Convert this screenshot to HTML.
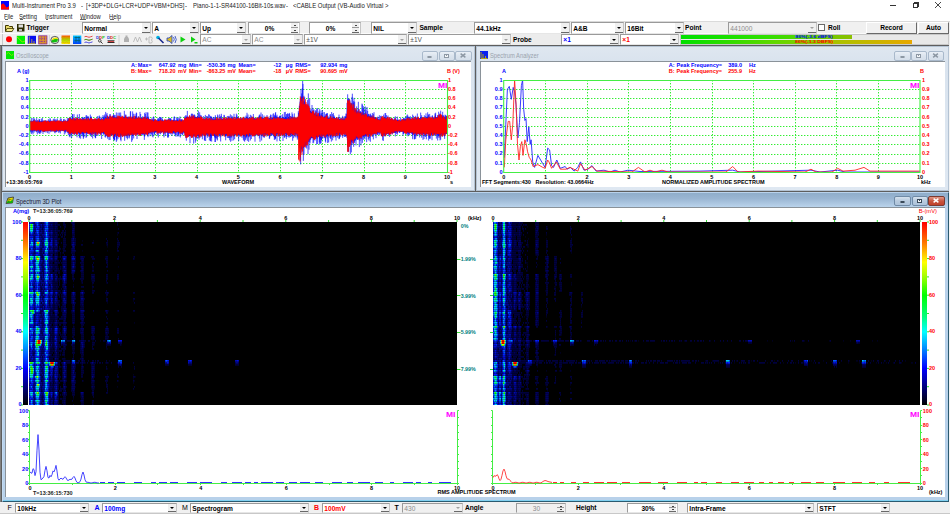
<!DOCTYPE html><html><head><meta charset="utf-8"><style>
html,body{margin:0;padding:0;}
body{width:950px;height:514px;overflow:hidden;position:relative;background:#fff;font-family:"Liberation Sans", sans-serif;}
.a{position:absolute;}
.t{position:absolute;white-space:pre;line-height:1.2;font-family:"Liberation Sans", sans-serif;}
svg{position:absolute;left:0;top:0;}
</style></head><body>
<svg width="950" height="20"><rect x="1" y="1" width="8" height="8.5" fill="#0000ff"/><path d="M1 5 Q2 3 3.5 3.5 Q5 4.5 6.3 7.2 Q7.5 7.5 9 6 V9.5 H1z" fill="#ff0000"/></svg>
<div class="t" style="left:11.6px;top:1.7px;font-size:6.45px;font-weight:normal;color:#222;transform:scaleX(0.93);transform-origin:0 50%;">Multi-Instrument Pro 3.9</div>
<div class="t" style="left:81px;top:1.7px;font-size:6.45px;font-weight:normal;color:#222;transform:scaleX(0.93);transform-origin:0 50%;">-</div>
<div class="t" style="left:86.3px;top:1.7px;font-size:6.45px;font-weight:normal;color:#222;transform:scaleX(0.93);transform-origin:0 50%;">[+3DP+DLG+LCR+UDP+VBM+DHS]</div>
<div class="t" style="left:185px;top:1.7px;font-size:6.45px;font-weight:normal;color:#222;transform:scaleX(0.93);transform-origin:0 50%;">-</div>
<div class="t" style="left:192.5px;top:1.7px;font-size:6.45px;font-weight:normal;color:#222;transform:scaleX(0.93);transform-origin:0 50%;">Piano-1-1-SR44100-16Bit-10s.wav</div>
<div class="t" style="left:285.5px;top:1.7px;font-size:6.45px;font-weight:normal;color:#222;transform:scaleX(0.93);transform-origin:0 50%;">-</div>
<div class="t" style="left:292.5px;top:1.7px;font-size:6.45px;font-weight:normal;color:#222;transform:scaleX(0.93);transform-origin:0 50%;">&lt;CABLE Output (VB-Audio Virtual &gt;</div>
<div class="a" style="left:890px;top:5px;width:6px;height:1px;background:#333"></div>
<div class="a" style="left:913px;top:3px;width:5px;height:5px;border:1px solid #333;box-sizing:border-box;"></div>
<div class="a" style="left:914px;top:2px;width:5px;height:5px;border-top:1px solid #333;border-right:1px solid #333;box-sizing:border-box;"></div>
<svg width="950" height="514" style="pointer-events:none"><path d="M935 2 L941 8 M941 2 L935 8" stroke="#333" stroke-width="0.9"/></svg>
<div class="t" style="left:4px;top:12.5px;font-size:6.45px;font-weight:normal;color:#222;transform:scaleX(0.9);transform-origin:0 50%;">File</div>
<div class="t" style="left:19px;top:12.5px;font-size:6.45px;font-weight:normal;color:#222;transform:scaleX(0.9);transform-origin:0 50%;">Setting</div>
<div class="t" style="left:45px;top:12.5px;font-size:6.45px;font-weight:normal;color:#222;transform:scaleX(0.9);transform-origin:0 50%;">Instrument</div>
<div class="t" style="left:80px;top:12.5px;font-size:6.45px;font-weight:normal;color:#222;transform:scaleX(0.9);transform-origin:0 50%;">Window</div>
<div class="t" style="left:109px;top:12.5px;font-size:6.45px;font-weight:normal;color:#222;transform:scaleX(0.9);transform-origin:0 50%;">Help</div>
<div class="a" style="left:4.5px;top:19.0px;width:3px;height:0.7px;background:#666"></div>
<div class="a" style="left:19.5px;top:19.0px;width:3.5px;height:0.7px;background:#666"></div>
<div class="a" style="left:45.5px;top:19.0px;width:2px;height:0.7px;background:#666"></div>
<div class="a" style="left:80px;top:19.0px;width:5.5px;height:0.7px;background:#666"></div>
<div class="a" style="left:109.5px;top:19.0px;width:4px;height:0.7px;background:#666"></div>
<div class="a" style="left:0px;top:21px;width:950px;height:1px;background:#dadada"></div>
<div class="a" style="left:0px;top:22px;width:950px;height:24px;background:#f0f0f0"></div>
<div class="a" style="left:0px;top:33px;width:950px;height:1px;background:#fbfbfb"></div>
<div class="a" style="left:2px;top:22px;width:1px;height:11px;background:#c8c8c8"></div>
<div class="a" style="left:2px;top:34px;width:1px;height:11px;background:#c8c8c8"></div>
<svg width="950" height="60">
<path d="M5.5 25.5h3l1 1h3v4.5h-7z" fill="#e6d86a" stroke="#403800" stroke-width="1"/>
<path d="M7 28.5h7l-2 3h-6.5z" fill="#f3ea8a" stroke="#403800" stroke-width="0.8"/>
<rect x="17" y="24" width="7.5" height="7.5" fill="#2b2b00"/>
<rect x="18.5" y="24.5" width="4.5" height="3" fill="#ddd"/>
<rect x="19" y="29" width="3" height="2" fill="#bbb"/>
</svg>
<div class="t" style="left:26.6px;top:23.6px;font-size:6.6px;font-weight:bold;color:#000;transform:scaleX(1.0);transform-origin:0 50%;">Trigger</div>
<div class="a" style="left:82px;top:22px;width:69px;height:12px;background:#fff;border-top:1px solid #9a9a9a;border-left:1px solid #9a9a9a;border-bottom:1px solid #e6e6e6;border-right:1px solid #c4c4c4;box-sizing:border-box;"></div><div class="t" style="left:84.3px;top:24.8px;font-size:6.6px;font-weight:bold;color:#000;transform:scaleX(1.0);transform-origin:0 50%;">Normal</div><div class="a" style="left:142px;top:23px;width:8px;height:10px;background:#f0f0f0;border-bottom:1px solid #696969;box-sizing:border-box;"></div><div class="a" style="left:144px;top:27.0px;width:0;height:0;border-left:2px solid transparent;border-right:2px solid transparent;border-top:2.5px solid #000;"></div>
<div class="a" style="left:152px;top:22px;width:47px;height:12px;background:#fff;border-top:1px solid #9a9a9a;border-left:1px solid #9a9a9a;border-bottom:1px solid #e6e6e6;border-right:1px solid #c4c4c4;box-sizing:border-box;"></div><div class="t" style="left:154.3px;top:24.8px;font-size:6.6px;font-weight:bold;color:#000;transform:scaleX(1.0);transform-origin:0 50%;">A</div><div class="a" style="left:190px;top:23px;width:8px;height:10px;background:#f0f0f0;border-bottom:1px solid #696969;box-sizing:border-box;"></div><div class="a" style="left:192px;top:27.0px;width:0;height:0;border-left:2px solid transparent;border-right:2px solid transparent;border-top:2.5px solid #000;"></div>
<div class="a" style="left:200px;top:22px;width:46px;height:12px;background:#fff;border-top:1px solid #9a9a9a;border-left:1px solid #9a9a9a;border-bottom:1px solid #e6e6e6;border-right:1px solid #c4c4c4;box-sizing:border-box;"></div><div class="t" style="left:202.3px;top:24.8px;font-size:6.6px;font-weight:bold;color:#000;transform:scaleX(1.0);transform-origin:0 50%;">Up</div><div class="a" style="left:237px;top:23px;width:8px;height:10px;background:#f0f0f0;border-bottom:1px solid #696969;box-sizing:border-box;"></div><div class="a" style="left:239px;top:27.0px;width:0;height:0;border-left:2px solid transparent;border-right:2px solid transparent;border-top:2.5px solid #000;"></div>
<div class="a" style="left:248px;top:22px;width:52px;height:12px;background:#fff;border-top:1px solid #9a9a9a;border-left:1px solid #9a9a9a;border-bottom:1px solid #e6e6e6;border-right:1px solid #c4c4c4;box-sizing:border-box;"></div><div class="t" style="left:269.5px;top:24.8px;font-size:6.6px;font-weight:bold;color:#000;transform:translateX(-50%) scaleX(1.0);">0%</div><div class="a" style="left:291px;top:23px;width:7px;height:5px;background:#f0f0f0;border-bottom:1px solid #9a9a9a;box-sizing:border-box;"></div><div class="a" style="left:291px;top:28px;width:7px;height:5px;background:#f0f0f0;border-bottom:1px solid #696969;box-sizing:border-box;"></div><div class="a" style="left:294px;top:25px;width:1.5px;height:1px;background:#444"></div><div class="a" style="left:294px;top:30px;width:1.5px;height:1px;background:#444"></div>
<div class="a" style="left:309px;top:22px;width:52px;height:12px;background:#fff;border-top:1px solid #9a9a9a;border-left:1px solid #9a9a9a;border-bottom:1px solid #e6e6e6;border-right:1px solid #c4c4c4;box-sizing:border-box;"></div><div class="t" style="left:330.5px;top:24.8px;font-size:6.6px;font-weight:bold;color:#000;transform:translateX(-50%) scaleX(1.0);">0%</div><div class="a" style="left:352px;top:23px;width:7px;height:5px;background:#f0f0f0;border-bottom:1px solid #9a9a9a;box-sizing:border-box;"></div><div class="a" style="left:352px;top:28px;width:7px;height:5px;background:#f0f0f0;border-bottom:1px solid #696969;box-sizing:border-box;"></div><div class="a" style="left:355px;top:25px;width:1.5px;height:1px;background:#444"></div><div class="a" style="left:355px;top:30px;width:1.5px;height:1px;background:#444"></div>
<div class="a" style="left:371px;top:22px;width:46px;height:12px;background:#fff;border-top:1px solid #9a9a9a;border-left:1px solid #9a9a9a;border-bottom:1px solid #e6e6e6;border-right:1px solid #c4c4c4;box-sizing:border-box;"></div><div class="t" style="left:373.3px;top:24.8px;font-size:6.6px;font-weight:bold;color:#000;transform:scaleX(1.0);transform-origin:0 50%;">NIL</div><div class="a" style="left:408px;top:23px;width:8px;height:10px;background:#f0f0f0;border-bottom:1px solid #696969;box-sizing:border-box;"></div><div class="a" style="left:410px;top:27.0px;width:0;height:0;border-left:2px solid transparent;border-right:2px solid transparent;border-top:2.5px solid #000;"></div>
<div class="t" style="left:419.4px;top:23.7px;font-size:6.6px;font-weight:bold;color:#000;transform:scaleX(1.0);transform-origin:0 50%;">Sample</div>
<div class="a" style="left:474px;top:22px;width:96px;height:12px;background:#fff;border-top:1px solid #9a9a9a;border-left:1px solid #9a9a9a;border-bottom:1px solid #e6e6e6;border-right:1px solid #c4c4c4;box-sizing:border-box;"></div><div class="t" style="left:476.3px;top:24.8px;font-size:6.6px;font-weight:bold;color:#000;transform:scaleX(1.0);transform-origin:0 50%;">44.1kHz</div><div class="a" style="left:561px;top:23px;width:8px;height:10px;background:#f0f0f0;border-bottom:1px solid #696969;box-sizing:border-box;"></div><div class="a" style="left:563px;top:27.0px;width:0;height:0;border-left:2px solid transparent;border-right:2px solid transparent;border-top:2.5px solid #000;"></div>
<div class="a" style="left:571px;top:22px;width:53px;height:12px;background:#fff;border-top:1px solid #9a9a9a;border-left:1px solid #9a9a9a;border-bottom:1px solid #e6e6e6;border-right:1px solid #c4c4c4;box-sizing:border-box;"></div><div class="t" style="left:573.3px;top:24.8px;font-size:6.6px;font-weight:bold;color:#000;transform:scaleX(1.0);transform-origin:0 50%;">A&amp;B</div><div class="a" style="left:615px;top:23px;width:8px;height:10px;background:#f0f0f0;border-bottom:1px solid #696969;box-sizing:border-box;"></div><div class="a" style="left:617px;top:27.0px;width:0;height:0;border-left:2px solid transparent;border-right:2px solid transparent;border-top:2.5px solid #000;"></div>
<div class="a" style="left:625px;top:22px;width:59px;height:12px;background:#fff;border-top:1px solid #9a9a9a;border-left:1px solid #9a9a9a;border-bottom:1px solid #e6e6e6;border-right:1px solid #c4c4c4;box-sizing:border-box;"></div><div class="t" style="left:627.3px;top:24.8px;font-size:6.6px;font-weight:bold;color:#000;transform:scaleX(1.0);transform-origin:0 50%;">16Bit</div><div class="a" style="left:675px;top:23px;width:8px;height:10px;background:#f0f0f0;border-bottom:1px solid #696969;box-sizing:border-box;"></div><div class="a" style="left:677px;top:27.0px;width:0;height:0;border-left:2px solid transparent;border-right:2px solid transparent;border-top:2.5px solid #000;"></div>
<div class="t" style="left:685px;top:23.7px;font-size:6.6px;font-weight:bold;color:#000;transform:scaleX(1.0);transform-origin:0 50%;">Point</div>
<div class="a" style="left:728px;top:22px;width:89px;height:12px;background:#f0f0f0;border-top:1px solid #9a9a9a;border-left:1px solid #9a9a9a;border-bottom:1px solid #e6e6e6;border-right:1px solid #c4c4c4;box-sizing:border-box;"></div><div class="t" style="left:730.3px;top:24.8px;font-size:6.6px;font-weight:normal;color:#8d8d8d;transform:scaleX(1.0);transform-origin:0 50%;">441000</div><div class="a" style="left:808px;top:23px;width:8px;height:10px;background:#f0f0f0;border-bottom:1px solid #696969;box-sizing:border-box;"></div><div class="a" style="left:810px;top:27.0px;width:0;height:0;border-left:2px solid transparent;border-right:2px solid transparent;border-top:2.5px solid #a0a0a0;"></div>
<div class="a" style="left:818px;top:24px;width:7px;height:7px;background:#fff;border:1px solid #6a6a6a;box-sizing:border-box;"></div>
<div class="t" style="left:828px;top:23.7px;font-size:6.6px;font-weight:bold;color:#000;transform:scaleX(1.0);transform-origin:0 50%;">Roll</div>
<div class="a" style="left:866px;top:22px;width:51px;height:12px;background:#f0f0f0;border-top:1px solid #fff;border-left:1px solid #fff;border-right:1px solid #696969;border-bottom:1px solid #696969;box-sizing:border-box;"></div>
<div class="t" style="left:891.5px;top:23.7px;font-size:6.6px;font-weight:bold;color:#000;transform:translateX(-50%) scaleX(1.0);">Record</div>
<div class="a" style="left:918px;top:22px;width:31px;height:12px;background:#f0f0f0;border-top:1px solid #fff;border-left:1px solid #fff;border-right:1px solid #696969;border-bottom:1px solid #696969;box-sizing:border-box;"></div>
<div class="t" style="left:933.5px;top:23.7px;font-size:6.6px;font-weight:bold;color:#000;transform:translateX(-50%) scaleX(1.0);">Auto</div>
<svg width="950" height="60">
<circle cx="9" cy="39.2" r="3" fill="#ff0000"/>
<rect x="16.8" y="35.8" width="8.2" height="8.2" fill="#00f000"/>
<path d="M17 37 Q19 38 21 41 Q22.5 43 25 41" fill="none" stroke="#c8e000" stroke-width="0.7"/>
<rect x="27.8" y="35.8" width="8.2" height="8.2" fill="#0a10f0"/>
<path d="M29.3 36.5V43.5M31.8 39V43.5M34 41V43.5M28.5 43.5H35.5" stroke="#b8a040" stroke-width="0.9" fill="none"/>
<rect x="38.7" y="35.8" width="8.3" height="8.2" fill="#d89030" stroke="#8020a0" stroke-width="0.7"/>
<path d="M39.5 38.5h7M39.5 41.5h7M41.5 36.5v7M44.5 36.5v7" stroke="#9030a0" stroke-width="0.9" stroke-dasharray="1 1.2"/>
<rect x="48.8" y="35" width="1" height="10" fill="#d0d0d0"/>
<ellipse cx="54.8" cy="40" rx="4" ry="3.6" fill="#f0f0f0" stroke="#333" stroke-width="0.8"/>
<path d="M51.5 40.5 Q54 38 58 39 L57.5 41.5 Q54 43 51.5 42z" fill="#10c010"/>
<path d="M52 39 Q54.5 37 57.5 37.8 L57.8 39.2 Q54.5 38.6 52 40.2z" fill="#f0e000"/>
<defs><linearGradient id="g1" x1="0" y1="0" x2="0" y2="1"><stop offset="0" stop-color="#ff5000"/><stop offset="0.5" stop-color="#a0e000"/><stop offset="1" stop-color="#ffe000"/></linearGradient>
<linearGradient id="g2" x1="0" y1="0" x2="0" y2="1"><stop offset="0" stop-color="#00c8ff"/><stop offset="1" stop-color="#0040ff"/></linearGradient></defs>
<rect x="61.5" y="35.5" width="8.5" height="8.5" fill="url(#g1)"/>
<path d="M61.5 37.5q1 -1 2 0t2 0t2 0t2.5 0M61.5 40q1 -1 2 0t2 0t2 0t2.5 0M61.5 42.5q1 -1 2 0t2 0t2 0t2.5 0" stroke="#e0a000" stroke-width="0.6" fill="none"/>
<rect x="73" y="35.5" width="8.3" height="8.5" fill="url(#g2)"/>
<path d="M74.5 37.5h5.5M74.5 40.5h5.5M76 36.5v6M79 36.5v6" stroke="#006070" stroke-width="0.8" fill="none"/>
<path d="M84.5 36.8q1.5 -1 3 0t3 0l2 -0.6M84.5 39.8q1.5 -1 3 0t3 0l2 -0.6" stroke="#e02020" stroke-width="0.8" fill="none"/>
<path d="M84.5 39.8q1.5 -1 3 0t3 0l2 -0.6" stroke="#20b020" stroke-width="0.8" fill="none"/>
<path d="M84.5 42.5q1.5 -1 3 0t3 0l2 -0.6" stroke="#2020e0" stroke-width="0.8" fill="none"/>
<text x="96" y="38.6" font-family="Liberation Sans" font-weight="bold" font-size="4.2" fill="#2040e0">D<tspan fill="#e02020">D</tspan><tspan fill="#20c020">P</tspan></text>
<circle cx="99.8" cy="40.8" r="1.3" fill="none" stroke="#222" stroke-width="0.8"/><path d="M100.8 41.8l1.8 1.8" stroke="#222" stroke-width="0.9"/>
<text x="107" y="38.6" font-family="Liberation Sans" font-weight="bold" font-size="4.2" fill="#2040e0">D<tspan fill="#e02020">D</tspan><tspan fill="#20c020">C</tspan></text>
<path d="M107.5 40.8h7M107.5 42.5h7" stroke="#111" stroke-width="0.9"/><path d="M108 41.6h6" stroke="#e02020" stroke-width="0.8"/>
<rect x="118.5" y="35" width="1" height="10" fill="#d0d0d0"/>
<path d="M124 42h5v-3l-1-2h-3l-1 2z" fill="#b0b0b0"/><rect x="125.5" y="35.5" width="2" height="2" fill="#b0b0b0"/>
<path d="M133.5 42l2 -5l2 5M137.5 42l2 -5l2 5" stroke="#b8b8b8" stroke-width="0.9" fill="none"/>
<path d="M145 39h3M146.5 37.5v3M149 37v6h2.5q1.5 -1.5 0 -3q1.5 -1.5 0 -3z" stroke="#b8b8b8" stroke-width="0.9" fill="none"/>
<circle cx="158" cy="37.5" r="1.8" fill="#00b0e0"/><path d="M158.5 38l5 5" stroke="#1a2a90" stroke-width="1.6"/>
<path d="M167 38h2l3 -2.5v8l-3 -2.5h-2z" fill="#e0c020" stroke="#2040c0" stroke-width="0.8"/>
<path d="M173.5 37q1.5 2.2 0 4.5M175 36q2.5 3.5 0 7" stroke="#2040c0" stroke-width="0.8" fill="none"/>
<path d="M180.5 36.5l5 3l-5 3z" fill="#10d010"/>
<path d="M191 36.5l4.5 3l-4.5 3z" fill="#10d010"/><rect x="194.5" y="42" width="3" height="1.5" fill="#10d010"/>
</svg>
<div class="a" style="left:200px;top:34px;width:51px;height:11px;background:#fff;border-top:1px solid #9a9a9a;border-left:1px solid #9a9a9a;border-bottom:1px solid #e6e6e6;border-right:1px solid #c4c4c4;box-sizing:border-box;"></div><div class="t" style="left:202.3px;top:36.3px;font-size:6.6px;font-weight:normal;color:#8d8d8d;transform:scaleX(1.0);transform-origin:0 50%;">AC</div><div class="a" style="left:242px;top:35px;width:8px;height:9px;background:#f0f0f0;border-bottom:1px solid #696969;box-sizing:border-box;"></div><div class="a" style="left:244px;top:38.5px;width:0;height:0;border-left:2px solid transparent;border-right:2px solid transparent;border-top:2.5px solid #a0a0a0;"></div>
<div class="a" style="left:252px;top:34px;width:51px;height:11px;background:#fff;border-top:1px solid #9a9a9a;border-left:1px solid #9a9a9a;border-bottom:1px solid #e6e6e6;border-right:1px solid #c4c4c4;box-sizing:border-box;"></div><div class="t" style="left:254.3px;top:36.3px;font-size:6.6px;font-weight:normal;color:#8d8d8d;transform:scaleX(1.0);transform-origin:0 50%;">AC</div><div class="a" style="left:294px;top:35px;width:8px;height:9px;background:#f0f0f0;border-bottom:1px solid #696969;box-sizing:border-box;"></div><div class="a" style="left:296px;top:38.5px;width:0;height:0;border-left:2px solid transparent;border-right:2px solid transparent;border-top:2.5px solid #a0a0a0;"></div>
<div class="a" style="left:304px;top:34px;width:103px;height:11px;background:#fff;border-top:1px solid #9a9a9a;border-left:1px solid #9a9a9a;border-bottom:1px solid #e6e6e6;border-right:1px solid #c4c4c4;box-sizing:border-box;"></div><div class="t" style="left:306.3px;top:36.3px;font-size:6.6px;font-weight:normal;color:#505050;transform:scaleX(1.0);transform-origin:0 50%;">&#177;1V</div><div class="a" style="left:398px;top:35px;width:8px;height:9px;background:#f0f0f0;border-bottom:1px solid #696969;box-sizing:border-box;"></div><div class="a" style="left:400px;top:38.5px;width:0;height:0;border-left:2px solid transparent;border-right:2px solid transparent;border-top:2.5px solid #a0a0a0;"></div>
<div class="a" style="left:408px;top:34px;width:103px;height:11px;background:#fff;border-top:1px solid #9a9a9a;border-left:1px solid #9a9a9a;border-bottom:1px solid #e6e6e6;border-right:1px solid #c4c4c4;box-sizing:border-box;"></div><div class="t" style="left:410.3px;top:36.3px;font-size:6.6px;font-weight:normal;color:#505050;transform:scaleX(1.0);transform-origin:0 50%;">&#177;1V</div><div class="a" style="left:502px;top:35px;width:8px;height:9px;background:#f0f0f0;border-bottom:1px solid #696969;box-sizing:border-box;"></div><div class="a" style="left:504px;top:38.5px;width:0;height:0;border-left:2px solid transparent;border-right:2px solid transparent;border-top:2.5px solid #a0a0a0;"></div>
<div class="a" style="left:512px;top:34px;width:49px;height:11px;background:#ececec;"></div>
<div class="t" style="left:513px;top:35.6px;font-size:6.6px;font-weight:bold;color:#000;transform:scaleX(1.0);transform-origin:0 50%;">Probe</div>
<div class="a" style="left:561px;top:34px;width:58px;height:11px;background:#fff;border-top:1px solid #9a9a9a;border-left:1px solid #9a9a9a;border-bottom:1px solid #e6e6e6;border-right:1px solid #c4c4c4;box-sizing:border-box;"></div><div class="t" style="left:563.3px;top:36.3px;font-size:6.6px;font-weight:bold;color:#0000ff;transform:scaleX(1.0);transform-origin:0 50%;">&#215;1</div><div class="a" style="left:610px;top:35px;width:8px;height:9px;background:#f0f0f0;border-bottom:1px solid #696969;box-sizing:border-box;"></div><div class="a" style="left:612px;top:38.5px;width:0;height:0;border-left:2px solid transparent;border-right:2px solid transparent;border-top:2.5px solid #000;"></div>
<div class="a" style="left:620px;top:34px;width:59px;height:11px;background:#fff;border-top:1px solid #9a9a9a;border-left:1px solid #9a9a9a;border-bottom:1px solid #e6e6e6;border-right:1px solid #c4c4c4;box-sizing:border-box;"></div><div class="t" style="left:622.3px;top:36.3px;font-size:6.6px;font-weight:bold;color:#ff0000;transform:scaleX(1.0);transform-origin:0 50%;">&#215;1</div><div class="a" style="left:670px;top:35px;width:8px;height:9px;background:#f0f0f0;border-bottom:1px solid #696969;box-sizing:border-box;"></div><div class="a" style="left:672px;top:38.5px;width:0;height:0;border-left:2px solid transparent;border-right:2px solid transparent;border-top:2.5px solid #000;"></div>
<div class="a" style="left:680px;top:34px;width:269px;height:11px;background:#e8e8e8;border:1px solid #c8c8c8;box-sizing:border-box;"></div>
<div class="a" style="left:681px;top:35px;width:171px;height:4px;background:linear-gradient(90deg,#00e000 0%,#30e000 50%,#8cc000 100%);"></div>
<div class="a" style="left:681px;top:40px;width:231px;height:4px;background:linear-gradient(90deg,#00e000 0%,#60d800 40%,#b0c000 70%,#e8a800 100%);"></div>
<div class="t" style="left:813.5px;top:34.7px;font-size:4.1px;font-weight:bold;color:#0000ff;transform:translateX(-50%) scaleX(1.25);">86%(-3.6 dBFS)</div>
<div class="t" style="left:813.5px;top:40.1px;font-size:4.1px;font-weight:bold;color:#ff0000;transform:translateX(-50%) scaleX(1.25);">86%(-1.3 DBFS)</div>
<div class="a" style="left:0px;top:45px;width:950px;height:457px;background:#5e5e5e"></div>
<div class="a" style="left:0px;top:46px;width:1px;height:456px;background:#808080"></div>
<div class="a" style="left:949px;top:45px;width:1px;height:457px;background:#f4f4f4"></div>
<div class="a" style="left:2px;top:46px;width:473px;height:145px;background:linear-gradient(180deg,#dfe7f0 0px,#d9e3ee 15px,#dfe8f2 100%);border:1px solid #b4c3d3;box-sizing:border-box;"></div><div class="a" style="left:6px;top:51px;width:8px;height:8px;background:#00e800;"></div><svg width="950" height="514"><path d="M6.5 54q2 -3 3.5 0t3.5 0" stroke="#a0e000" stroke-width="0.8" fill="none"/></svg><div class="t" style="left:16px;top:52.2px;font-size:6.3px;font-weight:normal;color:#9aa3ad;transform:scaleX(0.92);transform-origin:0 50%;">Oscilloscope</div>
<div class="a" style="left:422px;top:51px;width:16px;height:10px;background:linear-gradient(180deg,#e9eff6 0%,#dbe4ee 50%,#d5dfea 100%);border:1px solid #a9b9cb;border-radius:2px;box-sizing:border-box;"></div><div class="a" style="left:427.0px;top:55.7px;width:5px;height:2px;background:#fafafa;border:0.8px solid #8d98a4;border-radius:1px;box-sizing:border-box;"></div>
<div class="a" style="left:439px;top:51px;width:16px;height:10px;background:linear-gradient(180deg,#e9eff6 0%,#dbe4ee 50%,#d5dfea 100%);border:1px solid #a9b9cb;border-radius:2px;box-sizing:border-box;"></div><div class="a" style="left:443.9px;top:53.5px;width:5.2px;height:4.2px;background:#f4f6f8;border:1px solid #8d98a4;box-sizing:border-box;"></div><div class="a" style="left:445.7px;top:55.0px;width:1.6px;height:1.4px;background:#8d98a4;"></div>
<div class="a" style="left:455px;top:51px;width:17px;height:10px;background:linear-gradient(180deg,#e9eff6 0%,#dbe4ee 50%,#d5dfea 100%);border:1px solid #a9b9cb;border-radius:2px;box-sizing:border-box;"></div><svg width="950" height="514" style="pointer-events:none"><path d="M460.6 53.7L465.4 57.3M465.4 53.7L460.6 57.3" stroke="#8d98a4" stroke-width="1.5"/></svg>
<div class="a" style="left:476px;top:46px;width:473px;height:145px;background:linear-gradient(180deg,#dfe7f0 0px,#d9e3ee 15px,#dfe8f2 100%);border:1px solid #b4c3d3;box-sizing:border-box;"></div><div class="a" style="left:480px;top:51px;width:8px;height:8px;background:#0a20f0;"></div><svg width="950" height="514"><path d="M481 52v6.5h6.5M483 54v4.5M485.5 56v2.5" stroke="#c8b000" stroke-width="0.9" fill="none"/></svg><div class="t" style="left:490px;top:52.2px;font-size:6.3px;font-weight:normal;color:#9aa3ad;transform:scaleX(0.92);transform-origin:0 50%;">Spectrum Analyzer</div>
<div class="a" style="left:894px;top:51px;width:17px;height:10px;background:linear-gradient(180deg,#e9eff6 0%,#dbe4ee 50%,#d5dfea 100%);border:1px solid #a9b9cb;border-radius:2px;box-sizing:border-box;"></div><div class="a" style="left:899.5px;top:55.7px;width:5px;height:2px;background:#fafafa;border:0.8px solid #8d98a4;border-radius:1px;box-sizing:border-box;"></div>
<div class="a" style="left:911px;top:51px;width:16px;height:10px;background:linear-gradient(180deg,#e9eff6 0%,#dbe4ee 50%,#d5dfea 100%);border:1px solid #a9b9cb;border-radius:2px;box-sizing:border-box;"></div><div class="a" style="left:915.9px;top:53.5px;width:5.2px;height:4.2px;background:#f4f6f8;border:1px solid #8d98a4;box-sizing:border-box;"></div><div class="a" style="left:917.7px;top:55.0px;width:1.6px;height:1.4px;background:#8d98a4;"></div>
<div class="a" style="left:928px;top:51px;width:16px;height:10px;background:linear-gradient(180deg,#e9eff6 0%,#dbe4ee 50%,#d5dfea 100%);border:1px solid #a9b9cb;border-radius:2px;box-sizing:border-box;"></div><svg width="950" height="514" style="pointer-events:none"><path d="M933.1 53.7L937.9 57.3M937.9 53.7L933.1 57.3" stroke="#8d98a4" stroke-width="1.5"/></svg>
<div class="a" style="left:2px;top:192px;width:947px;height:310px;background:#b8d1ea;border-left:1px solid #c4dbf2;border-top:1px solid #b9d2ec;border-right:1px solid #2a5a70;border-bottom:1px solid #2a5a70;box-sizing:border-box;"></div><div class="a" style="left:3px;top:193px;width:945px;height:14px;background:linear-gradient(180deg,#8fadca 0%,#9ab6d3 40%,#afc9e3 80%,#b9d3ec 100%);"></div><div class="a" style="left:3px;top:500px;width:945px;height:1px;background:#80d0f0"></div><svg width="950" height="514"><path d="M6 203.5 L8 198 L13.5 197 L12.5 203 z" fill="#e8e000" stroke="#333" stroke-width="0.8"/><path d="M6.5 203 L8 200.5 L10 201.5 L12.8 199.5 L12.5 203z" fill="#10b010"/><path d="M8.5 199.5h3M9 198.5v4" stroke="#505000" stroke-width="0.5"/></svg><div class="t" style="left:16px;top:198.2px;font-size:6.3px;font-weight:normal;color:#1a1a30;transform:scaleX(0.92);transform-origin:0 50%;">Spectrum 3D Plot</div>
<div class="a" style="left:894px;top:196px;width:17px;height:10px;background:linear-gradient(180deg,#d6e2ee 0%,#b7cade 50%,#aec3da 100%);border:1px solid #6f8aa6;border-radius:2px;box-sizing:border-box;"></div><div class="a" style="left:899.5px;top:200.7px;width:5px;height:2px;background:#fafafa;border:0.8px solid #3a4a5a;border-radius:1px;box-sizing:border-box;"></div>
<div class="a" style="left:912px;top:196px;width:16px;height:10px;background:linear-gradient(180deg,#d6e2ee 0%,#b7cade 50%,#aec3da 100%);border:1px solid #6f8aa6;border-radius:2px;box-sizing:border-box;"></div><div class="a" style="left:916.9px;top:198.5px;width:5.2px;height:4.2px;background:#f4f6f8;border:1px solid #3a4a5a;box-sizing:border-box;"></div><div class="a" style="left:918.7px;top:200.0px;width:1.6px;height:1.4px;background:#3a4a5a;"></div>
<div class="a" style="left:928px;top:196px;width:17px;height:10px;background:linear-gradient(180deg,#e09a8a 0%,#c8553f 50%,#c0402a 100%);border:1px solid #7d3a30;border-radius:2px;box-sizing:border-box;"></div><svg width="950" height="514" style="pointer-events:none"><path d="M933.6 198.7L938.4 202.3M938.4 198.7L933.6 202.3" stroke="#fff" stroke-width="1.5"/></svg>
<div class="a" style="left:5px;top:61px;width:466px;height:125.5px;background:#fff;border-top:1px solid #8a9299;border-left:1px solid #8a9299;box-sizing:border-box;"></div>
<div class="a" style="left:479.5px;top:61px;width:465px;height:125.5px;background:#fff;border-top:1px solid #8a9299;border-left:1px solid #8a9299;box-sizing:border-box;"></div>
<div class="a" style="left:5px;top:207px;width:940px;height:290.2px;background:#fff;border-top:1px solid #8a9299;border-left:1px solid #8a9299;box-sizing:border-box;"></div>
<div class="a" style="left:0px;top:502px;width:950px;height:12px;background:#f0f0f0"></div>
<div class="a" style="left:0px;top:513px;width:950px;height:1px;background:#c8c8c8"></div>
<div class="t" style="left:7.5px;top:504.1px;font-size:7px;font-weight:normal;color:#000;transform:scaleX(1.0);transform-origin:0 50%;">F</div>
<div class="a" style="left:15px;top:503px;width:74px;height:10px;background:#fff;border-top:1px solid #9a9a9a;border-left:1px solid #9a9a9a;border-bottom:1px solid #e6e6e6;border-right:1px solid #c4c4c4;box-sizing:border-box;"></div><div class="t" style="left:17.3px;top:504.8px;font-size:6.6px;font-weight:bold;color:#000;transform:scaleX(1.0);transform-origin:0 50%;">10kHz</div><div class="a" style="left:80px;top:504px;width:8px;height:8px;background:#f0f0f0;border-bottom:1px solid #696969;box-sizing:border-box;"></div><div class="a" style="left:82px;top:507.0px;width:0;height:0;border-left:2px solid transparent;border-right:2px solid transparent;border-top:2.5px solid #000;"></div>
<div class="t" style="left:94.5px;top:504.1px;font-size:7px;font-weight:bold;color:#0000ff;transform:scaleX(1.0);transform-origin:0 50%;">A</div>
<div class="a" style="left:102px;top:503px;width:75px;height:10px;background:#fff;border-top:1px solid #9a9a9a;border-left:1px solid #9a9a9a;border-bottom:1px solid #e6e6e6;border-right:1px solid #c4c4c4;box-sizing:border-box;"></div><div class="t" style="left:104.3px;top:504.8px;font-size:6.6px;font-weight:bold;color:#0000ff;transform:scaleX(1.0);transform-origin:0 50%;">100mg</div><div class="a" style="left:168px;top:504px;width:8px;height:8px;background:#f0f0f0;border-bottom:1px solid #696969;box-sizing:border-box;"></div><div class="a" style="left:170px;top:507.0px;width:0;height:0;border-left:2px solid transparent;border-right:2px solid transparent;border-top:2.5px solid #000;"></div>
<div class="t" style="left:182px;top:504.1px;font-size:7px;font-weight:normal;color:#000;transform:scaleX(1.0);transform-origin:0 50%;">M</div>
<div class="a" style="left:190px;top:503px;width:119px;height:10px;background:#fff;border-top:1px solid #9a9a9a;border-left:1px solid #9a9a9a;border-bottom:1px solid #e6e6e6;border-right:1px solid #c4c4c4;box-sizing:border-box;"></div><div class="t" style="left:192.3px;top:504.8px;font-size:6.6px;font-weight:bold;color:#000;transform:scaleX(1.0);transform-origin:0 50%;">Spectrogram</div><div class="a" style="left:300px;top:504px;width:8px;height:8px;background:#f0f0f0;border-bottom:1px solid #696969;box-sizing:border-box;"></div><div class="a" style="left:302px;top:507.0px;width:0;height:0;border-left:2px solid transparent;border-right:2px solid transparent;border-top:2.5px solid #000;"></div>
<div class="t" style="left:314px;top:504.1px;font-size:7px;font-weight:bold;color:#ff0000;transform:scaleX(1.0);transform-origin:0 50%;">B</div>
<div class="a" style="left:322px;top:503px;width:68px;height:10px;background:#fff;border-top:1px solid #9a9a9a;border-left:1px solid #9a9a9a;border-bottom:1px solid #e6e6e6;border-right:1px solid #c4c4c4;box-sizing:border-box;"></div><div class="t" style="left:324.3px;top:504.8px;font-size:6.6px;font-weight:bold;color:#ff0000;transform:scaleX(1.0);transform-origin:0 50%;">100mV</div><div class="a" style="left:381px;top:504px;width:8px;height:8px;background:#f0f0f0;border-bottom:1px solid #696969;box-sizing:border-box;"></div><div class="a" style="left:383px;top:507.0px;width:0;height:0;border-left:2px solid transparent;border-right:2px solid transparent;border-top:2.5px solid #000;"></div>
<div class="t" style="left:394.5px;top:504.1px;font-size:7px;font-weight:bold;color:#000;transform:scaleX(1.0);transform-origin:0 50%;">T</div>
<div class="a" style="left:402px;top:503px;width:61px;height:10px;background:#f0f0f0;border-top:1px solid #9a9a9a;border-left:1px solid #9a9a9a;border-bottom:1px solid #e6e6e6;border-right:1px solid #c4c4c4;box-sizing:border-box;"></div><div class="t" style="left:404.3px;top:504.8px;font-size:6.6px;font-weight:normal;color:#8d8d8d;transform:scaleX(1.0);transform-origin:0 50%;">430</div><div class="a" style="left:454px;top:504px;width:8px;height:8px;background:#f0f0f0;border-bottom:1px solid #696969;box-sizing:border-box;"></div><div class="a" style="left:456px;top:507.0px;width:0;height:0;border-left:2px solid transparent;border-right:2px solid transparent;border-top:2.5px solid #a0a0a0;"></div>
<div class="t" style="left:465px;top:504.3px;font-size:6.6px;font-weight:bold;color:#000;transform:scaleX(1.0);transform-origin:0 50%;">Angle</div>
<div class="a" style="left:516px;top:503px;width:50px;height:10px;background:#f0f0f0;border-top:1px solid #9a9a9a;border-left:1px solid #9a9a9a;border-bottom:1px solid #e6e6e6;border-right:1px solid #c4c4c4;box-sizing:border-box;"></div><div class="t" style="left:536.5px;top:504.8px;font-size:6.6px;font-weight:normal;color:#8d8d8d;transform:translateX(-50%) scaleX(1.0);">30</div><div class="a" style="left:557px;top:504px;width:7px;height:4px;background:#f0f0f0;border-bottom:1px solid #9a9a9a;box-sizing:border-box;"></div><div class="a" style="left:557px;top:508px;width:7px;height:4px;background:#f0f0f0;border-bottom:1px solid #696969;box-sizing:border-box;"></div><div class="a" style="left:560px;top:506px;width:1.5px;height:1px;background:#444"></div><div class="a" style="left:560px;top:509px;width:1.5px;height:1px;background:#444"></div>
<div class="t" style="left:576px;top:504.3px;font-size:6.6px;font-weight:bold;color:#000;transform:scaleX(1.0);transform-origin:0 50%;">Height</div>
<div class="a" style="left:627px;top:503px;width:51px;height:10px;background:#fff;border-top:1px solid #9a9a9a;border-left:1px solid #9a9a9a;border-bottom:1px solid #e6e6e6;border-right:1px solid #c4c4c4;box-sizing:border-box;"></div><div class="t" style="left:648.0px;top:504.8px;font-size:6.6px;font-weight:bold;color:#000;transform:translateX(-50%) scaleX(1.0);">30%</div><div class="a" style="left:669px;top:504px;width:7px;height:4px;background:#f0f0f0;border-bottom:1px solid #9a9a9a;box-sizing:border-box;"></div><div class="a" style="left:669px;top:508px;width:7px;height:4px;background:#f0f0f0;border-bottom:1px solid #696969;box-sizing:border-box;"></div><div class="a" style="left:672px;top:506px;width:1.5px;height:1px;background:#444"></div><div class="a" style="left:672px;top:509px;width:1.5px;height:1px;background:#444"></div>
<div class="a" style="left:687px;top:503px;width:127px;height:10px;background:#fff;border-top:1px solid #9a9a9a;border-left:1px solid #9a9a9a;border-bottom:1px solid #e6e6e6;border-right:1px solid #c4c4c4;box-sizing:border-box;"></div><div class="t" style="left:689.3px;top:504.8px;font-size:6.6px;font-weight:bold;color:#000;transform:scaleX(1.0);transform-origin:0 50%;">Intra-Frame</div><div class="a" style="left:805px;top:504px;width:8px;height:8px;background:#f0f0f0;border-bottom:1px solid #696969;box-sizing:border-box;"></div><div class="a" style="left:807px;top:507.0px;width:0;height:0;border-left:2px solid transparent;border-right:2px solid transparent;border-top:2.5px solid #000;"></div>
<div class="a" style="left:817px;top:503px;width:73px;height:10px;background:#fff;border-top:1px solid #9a9a9a;border-left:1px solid #9a9a9a;border-bottom:1px solid #e6e6e6;border-right:1px solid #c4c4c4;box-sizing:border-box;"></div><div class="t" style="left:819.3px;top:504.8px;font-size:6.6px;font-weight:bold;color:#000;transform:scaleX(1.0);transform-origin:0 50%;">STFT</div><div class="a" style="left:881px;top:504px;width:8px;height:8px;background:#f0f0f0;border-bottom:1px solid #696969;box-sizing:border-box;"></div><div class="a" style="left:883px;top:507.0px;width:0;height:0;border-left:2px solid transparent;border-right:2px solid transparent;border-top:2.5px solid #000;"></div>
<svg width="950" height="514" style="overflow:visible"><path d="M71.5 80V172" stroke="#33ee33" stroke-width="1" stroke-dasharray="1.4 1.6"/><path d="M113.5 80V172" stroke="#33ee33" stroke-width="1" stroke-dasharray="1.4 1.6"/><path d="M155.5 80V172" stroke="#33ee33" stroke-width="1" stroke-dasharray="1.4 1.6"/><path d="M197.5 80V172" stroke="#33ee33" stroke-width="1" stroke-dasharray="1.4 1.6"/><path d="M238.5 80V172" stroke="#33ee33" stroke-width="1" stroke-dasharray="1.4 1.6"/><path d="M280.5 80V172" stroke="#33ee33" stroke-width="1" stroke-dasharray="1.4 1.6"/><path d="M322.5 80V172" stroke="#33ee33" stroke-width="1" stroke-dasharray="1.4 1.6"/><path d="M364.5 80V172" stroke="#33ee33" stroke-width="1" stroke-dasharray="1.4 1.6"/><path d="M405.5 80V172" stroke="#33ee33" stroke-width="1" stroke-dasharray="1.4 1.6"/><path d="M30 89.5H447.5" stroke="#33ee33" stroke-width="1" stroke-dasharray="1.4 1.6"/><path d="M30 98.5H447.5" stroke="#33ee33" stroke-width="1" stroke-dasharray="1.4 1.6"/><path d="M30 108.5H447.5" stroke="#33ee33" stroke-width="1" stroke-dasharray="1.4 1.6"/><path d="M30 117.5H447.5" stroke="#33ee33" stroke-width="1" stroke-dasharray="1.4 1.6"/><path d="M30 126.5H447.5" stroke="#33ee33" stroke-width="1" stroke-dasharray="1.4 1.6"/><path d="M30 135.5H447.5" stroke="#33ee33" stroke-width="1" stroke-dasharray="1.4 1.6"/><path d="M30 144.5H447.5" stroke="#33ee33" stroke-width="1" stroke-dasharray="1.4 1.6"/><path d="M30 154.5H447.5" stroke="#33ee33" stroke-width="1" stroke-dasharray="1.4 1.6"/><path d="M30 163.5H447.5" stroke="#33ee33" stroke-width="1" stroke-dasharray="1.4 1.6"/><path d="M30.00 121.3V131.0M30.33 121.2V131.1M30.67 120.8V132.3M31.00 121.5V132.4M31.33 118.0V134.0M31.67 121.5V130.5M32.00 121.5V130.5M32.33 121.3V132.7M32.67 121.2V131.4M33.00 117.8V134.4M33.33 121.5V130.5M33.67 120.1V130.6M34.00 118.3V132.7M34.33 118.8V130.7M34.67 121.5V131.3M35.00 121.5V130.5M35.33 121.5V130.5M35.67 119.8V130.5M36.00 121.5V131.8M36.33 121.5V130.6M36.67 118.1V132.3M37.00 121.5V130.6M37.33 121.5V134.4M37.67 120.0V130.5M38.00 121.5V131.1M38.33 121.4V130.7M38.67 121.0V132.9M39.00 118.8V132.5M39.33 120.2V133.7M39.67 119.1V131.1M40.00 121.5V134.0M40.33 121.5V132.5M40.67 121.5V131.7M41.00 121.1V132.8M41.33 118.7V130.5M41.67 121.3V130.5M42.00 121.0V130.5M42.33 118.0V131.4M42.67 121.5V130.5M43.00 120.5V134.0M43.33 121.3V131.8M43.67 121.5V130.9M44.00 120.2V131.6M44.33 121.4V131.5M44.67 121.4V132.2M45.00 120.8V130.6M45.33 121.5V131.3M45.67 120.3V130.6M46.00 121.3V132.6M46.33 121.5V131.1M46.67 120.5V130.8M47.00 121.5V130.5M47.33 121.5V130.5M47.67 121.3V133.2M48.00 121.5V130.7M48.33 119.1V130.6M48.67 121.5V130.8M49.00 120.4V133.8M49.33 121.3V130.5M49.67 120.8V130.8M50.00 118.0V130.7M50.33 119.2V130.5M50.67 121.5V132.2M51.00 121.3V130.5M51.33 121.5V130.5M51.67 120.8V131.4M52.00 120.5V130.5M52.33 121.5V130.7M52.67 121.5V130.6M53.00 120.9V132.0M53.33 118.9V130.5M53.67 121.5V130.7M54.00 121.4V131.0M54.33 118.4V130.7M54.67 120.3V132.5M55.00 121.5V133.3M55.33 121.1V132.2M55.67 119.3V130.6M56.00 121.1V132.1M56.33 119.7V130.5M56.67 121.5V132.2M57.00 121.2V131.8M57.33 118.4V130.8M57.67 121.5V130.9M58.00 120.8V130.9M58.33 121.5V130.6M58.67 121.5V132.8M59.00 121.0V130.5M59.33 120.9V130.5M59.67 121.4V132.3M60.00 120.5V130.5M60.33 118.3V133.5M60.67 121.5V130.7M61.00 121.3V130.5M61.33 118.7V130.5M61.67 121.5V130.5M62.00 121.4V131.2M62.33 121.5V130.8M62.67 121.1V130.7M63.00 121.1V130.5M63.33 120.8V130.9M63.67 119.3V130.5M64.00 118.9V130.5M64.33 121.5V134.5M64.67 121.5V131.8M65.00 119.6V130.6M65.33 121.4V131.5M65.67 120.6V133.4M66.00 121.2V132.0M66.33 121.5V130.5M66.67 121.1V130.8M67.00 121.5V130.5M67.33 118.1V130.9M67.67 120.6V133.1M68.00 120.1V131.9M68.33 118.8V135.1M68.67 118.0V132.7M69.00 119.0V132.9M69.33 117.9V136.6M69.67 118.6V133.5M70.00 119.5V137.4M70.33 116.8V133.1M70.67 118.0V135.4M71.00 117.8V132.9M71.33 119.5V133.0M71.67 119.5V138.0M72.00 118.2V133.8M72.33 114.0V134.2M72.67 114.4V132.9M73.00 119.5V133.1M73.33 119.3V132.9M73.67 118.8V133.5M74.00 114.1V134.2M74.33 118.6V135.3M74.67 119.5V133.3M75.00 118.5V132.9M75.33 118.9V133.9M75.67 118.3V133.7M76.00 119.4V132.9M76.33 119.5V135.2M76.67 117.5V132.9M77.00 119.5V137.3M77.33 114.5V132.9M77.67 117.8V133.3M78.00 118.6V132.9M78.33 119.5V132.9M78.67 119.2V134.4M79.00 118.7V133.2M79.33 114.0V138.2M79.67 119.5V137.1M80.00 119.4V132.9M80.33 118.6V134.1M80.67 119.5V138.7M81.00 119.5V132.9M81.33 118.5V132.9M81.67 119.5V134.5M82.00 119.3V133.4M82.33 117.6V136.3M82.67 116.9V134.1M83.00 119.2V132.9M83.33 118.3V138.9M83.67 117.5V137.6M84.00 119.5V136.8M84.33 118.8V133.4M84.67 117.3V132.9M85.00 119.5V133.0M85.33 119.5V132.9M85.67 119.4V132.9M86.00 115.4V137.9M86.33 117.0V133.0M86.67 115.2V137.1M87.00 119.4V133.1M87.33 119.5V133.7M87.67 116.6V133.7M88.00 116.0V133.0M88.33 118.9V133.7M88.67 116.9V132.9M89.00 119.5V132.9M89.33 119.5V134.2M89.67 118.3V132.9M90.00 119.0V135.3M90.33 114.6V134.4M90.67 117.8V134.8M91.00 116.7V134.4M91.33 116.6V137.0M91.67 118.9V134.8M92.00 119.3V132.9M92.33 119.3V132.9M92.67 119.4V138.5M93.00 119.5V134.3M93.33 119.5V133.3M93.67 119.5V132.9M94.00 119.5V134.8M94.33 119.5V133.0M94.67 119.4V133.6M95.00 119.5V137.0M95.33 118.9V138.2M95.67 119.5V138.1M96.00 118.9V133.5M96.33 118.3V132.9M96.67 119.4V135.7M97.00 119.5V132.9M97.33 116.1V133.5M97.67 119.5V133.6M98.00 119.5V136.0M98.33 119.5V132.9M98.67 119.1V133.3M99.00 116.3V133.0M99.33 115.5V132.9M99.67 118.9V133.5M100.00 119.4V133.0M100.33 119.1V134.8M100.67 119.5V133.1M101.00 116.7V134.3M101.33 117.9V132.9M101.67 119.5V139.0M102.00 118.5V133.0M102.33 119.4V133.0M102.67 119.5V132.9M103.00 115.0V133.7M103.33 116.7V132.9M103.67 118.1V134.8M104.00 116.6V133.9M104.33 119.2V133.2M104.67 114.5V133.8M105.00 116.3V137.2M105.33 118.2V134.0M105.67 111.9V137.5M106.00 117.9V134.7M106.33 117.9V134.8M106.67 114.4V135.9M107.00 113.0V135.5M107.33 117.9V136.9M107.67 115.7V138.7M108.00 116.5V134.6M108.33 116.8V136.8M108.67 117.6V135.1M109.00 117.8V140.1M109.33 116.9V134.7M109.67 114.3V135.9M110.00 117.7V140.0M110.33 114.1V134.6M110.67 117.8V134.7M111.00 116.1V134.8M111.33 117.5V135.9M111.67 117.7V135.2M112.00 116.7V134.7M112.33 116.7V134.9M112.67 116.0V134.7M113.00 117.2V135.1M113.33 115.0V137.6M113.67 113.9V139.3M114.00 116.7V140.3M114.33 117.3V140.3M114.67 115.3V140.3M115.00 115.0V134.9M115.33 117.6V135.2M115.67 117.6V137.0M116.00 117.5V135.1M116.33 112.4V141.9M116.67 117.2V138.6M117.00 116.6V140.4M117.33 117.6V135.7M117.67 117.5V135.0M118.00 112.7V138.8M118.33 116.4V134.9M118.67 117.4V135.6M119.00 117.0V134.9M119.33 112.6V134.9M119.67 117.0V134.9M120.00 117.5V136.5M120.33 117.5V134.9M120.67 112.5V139.8M121.00 115.5V141.3M121.33 117.5V135.0M121.67 117.5V134.9M122.00 117.3V136.7M122.33 117.5V134.9M122.67 117.5V136.5M123.00 117.2V135.6M123.33 116.4V134.9M123.67 117.6V134.8M124.00 117.5V135.7M124.33 110.8V134.7M124.67 117.4V140.8M125.00 116.7V136.4M125.33 114.6V135.5M125.67 115.8V135.5M126.00 114.7V134.7M126.33 117.3V137.8M126.67 117.6V135.3M127.00 117.1V134.6M127.33 116.7V139.4M127.67 117.7V135.2M128.00 117.7V138.1M128.33 116.8V135.5M128.67 117.7V134.7M129.00 116.4V135.3M129.33 117.8V138.4M129.67 117.8V136.6M130.00 117.8V134.8M130.33 111.5V134.5M130.67 111.2V134.5M131.00 117.8V134.5M131.33 117.6V134.5M131.67 117.8V141.9M132.00 117.8V134.4M132.33 117.4V140.3M132.67 111.4V135.7M133.00 116.3V134.3M133.33 113.7V135.5M133.67 117.6V138.5M134.00 117.9V134.5M134.33 117.9V134.3M134.67 117.8V134.7M135.00 113.8V134.3M135.33 116.1V134.5M135.67 117.9V134.3M136.00 115.8V134.3M136.33 112.5V134.4M136.67 113.1V134.2M137.00 118.0V139.0M137.33 117.3V134.2M137.67 118.0V134.1M138.00 117.9V134.5M138.33 116.0V134.2M138.67 118.0V134.1M139.00 117.8V134.3M139.33 118.0V134.2M139.67 118.1V135.5M140.00 111.9V134.1M140.33 118.1V136.0M140.67 114.0V134.1M141.00 117.8V134.3M141.33 118.0V134.6M141.67 117.8V134.5M142.00 118.1V134.0M142.33 118.1V135.0M142.67 116.2V133.9M143.00 118.2V134.2M143.33 117.1V134.4M143.67 118.2V134.1M144.00 118.1V135.6M144.33 117.0V139.9M144.67 112.8V136.7M145.00 117.9V134.2M145.33 114.0V134.1M145.67 118.2V134.5M146.00 112.2V133.8M146.33 116.5V133.8M146.67 118.0V133.8M147.00 117.5V135.1M147.33 112.4V133.9M147.67 118.2V135.9M148.00 112.5V137.2M148.33 118.1V134.4M148.67 116.6V134.1M149.00 119.0V133.2M149.33 119.4V133.0M149.67 119.7V133.2M150.00 119.9V136.2M150.33 120.2V133.0M150.67 119.0V132.3M151.00 120.6V134.2M151.33 120.1V132.3M151.67 118.4V134.6M152.00 119.6V132.1M152.33 120.0V136.5M152.67 119.5V132.3M153.00 117.2V137.4M153.33 120.7V132.1M153.67 116.4V132.1M154.00 120.2V132.5M154.33 118.7V135.1M154.67 119.9V134.2M155.00 119.5V132.7M155.33 120.7V132.1M155.67 120.4V132.1M156.00 120.1V132.1M156.33 120.7V132.5M156.67 120.7V132.1M157.00 120.7V132.1M157.33 120.7V135.4M157.67 118.6V132.3M158.00 119.7V133.1M158.33 118.0V137.5M158.67 119.3V132.1M159.00 120.7V132.1M159.33 120.7V132.6M159.67 116.9V132.1M160.00 118.8V134.0M160.33 118.4V134.3M160.67 117.0V132.3M161.00 117.5V132.1M161.33 120.6V132.2M161.67 120.6V133.2M162.00 117.6V132.2M162.33 119.2V132.1M162.67 119.6V132.1M163.00 120.6V132.4M163.33 120.6V132.2M163.67 120.7V135.6M164.00 120.7V137.4M164.33 120.7V132.3M164.67 120.7V133.5M165.00 120.7V132.2M165.33 119.8V132.3M165.67 119.9V135.7M166.00 120.3V132.8M166.33 119.5V132.4M166.67 120.6V132.1M167.00 120.3V132.1M167.33 120.0V133.0M167.67 120.4V137.5M168.00 119.2V137.4M168.33 120.7V137.4M168.67 118.3V133.3M169.00 118.7V132.6M169.33 118.0V133.8M169.67 120.5V132.7M170.00 120.7V133.3M170.33 118.8V132.5M170.67 118.1V134.3M171.00 118.7V132.1M171.33 120.7V132.2M171.67 120.7V132.1M172.00 119.9V135.9M172.33 120.7V133.2M172.67 120.7V133.4M173.00 120.6V132.2M173.33 120.0V133.6M173.67 119.5V132.5M174.00 117.1V133.1M174.33 116.3V133.6M174.67 120.7V132.3M175.00 120.5V134.8M175.33 120.3V136.5M175.67 120.7V132.9M176.00 120.7V135.3M176.33 117.2V132.3M176.67 120.5V132.1M177.00 120.5V136.8M177.33 119.6V132.1M177.67 117.7V132.1M178.00 118.5V135.2M178.33 120.7V135.8M178.67 120.6V133.8M179.00 117.7V136.7M179.33 120.4V132.2M179.67 119.6V133.0M180.00 116.4V132.3M180.33 119.4V137.5M180.67 120.6V133.3M181.00 120.7V132.2M181.33 119.2V132.1M181.67 119.9V134.0M182.00 119.2V134.3M182.33 120.7V135.3M182.67 120.7V132.2M183.00 120.7V134.5M183.33 120.7V132.8M183.67 120.3V132.1M184.00 120.5V132.1M184.33 119.5V133.1M184.67 116.4V133.3M185.00 118.7V135.2M185.33 118.0V134.5M185.67 115.3V137.6M186.00 117.1V135.7M186.33 115.5V140.7M186.67 117.1V135.8M187.00 117.0V136.4M187.33 110.9V136.9M187.67 116.9V135.8M188.00 116.9V136.1M188.33 116.8V136.2M188.67 117.2V136.6M189.00 117.1V135.6M189.33 116.6V135.7M189.67 117.2V136.0M190.00 116.0V143.2M190.33 117.0V135.7M190.67 117.1V136.3M191.00 117.2V135.6M191.33 113.9V136.0M191.67 117.2V137.8M192.00 113.4V135.7M192.33 114.0V137.4M192.67 117.3V137.2M193.00 115.8V135.5M193.33 116.2V135.5M193.67 115.4V143.6M194.00 114.2V136.0M194.33 116.9V135.9M194.67 114.8V135.5M195.00 115.6V136.5M195.33 117.2V142.7M195.67 117.3V135.8M196.00 117.4V140.8M196.33 117.0V135.7M196.67 116.8V137.7M197.00 117.4V138.4M197.33 117.4V135.6M197.67 116.3V136.2M198.00 113.4V135.6M198.33 110.6V135.5M198.67 117.4V138.2M199.00 117.5V139.7M199.33 117.1V136.9M199.67 112.3V135.9M200.00 114.8V135.3M200.33 117.7V137.6M200.67 117.8V135.1M201.00 115.0V135.0M201.33 118.4V135.9M201.67 116.2V136.1M202.00 117.2V135.0M202.33 119.0V139.3M202.67 119.3V134.6M203.00 119.4V134.6M203.33 119.5V134.6M203.67 116.1V134.5M204.00 118.5V135.4M204.33 118.2V140.3M204.67 119.5V140.6M205.00 119.5V135.0M205.33 114.9V135.2M205.67 119.4V141.0M206.00 118.2V134.5M206.33 118.7V134.5M206.67 116.0V134.5M207.00 119.4V135.6M207.33 116.2V137.8M207.67 118.8V134.5M208.00 118.9V134.5M208.33 119.0V134.5M208.67 114.3V135.5M209.00 119.3V136.7M209.33 114.7V140.4M209.67 119.4V135.1M210.00 118.4V135.9M210.33 118.8V141.2M210.67 115.9V141.1M211.00 116.4V136.6M211.33 117.2V138.2M211.67 116.8V141.6M212.00 119.2V134.7M212.33 119.3V135.7M212.67 117.9V135.0M213.00 119.3V134.5M213.33 116.9V134.7M213.67 119.3V135.3M214.00 119.3V134.5M214.33 117.4V136.4M214.67 119.3V137.5M215.00 119.0V142.0M215.33 115.2V142.0M215.67 116.8V137.8M216.00 119.1V134.6M216.33 118.8V138.3M216.67 119.1V134.5M217.00 119.2V139.4M217.33 119.1V140.5M217.67 114.5V134.5M218.00 115.5V137.0M218.33 119.0V134.5M218.67 119.2V134.5M219.00 119.1V134.5M219.33 118.5V135.6M219.67 114.4V134.5M220.00 119.1V137.5M220.33 119.2V134.7M220.67 116.6V141.5M221.00 115.9V135.0M221.33 113.8V134.5M221.67 119.2V134.5M222.00 119.1V134.5M222.33 118.6V136.2M222.67 119.1V134.6M223.00 118.0V134.7M223.33 119.0V134.7M223.67 118.9V135.4M224.00 114.8V134.5M224.33 115.3V134.5M224.67 119.0V134.5M225.00 118.2V134.5M225.33 119.1V136.6M225.67 118.6V140.3M226.00 119.1V135.2M226.33 117.9V135.0M226.67 118.6V136.1M227.00 118.7V134.5M227.33 116.0V138.0M227.67 118.5V134.9M228.00 118.6V135.1M228.33 118.5V134.7M228.67 115.9V138.1M229.00 117.4V138.0M229.33 116.3V134.5M229.67 119.0V140.3M230.00 118.9V137.9M230.33 114.3V136.2M230.67 119.0V141.8M231.00 119.0V136.7M231.33 117.8V134.5M231.67 115.3V137.6M232.00 118.1V140.8M232.33 118.7V134.7M232.67 116.3V134.5M233.00 117.3V135.3M233.33 118.9V136.2M233.67 118.8V140.4M234.00 113.8V135.9M234.33 118.8V134.6M234.67 118.9V139.1M235.00 116.8V134.6M235.33 118.9V134.7M235.67 118.7V135.3M236.00 118.6V134.8M236.33 113.6V134.5M236.67 116.5V135.5M237.00 114.6V134.6M237.33 118.2V134.5M237.67 118.8V135.5M238.00 116.9V134.6M238.33 117.0V135.0M238.67 118.4V141.1M239.00 118.8V134.6M239.33 118.8V134.9M239.67 118.6V136.2M240.00 118.8V136.8M240.33 118.4V134.5M240.67 118.4V134.5M241.00 118.3V135.7M241.33 118.8V134.6M241.67 118.2V134.8M242.00 118.7V137.9M242.33 118.6V134.9M242.67 117.6V134.8M243.00 118.4V135.1M243.33 118.5V139.8M243.67 118.5V136.4M244.00 116.7V141.0M244.33 118.4V136.2M244.67 118.0V141.7M245.00 118.7V134.9M245.33 117.6V134.5M245.67 118.7V140.1M246.00 115.6V138.6M246.33 116.8V137.5M246.67 118.7V136.8M247.00 112.8V134.5M247.33 116.7V140.9M247.67 118.0V135.1M248.00 114.5V136.3M248.33 118.4V134.5M248.67 118.0V141.9M249.00 118.5V137.4M249.33 117.0V136.6M249.67 118.6V134.7M250.00 118.5V136.2M250.33 114.8V140.5M250.67 118.7V134.5M251.00 118.6V135.1M251.33 115.6V139.0M251.67 116.9V134.6M252.00 118.2V134.6M252.33 117.8V135.8M252.67 118.6V135.9M253.00 118.5V134.9M253.33 114.0V136.4M253.67 116.8V134.5M254.00 118.6V134.7M254.33 118.6V136.6M254.67 117.9V135.6M255.00 118.5V141.7M255.33 118.6V134.4M255.67 118.6V134.5M256.00 118.5V134.9M256.33 118.5V134.6M256.67 118.6V134.4M257.00 118.6V134.4M257.33 118.0V134.5M257.67 117.4V136.2M258.00 118.3V134.7M258.33 117.9V135.2M258.67 118.6V134.4M259.00 115.8V135.8M259.33 114.7V138.5M259.67 116.4V134.9M260.00 114.6V141.8M260.33 118.6V134.4M260.67 118.0V134.5M261.00 112.5V134.4M261.33 118.6V134.7M261.67 117.7V140.5M262.00 117.6V135.5M262.33 114.2V136.3M262.67 117.8V134.5M263.00 118.6V134.4M263.33 118.6V137.3M263.67 117.7V134.4M264.00 115.5V136.8M264.33 118.6V137.8M264.67 118.6V134.4M265.00 118.4V134.4M265.33 117.3V135.7M265.67 117.7V134.6M266.00 116.6V134.4M266.33 118.5V134.4M266.67 118.5V134.4M267.00 115.0V136.5M267.33 117.3V134.6M267.67 118.5V135.0M268.00 118.5V134.3M268.33 118.4V134.3M268.67 118.5V135.0M269.00 117.7V134.4M269.33 118.5V138.8M269.67 118.1V138.5M270.00 116.1V136.7M270.33 118.5V134.3M270.67 114.5V134.6M271.00 114.9V135.6M271.33 118.5V134.4M271.67 118.5V135.9M272.00 117.8V134.5M272.33 117.9V134.6M272.67 117.3V134.3M273.00 114.3V135.4M273.33 113.3V134.3M273.67 118.3V136.5M274.00 118.4V134.4M274.33 116.6V140.0M274.67 114.8V137.2M275.00 116.2V138.8M275.33 112.9V139.4M275.67 112.1V138.3M276.00 118.5V134.6M276.33 115.8V134.3M276.67 118.3V135.6M277.00 114.7V141.4M277.33 116.7V134.3M277.67 117.6V134.4M278.00 118.5V134.4M278.33 117.1V134.2M278.67 117.9V136.6M279.00 118.1V134.4M279.33 116.2V134.7M279.67 115.7V140.9M280.00 118.4V134.2M280.33 116.3V135.3M280.67 118.4V134.2M281.00 115.1V136.2M281.33 118.2V134.2M281.67 118.4V134.2M282.00 117.7V134.2M282.33 118.3V134.2M282.67 114.2V135.1M283.00 116.8V141.0M283.33 117.1V134.7M283.67 118.3V135.5M284.00 118.4V134.2M284.33 112.1V137.5M284.67 117.8V137.7M285.00 117.9V134.5M285.33 111.9V134.2M285.67 116.7V134.2M286.00 117.3V137.1M286.33 118.2V139.1M286.67 114.1V134.8M287.00 114.1V136.9M287.33 118.3V134.6M287.67 113.2V134.3M288.00 118.4V134.2M288.33 113.9V137.4M288.67 117.3V134.7M289.00 118.3V135.7M289.33 112.9V135.5M289.67 113.8V137.5M290.00 118.3V135.0M290.33 118.3V135.1M290.67 116.0V137.0M291.00 116.5V136.6M291.33 118.3V134.1M291.67 116.9V134.3M292.00 112.4V135.4M292.33 117.3V135.5M292.67 114.2V140.8M293.00 118.1V134.4M293.33 118.2V134.3M293.67 116.7V138.2M294.00 118.3V134.2M294.33 113.4V134.2M294.67 118.3V135.6M295.00 118.3V136.9M295.33 118.1V134.6M295.67 118.0V134.2M296.00 116.9V137.5M296.33 118.3V134.1M296.67 118.2V134.6M297.00 118.1V134.5M297.33 117.9V139.6M297.67 118.0V137.6M298.00 118.0V134.1M298.33 111.2V135.2M298.67 113.1V137.3M299.00 112.8V139.3M299.33 105.6V142.7M299.67 106.1V143.5M300.00 101.6V147.5M300.33 98.9V160.5M300.67 97.9V164.4M301.00 88.9V153.2M301.33 96.4V149.6M301.67 93.4V149.2M302.00 97.1V151.9M302.33 88.2V149.2M302.67 80.4V148.2M303.00 83.9V147.9M303.33 101.2V160.9M303.67 101.8V147.5M304.00 95.8V154.4M304.33 101.3V146.8M304.67 97.2V146.2M305.00 103.6V146.1M305.33 104.0V145.9M305.67 104.5V144.9M306.00 104.9V146.8M306.33 105.4V143.8M306.67 105.8V148.5M307.00 106.3V143.3M307.33 106.5V143.5M307.67 100.1V142.3M308.00 105.1V154.2M308.33 93.4V141.4M308.67 108.4V141.8M309.00 109.0V149.7M309.33 109.5V140.3M309.67 98.9V141.8M310.00 110.4V143.4M310.33 110.9V139.0M310.67 110.9V140.1M311.00 108.8V138.4M311.33 111.9V138.1M311.67 112.2V138.0M312.00 105.0V138.2M312.33 112.5V137.8M312.67 111.8V138.0M313.00 107.9V143.3M313.33 110.3V138.3M313.67 112.1V142.7M314.00 109.5V139.3M314.33 113.6V138.1M314.67 113.7V138.6M315.00 113.1V140.6M315.33 114.1V137.1M315.67 110.2V137.1M316.00 111.2V136.9M316.33 114.6V137.6M316.67 108.6V144.5M317.00 114.9V139.1M317.33 114.8V137.3M317.67 108.0V144.0M318.00 115.5V136.5M318.33 114.2V136.6M318.67 115.9V136.3M319.00 111.4V136.2M319.33 112.6V142.4M319.67 109.1V144.3M320.00 113.7V139.5M320.33 115.9V138.0M320.67 116.9V143.8M321.00 110.5V143.1M321.33 112.9V140.1M321.67 114.6V140.3M322.00 117.2V138.5M322.33 110.0V136.1M322.67 115.2V135.8M323.00 112.2V138.3M323.33 117.3V136.0M323.67 117.4V135.4M324.00 117.4V135.4M324.33 112.1V137.5M324.67 116.2V138.2M325.00 117.4V135.3M325.33 115.7V141.3M325.67 114.2V142.5M326.00 117.2V135.2M326.33 113.4V136.6M326.67 114.0V136.7M327.00 113.7V138.4M327.33 113.0V135.4M327.67 117.6V143.0M328.00 115.9V135.0M328.33 117.9V136.3M328.67 117.8V142.4M329.00 117.9V134.9M329.33 117.9V135.5M329.67 117.3V134.8M330.00 114.7V137.9M330.33 114.0V137.5M330.67 115.7V139.0M331.00 118.1V135.7M331.33 118.2V141.6M331.67 112.0V134.9M332.00 118.2V134.6M332.33 118.2V136.4M332.67 114.0V140.3M333.00 118.4V135.6M333.33 113.0V134.4M333.67 118.4V137.7M334.00 115.3V135.0M334.33 116.7V134.3M334.67 116.9V134.3M335.00 118.5V137.2M335.33 118.0V134.3M335.67 118.5V137.1M336.00 118.7V140.6M336.33 117.8V134.1M336.67 117.7V135.4M337.00 118.8V134.0M337.33 118.3V134.3M337.67 118.8V137.7M338.00 118.9V135.2M338.33 117.2V133.9M338.67 117.0V133.9M339.00 114.6V139.2M339.33 118.9V138.8M339.67 119.1V138.2M340.00 119.0V133.7M340.33 117.8V133.7M340.67 118.8V136.9M341.00 119.1V133.9M341.33 118.4V134.4M341.67 117.5V133.6M342.00 119.0V134.4M342.33 118.8V133.5M342.67 115.8V137.9M343.00 119.1V135.7M343.33 119.1V133.5M343.67 118.1V134.0M344.00 119.1V133.4M344.33 116.4V136.9M344.67 119.1V134.0M345.00 117.6V136.6M345.33 116.0V136.8M345.67 119.0V133.3M346.00 113.5V133.4M346.33 113.9V135.8M346.67 116.8V135.9M347.00 102.8V137.8M347.33 108.1V140.2M347.67 94.3V146.8M348.00 99.3V151.4M348.33 98.6V144.0M348.67 100.7V152.1M349.00 98.8V143.6M349.33 99.1V146.7M349.67 102.8V143.9M350.00 100.6V143.0M350.33 103.5V154.4M350.67 105.0V142.4M351.00 105.7V142.2M351.33 103.1V152.4M351.67 103.6V141.8M352.00 96.9V145.0M352.33 93.7V143.2M352.67 107.4V140.8M353.00 107.9V140.6M353.33 102.8V140.4M353.67 101.2V146.8M354.00 97.8V142.1M354.33 109.1V141.2M354.67 101.7V143.0M355.00 109.9V139.6M355.33 109.4V140.7M355.67 109.4V139.8M356.00 110.7V145.4M356.33 109.8V139.1M356.67 106.4V137.9M357.00 111.8V137.9M357.33 111.9V140.0M357.67 111.2V139.5M358.00 109.1V137.6M358.33 101.8V139.3M358.67 112.4V137.7M359.00 109.0V137.3M359.33 111.8V147.1M359.67 112.9V137.0M360.00 111.0V141.1M360.33 111.3V138.8M360.67 111.9V136.7M361.00 112.9V145.3M361.33 112.6V136.8M361.67 113.7V139.3M362.00 103.6V136.3M362.33 104.5V142.9M362.67 113.5V136.1M363.00 108.1V136.0M363.33 113.2V139.9M363.67 106.2V137.3M364.00 108.8V135.7M364.33 114.6V135.7M364.67 114.4V137.0M365.00 114.3V139.4M365.33 106.5V136.5M365.67 112.3V135.8M366.00 109.8V135.4M366.33 115.0V136.4M366.67 114.3V142.1M367.00 107.0V135.1M367.33 115.5V135.0M367.67 110.9V134.9M368.00 115.8V135.0M368.33 114.1V139.4M368.67 113.9V134.7M369.00 116.1V140.6M369.33 115.5V138.2M369.67 116.3V134.5M370.00 114.2V134.4M370.33 113.6V141.8M370.67 116.1V135.0M371.00 115.0V134.2M371.33 115.9V134.1M371.67 116.5V134.0M372.00 115.6V134.4M372.33 113.0V137.0M372.67 117.2V133.8M373.00 116.3V133.8M373.33 113.8V139.4M373.67 116.9V133.9M374.00 112.2V135.3M374.33 117.5V133.7M374.67 117.3V134.0M375.00 117.8V133.6M375.33 117.7V134.9M375.67 117.4V133.1M376.00 118.3V138.2M376.33 118.5V134.1M376.67 118.7V132.7M377.00 118.7V132.6M377.33 119.0V134.9M377.67 116.8V134.7M378.00 116.8V133.3M378.33 119.5V132.2M378.67 119.3V133.2M379.00 119.6V135.0M379.33 115.2V134.6M379.67 119.5V131.8M380.00 120.3V132.6M380.33 119.7V132.2M380.67 115.9V132.9M381.00 118.8V134.6M381.33 115.8V136.1M381.67 117.9V136.1M382.00 117.6V135.9M382.33 118.0V134.9M382.67 118.0V140.3M383.00 118.0V134.7M383.33 118.0V140.9M383.67 114.6V134.6M384.00 118.0V135.2M384.33 116.7V134.4M384.67 117.4V135.5M385.00 113.2V136.7M385.33 118.4V134.3M385.67 113.0V136.1M386.00 118.1V134.1M386.33 115.0V134.9M386.67 118.2V134.1M387.00 118.7V133.9M387.33 116.6V134.1M387.67 117.4V133.8M388.00 115.5V133.7M388.33 118.9V135.9M388.67 118.8V133.7M389.00 118.8V133.5M389.33 117.3V133.8M389.67 117.4V137.0M390.00 118.9V134.3M390.33 119.1V134.5M390.67 119.3V133.5M391.00 118.2V133.1M391.33 118.4V133.3M391.67 119.4V133.1M392.00 119.5V133.6M392.33 119.6V132.9M392.67 118.2V134.3M393.00 119.7V132.7M393.33 119.8V132.5M393.67 119.9V132.5M394.00 119.9V132.9M394.33 119.5V132.9M394.67 117.5V132.4M395.00 119.9V132.8M395.33 116.3V136.4M395.67 118.6V132.9M396.00 119.3V132.2M396.33 120.3V131.8M396.67 120.4V133.9M397.00 120.4V131.6M397.33 116.6V134.7M397.67 120.1V132.7M398.00 119.9V131.6M398.33 119.8V131.3M398.67 120.4V131.2M399.00 120.9V131.5M399.33 119.6V132.9M399.67 120.9V132.6M400.00 121.1V131.4M400.33 120.6V132.2M400.67 117.6V131.9M401.00 120.6V131.2M401.33 120.3V131.3M401.67 119.6V131.4M402.00 120.1V131.8M402.33 120.4V131.6M402.67 119.2V131.7M403.00 119.9V135.8M403.33 118.3V133.7M403.67 118.3V133.9M404.00 118.1V132.1M404.33 118.8V132.1M404.67 119.8V132.1M405.00 118.8V132.2M405.33 116.9V133.9M405.67 119.7V132.3M406.00 119.7V132.3M406.33 119.6V132.3M406.67 115.7V133.2M407.00 118.4V135.5M407.33 114.5V132.9M407.67 117.1V133.4M408.00 115.7V136.3M408.33 118.5V133.7M408.67 117.6V134.9M409.00 119.0V132.7M409.33 117.4V133.4M409.67 116.8V135.0M410.00 119.2V132.8M410.33 116.3V132.8M410.67 119.2V132.8M411.00 118.4V132.9M411.33 119.0V133.0M411.67 118.9V133.9M412.00 118.0V133.1M412.33 118.0V135.2M412.67 114.6V139.2M413.00 118.8V134.4M413.33 118.8V134.6M413.67 115.9V133.9M414.00 118.8V133.2M414.33 118.7V139.4M414.67 118.3V139.2M415.00 117.3V133.3M415.33 117.0V133.4M415.67 115.8V138.9M416.00 118.5V136.3M416.33 117.2V134.4M416.67 118.5V133.9M417.00 118.4V136.2M417.33 113.5V133.6M417.67 118.1V133.8M418.00 118.1V134.9M418.33 118.0V133.9M418.67 118.3V134.1M419.00 118.3V133.7M419.33 118.3V134.8M419.67 118.3V137.5M420.00 118.2V135.1M420.33 118.3V134.0M420.67 112.6V133.7M421.00 116.9V133.7M421.33 118.3V133.7M421.67 115.2V137.7M422.00 117.2V135.0M422.33 118.3V133.7M422.67 117.3V133.7M423.00 118.3V139.9M423.33 118.1V133.9M423.67 118.3V133.7M424.00 118.3V139.0M424.33 115.3V133.9M424.67 118.1V136.1M425.00 118.0V133.7M425.33 117.7V137.0M425.67 116.2V135.6M426.00 113.4V134.8M426.33 117.6V139.3M426.67 117.7V133.8M427.00 118.3V133.7M427.33 116.6V134.2M427.67 112.3V133.7M428.00 117.1V134.3M428.33 114.2V134.1M428.67 115.2V140.6M429.00 118.3V137.2M429.33 117.8V138.3M429.67 113.9V139.0M430.00 118.2V135.0M430.33 118.2V138.6M430.67 118.3V135.1M431.00 116.2V133.8M431.33 118.3V134.7M431.67 118.3V135.6M432.00 117.7V140.2M432.33 115.2V133.7M432.67 116.1V133.9M433.00 118.3V133.7M433.33 118.3V133.7M433.67 117.4V135.3M434.00 117.3V136.0M434.33 118.2V134.0M434.67 118.3V135.2M435.00 113.4V133.7M435.33 114.6V134.9M435.67 112.7V133.7M436.00 117.4V133.7M436.33 118.0V138.6M436.67 117.0V134.0M437.00 117.4V135.6M437.33 117.1V134.5M437.67 115.0V140.5M438.00 116.5V137.4M438.33 116.2V135.3M438.67 111.7V135.6M439.00 115.2V137.9M439.33 115.2V135.5M439.67 113.6V135.5M440.00 114.6V140.4M440.33 115.1V135.5M440.67 110.7V139.7M441.00 115.9V135.2M441.33 116.1V134.8M441.67 116.5V134.6M442.00 116.7V134.4M442.33 115.3V136.7M442.67 111.8V135.4M443.00 117.5V134.3M443.33 115.1V133.7M443.67 118.3V133.7M444.00 116.0V135.3M444.33 118.2V136.5M444.67 117.6V138.9M445.00 114.6V133.7M445.33 118.3V134.0M445.67 115.1V134.2M446.00 115.7V133.8M446.33 117.3V133.7M446.67 116.0V134.0M447.00 115.9V133.7" stroke="#0000ff" stroke-width="0.7" fill="none"/><path d="M30.00 120.6V130.1M30.33 122.3V130.2M30.67 122.3V129.8M31.00 121.4V129.6M31.33 121.5V130.4M31.67 121.8V129.7M32.00 122.4V130.1M32.33 121.8V130.5M32.67 121.9V129.8M33.00 120.9V130.7M33.33 122.2V129.7M33.67 120.9V129.9M34.00 122.4V129.7M34.33 120.4V130.0M34.67 121.1V129.8M35.00 120.5V130.8M35.33 122.3V129.7M35.67 121.7V130.0M36.00 122.3V130.5M36.33 122.3V129.8M36.67 122.2V131.2M37.00 120.9V130.5M37.33 122.3V129.8M37.67 122.2V129.7M38.00 122.2V130.4M38.33 120.5V130.1M38.67 122.3V129.7M39.00 122.2V129.7M39.33 122.3V131.5M39.67 122.0V129.7M40.00 122.2V130.6M40.33 121.6V129.8M40.67 122.3V129.7M41.00 121.6V129.8M41.33 122.4V129.8M41.67 122.3V129.9M42.00 122.1V131.2M42.33 121.4V130.3M42.67 122.4V131.3M43.00 122.4V130.5M43.33 122.2V131.7M43.67 121.3V131.3M44.00 121.1V131.3M44.33 120.7V131.2M44.67 120.8V130.3M45.00 121.7V130.4M45.33 120.4V131.2M45.67 121.3V130.3M46.00 122.3V130.8M46.33 121.9V129.8M46.67 121.6V131.4M47.00 122.2V130.6M47.33 120.7V130.5M47.67 122.1V130.5M48.00 121.0V131.3M48.33 121.7V129.8M48.67 120.9V131.1M49.00 122.2V129.7M49.33 122.3V130.0M49.67 122.2V131.1M50.00 122.3V129.6M50.33 121.3V130.3M50.67 122.4V129.7M51.00 121.0V129.8M51.33 121.6V130.0M51.67 121.0V131.5M52.00 121.9V129.7M52.33 121.3V129.7M52.67 121.4V130.2M53.00 122.0V130.9M53.33 120.6V130.7M53.67 121.6V131.3M54.00 120.8V130.9M54.33 121.5V129.7M54.67 121.5V130.7M55.00 120.4V131.6M55.33 122.1V131.3M55.67 122.3V130.0M56.00 121.9V129.6M56.33 121.1V129.7M56.67 122.3V129.7M57.00 120.9V130.6M57.33 120.5V129.7M57.67 122.2V130.7M58.00 120.9V130.3M58.33 120.9V131.3M58.67 120.5V130.2M59.00 121.8V130.2M59.33 120.5V130.2M59.67 121.7V130.1M60.00 121.8V130.0M60.33 122.2V130.1M60.67 121.0V131.3M61.00 122.3V130.4M61.33 121.1V129.6M61.67 121.4V129.9M62.00 122.3V130.7M62.33 122.2V129.7M62.67 122.1V130.0M63.00 122.3V130.4M63.33 120.9V130.4M63.67 121.2V131.0M64.00 122.2V131.4M64.33 120.8V129.7M64.67 122.2V129.7M65.00 121.1V129.7M65.33 122.4V129.7M65.67 120.5V129.7M66.00 121.8V130.6M66.33 122.3V129.6M66.67 121.7V129.7M67.00 120.9V131.6M67.33 122.1V132.0M67.67 121.6V130.8M68.00 120.6V130.6M68.33 121.2V131.5M68.67 120.9V131.4M69.00 118.4V133.6M69.33 119.5V132.1M69.67 117.9V133.7M70.00 119.1V133.5M70.33 118.3V134.1M70.67 119.0V132.1M71.00 120.4V132.3M71.33 119.5V132.8M71.67 119.4V132.0M72.00 119.9V132.1M72.33 119.3V133.4M72.67 119.6V133.3M73.00 120.7V131.7M73.33 120.5V134.2M73.67 117.9V132.6M74.00 118.8V131.6M74.33 120.7V134.3M74.67 120.6V132.4M75.00 118.1V132.2M75.33 120.3V131.9M75.67 120.5V133.2M76.00 120.5V131.6M76.33 120.3V134.2M76.67 117.8V134.4M77.00 120.2V132.3M77.33 119.9V134.4M77.67 117.9V133.7M78.00 119.6V132.3M78.33 119.9V131.7M78.67 120.1V131.8M79.00 118.9V132.5M79.33 119.1V131.8M79.67 118.9V132.9M80.00 119.3V132.6M80.33 119.0V131.7M80.67 118.2V134.0M81.00 120.5V132.2M81.33 119.8V131.6M81.67 119.8V132.9M82.00 120.6V132.0M82.33 120.7V131.7M82.67 119.0V131.8M83.00 118.8V132.1M83.33 120.4V132.6M83.67 120.2V132.1M84.00 120.7V131.7M84.33 119.3V131.9M84.67 120.6V133.0M85.00 119.2V133.1M85.33 120.3V133.3M85.67 119.2V132.6M86.00 118.2V132.2M86.33 120.4V132.1M86.67 120.5V132.0M87.00 120.2V132.1M87.33 118.8V132.5M87.67 120.6V133.4M88.00 120.7V132.5M88.33 118.0V133.0M88.67 119.8V133.6M89.00 119.1V134.2M89.33 120.6V133.4M89.67 120.6V133.5M90.00 120.2V132.0M90.33 120.0V132.5M90.67 118.2V132.2M91.00 118.6V133.7M91.33 118.0V132.9M91.67 118.8V132.2M92.00 119.1V134.7M92.33 120.6V132.2M92.67 120.7V131.9M93.00 118.9V131.7M93.33 119.7V134.2M93.67 120.6V131.8M94.00 119.7V131.8M94.33 120.6V133.4M94.67 118.7V132.3M95.00 118.2V132.0M95.33 120.0V131.8M95.67 118.8V132.1M96.00 120.5V134.7M96.33 120.7V132.3M96.67 119.2V132.8M97.00 120.4V131.8M97.33 119.5V134.7M97.67 120.6V133.5M98.00 118.6V133.7M98.33 119.2V131.7M98.67 118.0V132.7M99.00 118.9V132.2M99.33 118.7V131.8M99.67 120.6V133.8M100.00 120.7V131.9M100.33 120.3V133.1M100.67 120.1V134.6M101.00 120.7V132.1M101.33 119.8V132.3M101.67 118.8V131.8M102.00 120.3V132.5M102.33 120.2V133.0M102.67 119.1V132.0M103.00 119.2V132.0M103.33 120.6V131.7M103.67 120.6V132.1M104.00 120.7V131.8M104.33 120.0V131.9M104.67 119.4V133.5M105.00 119.5V132.7M105.33 119.3V134.3M105.67 118.0V134.1M106.00 118.9V134.6M106.33 118.4V135.4M106.67 119.3V135.2M107.00 118.9V133.9M107.33 115.7V134.0M107.67 119.2V136.5M108.00 119.3V133.2M108.33 118.9V136.4M108.67 119.3V136.7M109.00 118.2V134.3M109.33 116.2V136.9M109.67 119.2V135.7M110.00 119.1V134.3M110.33 118.2V133.1M110.67 115.6V136.5M111.00 117.6V135.2M111.33 116.8V133.1M111.67 119.2V133.7M112.00 118.2V133.4M112.33 117.7V133.1M112.67 115.8V134.5M113.00 117.7V135.0M113.33 118.3V137.0M113.67 118.6V133.9M114.00 118.1V134.2M114.33 118.8V133.2M114.67 117.1V134.6M115.00 117.8V133.2M115.33 118.2V133.8M115.67 118.1V133.4M116.00 118.9V133.2M116.33 117.4V136.2M116.67 118.9V135.4M117.00 119.1V135.7M117.33 115.6V133.2M117.67 118.7V133.2M118.00 118.5V133.8M118.33 119.1V136.5M118.67 115.7V137.1M119.00 118.7V136.7M119.33 116.4V133.8M119.67 116.1V137.3M120.00 118.9V136.4M120.33 117.0V133.7M120.67 117.1V133.3M121.00 118.3V133.3M121.33 117.1V133.4M121.67 117.4V135.7M122.00 116.1V134.6M122.33 115.8V135.0M122.67 119.1V137.1M123.00 118.0V133.2M123.33 118.9V135.7M123.67 117.0V133.4M124.00 119.0V136.3M124.33 118.3V135.4M124.67 118.2V133.2M125.00 118.7V134.8M125.33 118.2V135.9M125.67 115.7V133.2M126.00 117.8V133.3M126.33 116.9V135.5M126.67 119.0V134.4M127.00 117.9V135.0M127.33 119.1V133.1M127.67 118.5V133.8M128.00 119.2V136.2M128.33 116.9V133.2M128.67 119.2V133.4M129.00 119.0V134.3M129.33 119.2V133.2M129.67 116.7V135.3M130.00 118.8V133.1M130.33 118.4V135.1M130.67 118.5V135.0M131.00 116.4V133.0M131.33 118.6V132.9M131.67 117.2V134.9M132.00 118.2V133.1M132.33 118.8V133.3M132.67 119.3V133.5M133.00 118.9V134.7M133.33 116.5V133.6M133.67 118.8V135.1M134.00 119.3V133.9M134.33 119.2V133.6M134.67 115.8V134.5M135.00 118.9V132.8M135.33 119.1V132.7M135.67 118.9V135.9M136.00 118.9V132.8M136.33 117.3V134.7M136.67 119.1V133.2M137.00 119.1V134.9M137.33 118.9V132.9M137.67 118.2V132.7M138.00 118.4V132.7M138.33 117.6V134.3M138.67 119.2V134.5M139.00 116.8V132.8M139.33 119.3V132.6M139.67 118.4V135.0M140.00 117.9V135.7M140.33 117.9V135.9M140.67 118.1V132.6M141.00 119.5V133.1M141.33 119.3V132.6M141.67 119.5V134.1M142.00 119.1V133.2M142.33 117.8V133.6M142.67 119.0V133.0M143.00 119.6V133.4M143.33 119.2V132.7M143.67 116.8V133.6M144.00 119.5V133.2M144.33 119.2V133.6M144.67 118.2V133.8M145.00 119.4V134.8M145.33 116.7V132.4M145.67 119.3V132.8M146.00 119.5V132.5M146.33 119.7V133.4M146.67 118.8V133.8M147.00 118.6V134.8M147.33 119.3V135.1M147.67 118.0V134.0M148.00 119.6V133.6M148.33 119.5V132.4M148.67 120.0V132.2M149.00 119.5V131.9M149.33 120.6V133.3M149.67 119.1V132.3M150.00 118.9V131.4M150.33 119.6V131.7M150.67 120.2V131.4M151.00 120.0V132.9M151.33 120.5V132.0M151.67 121.7V131.4M152.00 121.6V131.0M152.33 119.4V131.0M152.67 120.7V131.4M153.00 121.7V132.4M153.33 121.5V132.4M153.67 121.4V131.0M154.00 121.4V131.2M154.33 121.5V131.4M154.67 119.4V131.4M155.00 120.2V131.0M155.33 119.6V131.1M155.67 121.4V131.0M156.00 120.8V131.2M156.33 121.4V131.2M156.67 119.8V131.2M157.00 121.1V133.7M157.33 121.1V131.4M157.67 121.7V131.8M158.00 121.5V133.4M158.33 121.2V132.9M158.67 121.7V131.0M159.00 121.4V132.5M159.33 121.7V131.1M159.67 121.0V132.8M160.00 121.3V132.7M160.33 119.4V131.0M160.67 120.5V131.1M161.00 120.9V131.1M161.33 120.7V132.8M161.67 121.4V131.2M162.00 121.7V131.3M162.33 120.4V131.8M162.67 121.7V131.0M163.00 121.7V131.7M163.33 121.0V133.5M163.67 121.4V132.5M164.00 121.3V133.5M164.33 120.5V131.1M164.67 119.5V131.3M165.00 119.4V131.0M165.33 120.7V131.1M165.67 119.9V132.1M166.00 121.7V132.9M166.33 120.6V131.5M166.67 120.8V131.9M167.00 120.8V131.5M167.33 119.6V131.0M167.67 120.4V131.2M168.00 121.3V133.0M168.33 121.1V131.1M168.67 119.6V132.9M169.00 119.3V131.0M169.33 121.5V132.8M169.67 119.9V131.1M170.00 121.7V131.8M170.33 121.6V132.7M170.67 121.0V133.2M171.00 121.4V131.0M171.33 119.9V132.9M171.67 121.3V133.0M172.00 121.7V133.7M172.33 119.9V132.4M172.67 121.3V131.0M173.00 120.7V131.2M173.33 121.6V131.0M173.67 121.7V131.0M174.00 121.4V131.1M174.33 120.4V131.3M174.67 121.6V132.1M175.00 121.3V131.5M175.33 121.4V132.3M175.67 121.5V133.1M176.00 120.6V131.5M176.33 120.4V132.0M176.67 121.3V131.2M177.00 121.5V132.3M177.33 121.3V131.0M177.67 121.3V131.3M178.00 120.9V131.8M178.33 121.7V131.3M178.67 120.6V131.3M179.00 121.7V132.1M179.33 121.2V131.2M179.67 119.4V133.6M180.00 120.1V132.1M180.33 121.7V131.6M180.67 121.6V133.7M181.00 121.6V131.4M181.33 121.6V132.1M181.67 121.5V132.8M182.00 121.7V131.6M182.33 119.6V133.2M182.67 121.0V131.8M183.00 121.5V131.7M183.33 121.7V131.0M183.67 120.2V131.1M184.00 121.6V131.5M184.33 119.3V131.5M184.67 117.9V132.9M185.00 117.8V135.8M185.33 119.6V135.5M185.67 119.1V134.6M186.00 118.3V138.1M186.33 118.7V134.7M186.67 118.7V137.7M187.00 117.0V137.4M187.33 117.7V137.5M187.67 116.6V134.2M188.00 117.8V134.5M188.33 118.8V137.0M188.67 117.6V134.6M189.00 118.2V134.3M189.33 116.5V134.9M189.67 115.1V133.9M190.00 118.3V135.4M190.33 117.3V135.4M190.67 117.8V136.3M191.00 118.6V134.1M191.33 115.9V134.5M191.67 118.8V138.0M192.00 118.5V136.7M192.33 118.9V136.3M192.67 117.7V137.5M193.00 115.4V136.2M193.33 116.7V134.5M193.67 115.6V133.8M194.00 116.7V134.4M194.33 118.9V134.2M194.67 118.9V136.7M195.00 118.9V133.8M195.33 117.7V137.4M195.67 117.8V136.7M196.00 118.1V133.7M196.33 117.2V137.4M196.67 118.4V136.3M197.00 118.9V135.2M197.33 118.9V134.2M197.67 118.4V135.1M198.00 117.7V134.6M198.33 117.1V133.9M198.67 117.7V133.9M199.00 118.5V135.8M199.33 117.8V137.7M199.67 118.1V133.9M200.00 118.7V136.7M200.33 118.0V134.8M200.67 116.1V135.9M201.00 117.4V133.6M201.33 118.5V133.4M201.67 117.3V136.7M202.00 117.2V135.2M202.33 118.7V133.4M202.67 119.6V133.3M203.00 120.6V133.9M203.33 120.5V134.0M203.67 118.5V135.8M204.00 119.1V134.1M204.33 118.9V133.2M204.67 120.3V135.4M205.00 120.3V135.0M205.33 119.7V133.4M205.67 120.6V136.4M206.00 118.2V133.0M206.33 117.7V133.3M206.67 119.3V133.0M207.00 117.8V134.8M207.33 119.8V133.0M207.67 119.8V133.4M208.00 119.1V133.6M208.33 119.9V134.2M208.67 120.6V133.3M209.00 118.0V136.6M209.33 118.4V136.3M209.67 119.5V134.8M210.00 118.0V133.0M210.33 120.6V133.0M210.67 120.6V133.0M211.00 119.8V134.3M211.33 120.6V133.0M211.67 118.5V133.6M212.00 120.6V135.2M212.33 119.7V133.4M212.67 120.4V136.0M213.00 120.3V133.8M213.33 120.4V134.6M213.67 120.3V135.9M214.00 120.3V133.4M214.33 118.6V134.1M214.67 120.3V133.1M215.00 120.1V133.4M215.33 120.0V133.0M215.67 120.2V135.4M216.00 119.4V135.1M216.33 120.5V133.9M216.67 117.9V133.0M217.00 117.7V136.3M217.33 120.4V134.9M217.67 120.4V134.7M218.00 117.7V133.8M218.33 120.2V136.4M218.67 120.1V133.0M219.00 120.4V134.0M219.33 118.6V134.0M219.67 120.3V133.0M220.00 117.8V133.9M220.33 119.4V133.3M220.67 119.8V134.4M221.00 120.3V136.4M221.33 118.6V133.6M221.67 120.3V135.1M222.00 120.3V135.4M222.33 119.7V133.1M222.67 120.4V133.2M223.00 119.7V134.5M223.33 117.9V134.3M223.67 119.7V133.4M224.00 117.6V135.8M224.33 119.6V136.7M224.67 118.7V133.2M225.00 117.5V133.3M225.33 120.0V134.2M225.67 119.5V133.5M226.00 120.1V134.2M226.33 120.3V133.9M226.67 117.4V133.3M227.00 118.3V133.2M227.33 120.1V136.1M227.67 119.3V136.4M228.00 120.0V135.7M228.33 120.2V133.1M228.67 117.3V136.2M229.00 118.7V135.5M229.33 118.2V133.3M229.67 120.3V134.0M230.00 119.1V136.2M230.33 120.3V134.7M230.67 117.8V133.3M231.00 118.4V136.7M231.33 118.6V133.0M231.67 118.3V135.9M232.00 118.9V133.9M232.33 120.2V133.1M232.67 118.9V135.3M233.00 119.9V133.2M233.33 118.7V136.4M233.67 117.5V133.3M234.00 117.2V135.3M234.33 119.3V133.9M234.67 119.3V133.8M235.00 120.1V134.3M235.33 120.2V133.0M235.67 117.3V134.5M236.00 120.0V133.8M236.33 119.6V134.8M236.67 118.8V136.4M237.00 119.2V136.8M237.33 118.3V133.0M237.67 119.9V135.0M238.00 118.2V134.6M238.33 119.5V133.0M238.67 117.6V133.0M239.00 118.6V133.7M239.33 119.1V135.1M239.67 118.6V134.4M240.00 120.1V133.0M240.33 120.1V133.5M240.67 117.1V135.8M241.00 119.8V136.7M241.33 119.9V135.9M241.67 119.6V136.0M242.00 118.4V133.7M242.33 119.4V133.3M242.67 119.8V135.3M243.00 117.5V133.8M243.33 116.9V135.3M243.67 118.2V133.3M244.00 118.6V134.7M244.33 119.9V135.2M244.67 119.7V134.9M245.00 118.1V133.2M245.33 119.5V136.8M245.67 120.0V134.3M246.00 119.5V134.3M246.33 118.2V134.2M246.67 119.0V134.1M247.00 118.0V133.3M247.33 119.8V134.2M247.67 119.9V134.4M248.00 119.7V135.4M248.33 118.8V133.7M248.67 118.9V136.4M249.00 120.0V133.3M249.33 117.7V133.5M249.67 119.0V132.9M250.00 119.9V133.3M250.33 119.8V133.0M250.67 117.9V135.0M251.00 118.4V132.9M251.33 119.8V134.8M251.67 117.4V133.1M252.00 119.3V135.4M252.33 116.7V133.1M252.67 119.9V136.5M253.00 119.4V135.5M253.33 119.9V133.4M253.67 117.4V135.8M254.00 119.8V134.9M254.33 120.0V135.6M254.67 119.9V132.9M255.00 118.8V135.7M255.33 120.0V134.7M255.67 118.5V134.7M256.00 119.7V134.1M256.33 119.8V133.2M256.67 119.6V134.2M257.00 117.6V133.7M257.33 117.3V135.0M257.67 118.3V133.8M258.00 119.1V133.7M258.33 117.9V135.9M258.67 119.6V132.9M259.00 119.7V133.0M259.33 118.4V134.7M259.67 119.4V134.0M260.00 117.1V135.5M260.33 116.8V134.0M260.67 117.4V133.9M261.00 116.6V132.9M261.33 118.6V132.9M261.67 119.3V135.1M262.00 119.8V133.7M262.33 119.8V133.6M262.67 118.8V134.4M263.00 118.5V133.0M263.33 119.5V136.3M263.67 118.5V133.1M264.00 118.0V132.8M264.33 119.8V133.0M264.67 119.2V136.3M265.00 117.6V133.0M265.33 116.9V132.8M265.67 117.6V133.1M266.00 119.1V136.4M266.33 117.0V134.5M266.67 119.7V133.1M267.00 116.6V134.5M267.33 118.1V133.7M267.67 119.4V133.9M268.00 116.6V133.3M268.33 118.7V136.0M268.67 119.0V135.0M269.00 119.8V134.8M269.33 119.9V132.9M269.67 118.6V134.9M270.00 119.9V135.4M270.33 119.9V132.8M270.67 119.8V132.8M271.00 117.0V132.8M271.33 119.7V132.8M271.67 119.8V132.9M272.00 119.8V134.0M272.33 119.1V132.8M272.67 119.5V132.8M273.00 119.3V133.9M273.33 119.4V134.7M273.67 117.0V132.8M274.00 117.9V135.1M274.33 119.7V133.3M274.67 119.8V136.4M275.00 119.4V134.1M275.33 118.7V135.7M275.67 118.4V136.2M276.00 118.7V132.8M276.33 118.5V133.0M276.67 119.7V133.5M277.00 119.6V133.2M277.33 117.4V132.9M277.67 119.8V132.7M278.00 119.6V136.4M278.33 118.1V132.9M278.67 117.3V136.0M279.00 119.3V133.1M279.33 118.2V132.8M279.67 119.7V134.2M280.00 119.2V132.9M280.33 118.2V136.2M280.67 119.8V133.5M281.00 118.8V135.5M281.33 118.4V132.7M281.67 119.7V132.7M282.00 118.5V135.2M282.33 118.2V134.7M282.67 118.6V135.5M283.00 119.5V134.9M283.33 119.8V133.6M283.67 118.9V133.7M284.00 118.5V134.4M284.33 119.5V133.5M284.67 119.2V135.9M285.00 119.0V133.2M285.33 119.2V132.7M285.67 119.7V133.4M286.00 119.1V133.0M286.33 119.6V132.7M286.67 119.7V132.8M287.00 119.8V134.4M287.33 118.5V132.7M287.67 119.7V134.9M288.00 118.3V133.5M288.33 119.6V132.7M288.67 119.4V135.8M289.00 119.7V135.8M289.33 119.4V134.6M289.67 119.7V133.6M290.00 116.6V135.4M290.33 119.4V132.8M290.67 119.3V133.3M291.00 119.0V132.7M291.33 117.4V133.6M291.67 119.3V132.8M292.00 119.7V134.5M292.33 117.7V134.0M292.67 119.2V134.2M293.00 119.3V134.2M293.33 117.2V135.0M293.67 119.2V134.2M294.00 119.7V135.0M294.33 119.2V132.7M294.67 116.9V132.7M295.00 119.5V135.5M295.33 119.6V132.9M295.67 117.9V132.6M296.00 119.3V132.8M296.33 117.5V134.0M296.67 118.3V133.0M297.00 119.1V136.1M297.33 116.8V133.8M297.67 119.5V133.8M298.00 118.8V132.7M298.33 116.4V136.0M298.67 117.0V159.4M299.00 114.2V160.3M299.33 107.8V147.9M299.67 109.5V152.2M300.00 103.6V161.6M300.33 96.4V157.0M300.67 102.9V146.5M301.00 97.7V147.3M301.33 101.1V145.9M301.67 103.8V145.4M302.00 104.4V154.8M302.33 104.5V151.4M302.67 98.5V150.9M303.00 105.3V144.2M303.33 96.6V145.7M303.67 105.6V147.2M304.00 104.5V144.8M304.33 104.7V146.9M304.67 104.0V142.4M305.00 106.4V141.9M305.33 99.2V147.6M305.67 107.1V142.1M306.00 102.0V142.1M306.33 109.2V145.3M306.67 103.8V140.3M307.00 104.6V144.1M307.33 109.2V141.3M307.67 105.1V145.5M308.00 103.7V139.1M308.33 106.2V138.7M308.67 106.2V141.4M309.00 106.4V139.6M309.33 111.9V138.7M309.67 108.0V137.3M310.00 112.5V137.2M310.33 112.5V138.4M310.67 113.5V136.3M311.00 112.9V136.7M311.33 114.0V136.4M311.67 113.2V135.8M312.00 113.6V137.2M312.33 111.2V137.3M312.67 111.7V137.0M313.00 110.5V138.3M313.33 113.7V137.2M313.67 111.3V135.4M314.00 113.7V139.6M314.33 115.0V139.9M314.67 115.9V138.1M315.00 115.6V139.1M315.33 113.4V139.0M315.67 116.4V137.5M316.00 112.0V136.3M316.33 116.1V134.9M316.67 116.8V135.8M317.00 116.9V135.3M317.33 116.2V136.4M317.67 113.3V137.9M318.00 116.4V136.5M318.33 113.0V134.9M318.67 117.5V136.9M319.00 117.6V134.6M319.33 117.7V134.3M319.67 115.9V135.2M320.00 117.2V134.5M320.33 118.0V135.9M320.67 118.4V134.2M321.00 115.2V137.1M321.33 117.4V133.9M321.67 116.0V133.9M322.00 117.8V137.3M322.33 117.0V135.8M322.67 117.2V133.8M323.00 116.3V134.7M323.33 117.1V135.0M323.67 118.3V134.0M324.00 118.3V135.8M324.33 119.0V136.9M324.67 117.6V134.2M325.00 117.4V133.6M325.33 117.4V135.1M325.67 116.6V137.6M326.00 117.7V135.2M326.33 118.7V133.5M326.67 115.5V134.9M327.00 115.5V134.3M327.33 119.3V133.8M327.67 118.7V133.7M328.00 119.0V134.0M328.33 118.7V135.9M328.67 119.2V134.4M329.00 119.1V136.5M329.33 118.4V133.5M329.67 119.0V133.5M330.00 117.7V134.6M330.33 119.5V133.2M330.67 116.1V135.5M331.00 118.2V134.5M331.33 118.7V133.3M331.67 119.6V134.8M332.00 119.4V134.4M332.33 116.8V136.8M332.67 119.5V135.5M333.00 119.7V132.9M333.33 118.0V133.9M333.67 119.8V135.8M334.00 119.2V132.8M334.33 118.9V136.0M334.67 118.1V134.6M335.00 118.8V133.4M335.33 119.7V135.6M335.67 119.5V132.8M336.00 118.1V136.2M336.33 120.0V132.6M336.67 117.1V132.9M337.00 120.0V132.6M337.33 119.7V135.8M337.67 119.2V132.5M338.00 117.7V132.5M338.33 118.7V134.9M338.67 120.2V135.7M339.00 119.4V132.4M339.33 120.3V132.7M339.67 119.9V132.3M340.00 119.8V133.6M340.33 119.5V132.3M340.67 120.2V134.6M341.00 118.4V132.2M341.33 118.8V135.3M341.67 120.2V133.0M342.00 120.3V133.8M342.33 120.3V135.2M342.67 119.9V135.5M343.00 117.6V132.3M343.33 120.3V134.3M343.67 120.3V133.5M344.00 119.3V133.5M344.33 120.3V132.4M344.67 120.4V134.6M345.00 119.6V134.8M345.33 118.3V132.2M345.67 118.5V132.8M346.00 119.8V134.5M346.33 117.9V134.8M346.67 118.5V134.7M347.00 114.8V136.6M347.33 111.3V138.0M347.67 100.4V151.9M348.00 100.2V146.5M348.33 104.6V151.6M348.67 101.0V146.6M349.00 105.1V146.0M349.33 102.2V140.2M349.67 99.6V146.9M350.00 107.7V142.2M350.33 107.8V139.9M350.67 102.6V145.1M351.00 106.4V139.7M351.33 104.7V139.6M351.67 104.9V139.3M352.00 103.5V139.4M352.33 110.1V141.2M352.67 111.0V140.7M353.00 106.4V138.1M353.33 110.5V143.4M353.67 104.4V139.8M354.00 109.6V137.9M354.33 112.1V139.6M354.67 112.5V136.8M355.00 108.0V138.4M355.33 111.3V139.0M355.67 113.4V136.2M356.00 108.1V136.4M356.33 112.8V136.0M356.67 114.0V136.2M357.00 114.4V137.2M357.33 112.2V137.7M357.67 114.1V136.7M358.00 111.4V137.2M358.33 113.0V138.4M358.67 113.8V138.1M359.00 109.5V140.1M359.33 112.9V135.9M359.67 113.2V137.6M360.00 114.3V137.7M360.33 113.8V137.0M360.67 113.0V137.2M361.00 114.4V134.8M361.33 115.7V138.4M361.67 115.8V135.8M362.00 112.0V134.4M362.33 115.1V136.3M362.67 115.6V135.2M363.00 114.8V135.2M363.33 114.6V134.6M363.67 116.2V135.4M364.00 114.6V135.0M364.33 116.5V134.7M364.67 116.5V135.5M365.00 113.7V134.0M365.33 116.5V134.0M365.67 114.8V133.9M366.00 113.5V134.4M366.33 116.0V134.8M366.67 114.7V133.5M367.00 117.4V136.2M367.33 117.4V134.3M367.67 117.5V133.3M368.00 116.6V137.0M368.33 116.2V136.5M368.67 117.2V134.0M369.00 116.9V133.2M369.33 117.7V134.3M369.67 117.9V133.9M370.00 116.1V134.2M370.33 117.8V136.6M370.67 118.2V132.8M371.00 118.4V132.7M371.33 118.2V134.8M371.67 116.7V136.2M372.00 117.5V134.3M372.33 118.5V134.6M372.67 117.8V132.5M373.00 115.4V133.0M373.33 118.2V134.3M373.67 119.0V133.7M374.00 118.8V133.1M374.33 117.0V132.1M374.67 119.2V133.8M375.00 119.1V133.1M375.33 118.9V133.9M375.67 118.8V132.0M376.00 119.0V133.4M376.33 119.9V131.8M376.67 117.3V134.4M377.00 118.4V132.8M377.33 120.3V131.5M377.67 120.3V132.0M378.00 119.7V131.3M378.33 119.9V132.1M378.67 119.9V132.1M379.00 120.2V133.0M379.33 119.5V132.1M379.67 121.2V131.9M380.00 120.6V131.6M380.33 120.8V132.4M380.67 120.4V132.1M381.00 118.6V133.9M381.33 116.9V133.1M381.67 119.4V135.5M382.00 118.4V133.8M382.33 118.6V136.9M382.67 116.0V135.7M383.00 116.7V133.1M383.33 117.9V135.7M383.67 118.7V133.0M384.00 117.3V133.3M384.33 119.5V132.9M384.67 118.0V133.5M385.00 118.7V135.7M385.33 118.8V134.1M385.67 119.9V136.0M386.00 117.9V134.1M386.33 119.7V133.4M386.67 118.9V132.6M387.00 120.0V133.4M387.33 117.4V133.7M387.67 117.5V132.8M388.00 117.2V133.9M388.33 120.1V132.8M388.67 119.8V132.3M389.00 118.3V132.6M389.33 117.4V134.7M389.67 117.8V134.9M390.00 120.4V132.4M390.33 120.5V133.8M390.67 119.8V134.2M391.00 119.2V132.0M391.33 117.9V132.4M391.67 117.9V132.1M392.00 119.4V134.4M392.33 119.2V132.3M392.67 120.8V131.5M393.00 120.8V131.7M393.33 120.1V133.1M393.67 119.5V131.3M394.00 120.8V133.0M394.33 120.7V131.1M394.67 119.3V131.1M395.00 121.1V131.0M395.33 118.6V131.8M395.67 120.7V131.0M396.00 120.2V130.8M396.33 119.9V131.3M396.67 120.8V130.9M397.00 121.5V130.6M397.33 120.9V132.8M397.67 121.6V130.9M398.00 120.7V130.7M398.33 121.2V130.8M398.67 121.7V131.5M399.00 119.6V131.0M399.33 119.8V130.5M399.67 122.0V130.5M400.00 120.8V131.6M400.33 121.9V131.0M400.67 121.3V130.7M401.00 121.7V131.7M401.33 120.8V132.0M401.67 119.4V130.5M402.00 121.5V130.6M402.33 121.4V131.6M402.67 119.0V131.1M403.00 120.2V131.3M403.33 120.9V130.8M403.67 120.1V130.9M404.00 119.3V132.0M404.33 120.6V132.5M404.67 120.5V133.1M405.00 120.9V133.0M405.33 120.8V132.7M405.67 120.6V133.7M406.00 119.3V132.8M406.33 118.7V133.9M406.67 120.8V132.8M407.00 119.1V132.0M407.33 120.1V132.5M407.67 118.1V131.5M408.00 120.3V131.3M408.33 117.9V132.3M408.67 120.5V132.7M409.00 120.3V131.8M409.33 120.2V131.5M409.67 118.4V133.4M410.00 119.8V131.8M410.33 120.4V132.2M410.67 119.3V132.7M411.00 119.4V132.5M411.33 120.3V132.4M411.67 118.9V131.9M412.00 118.5V131.9M412.33 118.2V132.7M412.67 118.2V132.2M413.00 120.1V131.9M413.33 119.7V134.6M413.67 119.7V132.2M414.00 117.6V132.2M414.33 119.6V133.9M414.67 120.0V132.7M415.00 117.2V132.4M415.33 119.9V132.1M415.67 117.1V133.0M416.00 119.0V134.2M416.33 119.8V132.2M416.67 119.5V135.3M417.00 119.8V132.2M417.33 118.5V133.4M417.67 119.7V133.9M418.00 117.4V132.3M418.33 116.7V133.6M418.67 119.7V133.2M419.00 118.8V133.3M419.33 119.4V134.0M419.67 119.0V132.4M420.00 119.7V135.2M420.33 119.7V133.0M420.67 119.6V133.3M421.00 119.5V133.6M421.33 118.0V134.9M421.67 119.5V132.6M422.00 118.3V133.4M422.33 119.7V132.3M422.67 117.0V135.5M423.00 118.3V132.3M423.33 119.4V132.3M423.67 119.0V133.1M424.00 117.0V133.2M424.33 117.7V134.4M424.67 119.3V132.4M425.00 117.9V132.5M425.33 118.5V135.2M425.67 117.8V134.0M426.00 118.2V133.4M426.33 119.4V132.4M426.67 117.9V133.7M427.00 118.4V132.8M427.33 119.7V134.0M427.67 118.4V133.6M428.00 118.8V135.7M428.33 117.4V133.9M428.67 119.7V132.5M429.00 116.7V132.5M429.33 117.9V133.5M429.67 119.7V135.6M430.00 117.7V132.6M430.33 117.5V135.6M430.67 117.8V135.5M431.00 119.7V132.4M431.33 119.3V132.4M431.67 117.4V132.3M432.00 119.3V133.3M432.33 117.0V134.4M432.67 118.9V135.4M433.00 118.3V135.5M433.33 119.0V134.5M433.67 119.7V132.4M434.00 119.7V132.3M434.33 119.3V132.4M434.67 116.5V133.7M435.00 118.4V132.8M435.33 118.4V135.2M435.67 119.0V132.3M436.00 118.0V132.7M436.33 119.4V132.7M436.67 117.0V134.4M437.00 118.9V133.8M437.33 117.9V134.0M437.67 118.0V133.5M438.00 117.6V133.3M438.33 114.8V134.0M438.67 116.2V133.7M439.00 117.4V134.4M439.33 116.7V133.8M439.67 116.7V134.1M440.00 114.3V137.4M440.33 116.6V134.9M440.67 113.9V133.6M441.00 116.9V133.4M441.33 114.7V133.4M441.67 115.3V133.1M442.00 118.5V136.6M442.33 118.6V136.2M442.67 119.2V132.5M443.00 117.1V135.8M443.33 116.3V133.6M443.67 116.5V134.5M444.00 119.7V135.4M444.33 118.7V133.1M444.67 117.3V132.8M445.00 119.3V132.7M445.33 119.7V135.6M445.67 119.7V132.5M446.00 119.7V132.9M446.33 119.2V133.4M446.67 116.3V132.5M447.00 116.8V133.3" stroke="#ff0000" stroke-width="0.9" fill="none"/><path d="M29.7 80.5V172.5H447.5V80.5z" stroke="#44ee44" stroke-width="1.1" fill="none"/></svg>
<div class="t" style="left:17px;top:68.3px;font-size:5.5px;font-weight:bold;color:#0000ff;transform:scaleX(1.0);transform-origin:0 50%;">A (g)</div>
<div class="t" style="left:447px;top:68.3px;font-size:5.5px;font-weight:bold;color:#ff0000;transform:scaleX(1.0);transform-origin:0 50%;">B (V)</div>
<div class="t" style="right:921.5px;top:76.7px;font-size:5.5px;font-weight:bold;color:#0000ff;transform:scaleX(1.0);transform-origin:100% 50%;">1</div>
<div class="t" style="left:448px;top:76.7px;font-size:5.5px;font-weight:bold;color:#ff0000;transform:scaleX(1.0);transform-origin:0 50%;">1</div>
<div class="t" style="right:921.5px;top:85.9px;font-size:5.5px;font-weight:bold;color:#0000ff;transform:scaleX(1.0);transform-origin:100% 50%;">0.8</div>
<div class="t" style="left:448px;top:85.9px;font-size:5.5px;font-weight:bold;color:#ff0000;transform:scaleX(1.0);transform-origin:0 50%;">0.8</div>
<div class="t" style="right:921.5px;top:95.1px;font-size:5.5px;font-weight:bold;color:#0000ff;transform:scaleX(1.0);transform-origin:100% 50%;">0.6</div>
<div class="t" style="left:448px;top:95.1px;font-size:5.5px;font-weight:bold;color:#ff0000;transform:scaleX(1.0);transform-origin:0 50%;">0.6</div>
<div class="t" style="right:921.5px;top:104.3px;font-size:5.5px;font-weight:bold;color:#0000ff;transform:scaleX(1.0);transform-origin:100% 50%;">0.4</div>
<div class="t" style="left:448px;top:104.3px;font-size:5.5px;font-weight:bold;color:#ff0000;transform:scaleX(1.0);transform-origin:0 50%;">0.4</div>
<div class="t" style="right:921.5px;top:113.5px;font-size:5.5px;font-weight:bold;color:#0000ff;transform:scaleX(1.0);transform-origin:100% 50%;">0.2</div>
<div class="t" style="left:448px;top:113.5px;font-size:5.5px;font-weight:bold;color:#ff0000;transform:scaleX(1.0);transform-origin:0 50%;">0.2</div>
<div class="t" style="right:921.5px;top:122.7px;font-size:5.5px;font-weight:bold;color:#0000ff;transform:scaleX(1.0);transform-origin:100% 50%;">0</div>
<div class="t" style="left:448px;top:122.7px;font-size:5.5px;font-weight:bold;color:#ff0000;transform:scaleX(1.0);transform-origin:0 50%;">0</div>
<div class="t" style="right:921.5px;top:131.9px;font-size:5.5px;font-weight:bold;color:#0000ff;transform:scaleX(1.0);transform-origin:100% 50%;">-0.2</div>
<div class="t" style="left:448px;top:131.9px;font-size:5.5px;font-weight:bold;color:#ff0000;transform:scaleX(1.0);transform-origin:0 50%;">-0.2</div>
<div class="t" style="right:921.5px;top:141.1px;font-size:5.5px;font-weight:bold;color:#0000ff;transform:scaleX(1.0);transform-origin:100% 50%;">-0.4</div>
<div class="t" style="left:448px;top:141.1px;font-size:5.5px;font-weight:bold;color:#ff0000;transform:scaleX(1.0);transform-origin:0 50%;">-0.4</div>
<div class="t" style="right:921.5px;top:150.3px;font-size:5.5px;font-weight:bold;color:#0000ff;transform:scaleX(1.0);transform-origin:100% 50%;">-0.6</div>
<div class="t" style="left:448px;top:150.3px;font-size:5.5px;font-weight:bold;color:#ff0000;transform:scaleX(1.0);transform-origin:0 50%;">-0.6</div>
<div class="t" style="right:921.5px;top:159.5px;font-size:5.5px;font-weight:bold;color:#0000ff;transform:scaleX(1.0);transform-origin:100% 50%;">-0.8</div>
<div class="t" style="left:448px;top:159.5px;font-size:5.5px;font-weight:bold;color:#ff0000;transform:scaleX(1.0);transform-origin:0 50%;">-0.8</div>
<div class="t" style="right:921.5px;top:168.7px;font-size:5.5px;font-weight:bold;color:#0000ff;transform:scaleX(1.0);transform-origin:100% 50%;">-1</div>
<div class="t" style="left:448px;top:168.7px;font-size:5.5px;font-weight:bold;color:#ff0000;transform:scaleX(1.0);transform-origin:0 50%;">-1</div>
<div class="t" style="left:29.6px;top:174.0px;font-size:5.5px;font-weight:bold;color:#000;transform:translateX(-50%) scaleX(1.0);">0</div>
<div class="t" style="left:71.35px;top:174.0px;font-size:5.5px;font-weight:bold;color:#000;transform:translateX(-50%) scaleX(1.0);">1</div>
<div class="t" style="left:113.1px;top:174.0px;font-size:5.5px;font-weight:bold;color:#000;transform:translateX(-50%) scaleX(1.0);">2</div>
<div class="t" style="left:154.85px;top:174.0px;font-size:5.5px;font-weight:bold;color:#000;transform:translateX(-50%) scaleX(1.0);">3</div>
<div class="t" style="left:196.6px;top:174.0px;font-size:5.5px;font-weight:bold;color:#000;transform:translateX(-50%) scaleX(1.0);">4</div>
<div class="t" style="left:238.35px;top:174.0px;font-size:5.5px;font-weight:bold;color:#000;transform:translateX(-50%) scaleX(1.0);">5</div>
<div class="t" style="left:280.1px;top:174.0px;font-size:5.5px;font-weight:bold;color:#000;transform:translateX(-50%) scaleX(1.0);">6</div>
<div class="t" style="left:321.85px;top:174.0px;font-size:5.5px;font-weight:bold;color:#000;transform:translateX(-50%) scaleX(1.0);">7</div>
<div class="t" style="left:363.6px;top:174.0px;font-size:5.5px;font-weight:bold;color:#000;transform:translateX(-50%) scaleX(1.0);">8</div>
<div class="t" style="left:405.35px;top:174.0px;font-size:5.5px;font-weight:bold;color:#000;transform:translateX(-50%) scaleX(1.0);">9</div>
<div class="t" style="left:447.1px;top:174.0px;font-size:5.5px;font-weight:bold;color:#000;transform:translateX(-50%) scaleX(1.0);">10</div>
<div class="t" style="left:6px;top:178.7px;font-size:5.5px;font-weight:bold;color:#000;transform:scaleX(1.0);transform-origin:0 50%;">+13:36:05:769</div>
<div class="t" style="left:222px;top:178.7px;font-size:5.5px;font-weight:bold;color:#000;transform:scaleX(1.0);transform-origin:0 50%;">WAVEFORM</div>
<div class="t" style="left:450px;top:178.7px;font-size:5.5px;font-weight:bold;color:#000;transform:scaleX(1.0);transform-origin:0 50%;">s</div>
<div class="t" style="left:438px;top:81.6px;font-size:6.5px;font-weight:bold;color:#ff00ff;transform:scaleX(1.3);transform-origin:0 50%;">MI</div>
<div class="t" style="left:131px;top:61.5px;font-size:5.5px;font-weight:bold;color:#0000ff;transform:scaleX(1.0);transform-origin:0 50%;">A:</div>
<div class="t" style="left:137.7px;top:61.5px;font-size:5.5px;font-weight:bold;color:#0000ff;transform:scaleX(1.0);transform-origin:0 50%;">Max=</div>
<div class="t" style="left:158.7px;top:61.5px;font-size:5.5px;font-weight:bold;color:#0000ff;transform:scaleX(1.0);transform-origin:0 50%;">647.92</div>
<div class="t" style="left:178px;top:61.5px;font-size:5.5px;font-weight:bold;color:#0000ff;transform:scaleX(1.0);transform-origin:0 50%;">mg</div>
<div class="t" style="left:189px;top:61.5px;font-size:5.5px;font-weight:bold;color:#0000ff;transform:scaleX(1.0);transform-origin:0 50%;">Min=</div>
<div class="t" style="left:206.7px;top:61.5px;font-size:5.5px;font-weight:bold;color:#0000ff;transform:scaleX(1.0);transform-origin:0 50%;">-530.36</div>
<div class="t" style="left:227.4px;top:61.5px;font-size:5.5px;font-weight:bold;color:#0000ff;transform:scaleX(1.0);transform-origin:0 50%;">mg</div>
<div class="t" style="left:238.4px;top:61.5px;font-size:5.5px;font-weight:bold;color:#0000ff;transform:scaleX(1.0);transform-origin:0 50%;">Mean=</div>
<div class="t" style="left:273.4px;top:61.5px;font-size:5.5px;font-weight:bold;color:#0000ff;transform:scaleX(1.0);transform-origin:0 50%;">-12</div>
<div class="t" style="left:285.8px;top:61.5px;font-size:5.5px;font-weight:bold;color:#0000ff;transform:scaleX(1.0);transform-origin:0 50%;">&#956;g</div>
<div class="t" style="left:295.3px;top:61.5px;font-size:5.5px;font-weight:bold;color:#0000ff;transform:scaleX(1.0);transform-origin:0 50%;">RMS=</div>
<div class="t" style="left:320.3px;top:61.5px;font-size:5.5px;font-weight:bold;color:#0000ff;transform:scaleX(1.0);transform-origin:0 50%;">92.934</div>
<div class="t" style="left:339.2px;top:61.5px;font-size:5.5px;font-weight:bold;color:#0000ff;transform:scaleX(1.0);transform-origin:0 50%;">mg</div>
<div class="t" style="left:131px;top:67.7px;font-size:5.5px;font-weight:bold;color:#ff0000;transform:scaleX(1.0);transform-origin:0 50%;">B:</div>
<div class="t" style="left:137.7px;top:67.7px;font-size:5.5px;font-weight:bold;color:#ff0000;transform:scaleX(1.0);transform-origin:0 50%;">Max=</div>
<div class="t" style="left:158.7px;top:67.7px;font-size:5.5px;font-weight:bold;color:#ff0000;transform:scaleX(1.0);transform-origin:0 50%;">718.20</div>
<div class="t" style="left:178px;top:67.7px;font-size:5.5px;font-weight:bold;color:#ff0000;transform:scaleX(1.0);transform-origin:0 50%;">mV</div>
<div class="t" style="left:189px;top:67.7px;font-size:5.5px;font-weight:bold;color:#ff0000;transform:scaleX(1.0);transform-origin:0 50%;">Min=</div>
<div class="t" style="left:206.7px;top:67.7px;font-size:5.5px;font-weight:bold;color:#ff0000;transform:scaleX(1.0);transform-origin:0 50%;">-863.25</div>
<div class="t" style="left:227.4px;top:67.7px;font-size:5.5px;font-weight:bold;color:#ff0000;transform:scaleX(1.0);transform-origin:0 50%;">mV</div>
<div class="t" style="left:238.4px;top:67.7px;font-size:5.5px;font-weight:bold;color:#ff0000;transform:scaleX(1.0);transform-origin:0 50%;">Mean=</div>
<div class="t" style="left:273.4px;top:67.7px;font-size:5.5px;font-weight:bold;color:#ff0000;transform:scaleX(1.0);transform-origin:0 50%;">-18</div>
<div class="t" style="left:285.8px;top:67.7px;font-size:5.5px;font-weight:bold;color:#ff0000;transform:scaleX(1.0);transform-origin:0 50%;">&#956;V</div>
<div class="t" style="left:295.3px;top:67.7px;font-size:5.5px;font-weight:bold;color:#ff0000;transform:scaleX(1.0);transform-origin:0 50%;">RMS=</div>
<div class="t" style="left:320.3px;top:67.7px;font-size:5.5px;font-weight:bold;color:#ff0000;transform:scaleX(1.0);transform-origin:0 50%;">90.695</div>
<div class="t" style="left:339.2px;top:67.7px;font-size:5.5px;font-weight:bold;color:#ff0000;transform:scaleX(1.0);transform-origin:0 50%;">mV</div>
<svg width="950" height="514" style="overflow:visible"><path d="M545.5 80V172" stroke="#33ee33" stroke-width="1" stroke-dasharray="1.4 1.6"/><path d="M587.5 80V172" stroke="#33ee33" stroke-width="1" stroke-dasharray="1.4 1.6"/><path d="M628.5 80V172" stroke="#33ee33" stroke-width="1" stroke-dasharray="1.4 1.6"/><path d="M670.5 80V172" stroke="#33ee33" stroke-width="1" stroke-dasharray="1.4 1.6"/><path d="M712.5 80V172" stroke="#33ee33" stroke-width="1" stroke-dasharray="1.4 1.6"/><path d="M753.5 80V172" stroke="#33ee33" stroke-width="1" stroke-dasharray="1.4 1.6"/><path d="M795.5 80V172" stroke="#33ee33" stroke-width="1" stroke-dasharray="1.4 1.6"/><path d="M836.5 80V172" stroke="#33ee33" stroke-width="1" stroke-dasharray="1.4 1.6"/><path d="M878.5 80V172" stroke="#33ee33" stroke-width="1" stroke-dasharray="1.4 1.6"/><path d="M504 89.5H920" stroke="#33ee33" stroke-width="1" stroke-dasharray="1.4 1.6"/><path d="M504 98.5H920" stroke="#33ee33" stroke-width="1" stroke-dasharray="1.4 1.6"/><path d="M504 108.5H920" stroke="#33ee33" stroke-width="1" stroke-dasharray="1.4 1.6"/><path d="M504 117.5H920" stroke="#33ee33" stroke-width="1" stroke-dasharray="1.4 1.6"/><path d="M504 126.5H920" stroke="#33ee33" stroke-width="1" stroke-dasharray="1.4 1.6"/><path d="M504 135.5H920" stroke="#33ee33" stroke-width="1" stroke-dasharray="1.4 1.6"/><path d="M504 144.5H920" stroke="#33ee33" stroke-width="1" stroke-dasharray="1.4 1.6"/><path d="M504 154.5H920" stroke="#33ee33" stroke-width="1" stroke-dasharray="1.4 1.6"/><path d="M504 163.5H920" stroke="#33ee33" stroke-width="1" stroke-dasharray="1.4 1.6"/><polyline points="504.3,157.7 505.8,124.2 507.4,89.2 509.3,86.4 511.3,99.3 513.2,87.4 514.6,92.0 516.0,104.8 517.9,138.0 519.5,122.3 521.4,85.5 522.6,80.0 523.7,109.4 524.9,120.5 526.0,118.6 527.2,141.6 528.8,126.9 530.2,144.4 531.1,139.8 532.7,161.9 534.6,167.4 537.9,155.4 542.8,163.7 545.1,167.4 547.7,148.1 549.6,149.9 551.6,165.6 553.5,167.4 556.8,160.0 560.3,168.3 565.2,166.5 567.1,169.2 570.4,167.4 574.0,171.1 577.8,167.4 580.5,161.9 584.0,170.2 588.0,169.2 592.0,165.6 596.0,171.1 604.0,170.2 610.0,172.0 615.0,170.2 620.0,172.0 628.0,170.2 640.0,171.5 700.0,171.1 732.7,170.2 740.0,172.0 811.0,170.2 820.0,172.0 837.6,170.2 845.0,172.0 920.0,172.0" stroke="#2424ff" stroke-width="0.9" fill="none"/><polyline points="504.3,167.4 505.8,139.8 508.2,121.4 509.7,121.4 511.3,139.8 512.8,124.2 514.6,80.0 516.0,103.0 517.5,144.4 519.0,160.0 520.4,146.2 521.8,141.6 523.0,155.4 524.9,139.8 526.3,144.4 527.6,151.8 529.2,157.3 531.1,160.0 533.0,166.5 537.9,164.6 542.8,167.4 545.1,168.3 547.7,160.0 549.0,161.9 551.6,168.3 556.4,161.9 560.3,169.2 566.0,169.2 570.0,167.4 577.8,171.1 580.5,163.7 585.0,170.2 592.0,166.5 597.0,171.1 632.0,172.0 638.4,167.4 645.0,172.0 650.0,170.2 655.0,172.0 662.0,170.2 668.0,172.0 726.0,172.0 732.7,166.5 738.0,172.0 758.0,171.1 805.0,172.0 811.0,169.2 816.0,172.0 832.0,172.0 837.6,168.3 843.0,171.1 855.0,170.2 864.0,167.4 870.0,171.1 920.0,171.1" stroke="#ff2424" stroke-width="0.9" fill="none"/><path d="M503.7 80.5V172.5H920V80.5z" stroke="#44ee44" stroke-width="1.1" fill="none"/></svg>
<div class="t" style="left:502px;top:68.3px;font-size:5.5px;font-weight:bold;color:#0000ff;transform:scaleX(1.0);transform-origin:0 50%;">A</div>
<div class="t" style="left:920px;top:68.3px;font-size:5.5px;font-weight:bold;color:#ff0000;transform:scaleX(1.0);transform-origin:0 50%;">B</div>
<div class="t" style="right:447.5px;top:76.7px;font-size:5.5px;font-weight:bold;color:#0000ff;transform:scaleX(1.0);transform-origin:100% 50%;">1</div>
<div class="t" style="left:922px;top:76.7px;font-size:5.5px;font-weight:bold;color:#ff0000;transform:scaleX(1.0);transform-origin:0 50%;">1</div>
<div class="t" style="right:447.5px;top:85.9px;font-size:5.5px;font-weight:bold;color:#0000ff;transform:scaleX(1.0);transform-origin:100% 50%;">0.9</div>
<div class="t" style="left:922px;top:85.9px;font-size:5.5px;font-weight:bold;color:#ff0000;transform:scaleX(1.0);transform-origin:0 50%;">0.9</div>
<div class="t" style="right:447.5px;top:95.1px;font-size:5.5px;font-weight:bold;color:#0000ff;transform:scaleX(1.0);transform-origin:100% 50%;">0.8</div>
<div class="t" style="left:922px;top:95.1px;font-size:5.5px;font-weight:bold;color:#ff0000;transform:scaleX(1.0);transform-origin:0 50%;">0.8</div>
<div class="t" style="right:447.5px;top:104.3px;font-size:5.5px;font-weight:bold;color:#0000ff;transform:scaleX(1.0);transform-origin:100% 50%;">0.7</div>
<div class="t" style="left:922px;top:104.3px;font-size:5.5px;font-weight:bold;color:#ff0000;transform:scaleX(1.0);transform-origin:0 50%;">0.7</div>
<div class="t" style="right:447.5px;top:113.5px;font-size:5.5px;font-weight:bold;color:#0000ff;transform:scaleX(1.0);transform-origin:100% 50%;">0.6</div>
<div class="t" style="left:922px;top:113.5px;font-size:5.5px;font-weight:bold;color:#ff0000;transform:scaleX(1.0);transform-origin:0 50%;">0.6</div>
<div class="t" style="right:447.5px;top:122.7px;font-size:5.5px;font-weight:bold;color:#0000ff;transform:scaleX(1.0);transform-origin:100% 50%;">0.5</div>
<div class="t" style="left:922px;top:122.7px;font-size:5.5px;font-weight:bold;color:#ff0000;transform:scaleX(1.0);transform-origin:0 50%;">0.5</div>
<div class="t" style="right:447.5px;top:131.9px;font-size:5.5px;font-weight:bold;color:#0000ff;transform:scaleX(1.0);transform-origin:100% 50%;">0.4</div>
<div class="t" style="left:922px;top:131.9px;font-size:5.5px;font-weight:bold;color:#ff0000;transform:scaleX(1.0);transform-origin:0 50%;">0.4</div>
<div class="t" style="right:447.5px;top:141.1px;font-size:5.5px;font-weight:bold;color:#0000ff;transform:scaleX(1.0);transform-origin:100% 50%;">0.3</div>
<div class="t" style="left:922px;top:141.1px;font-size:5.5px;font-weight:bold;color:#ff0000;transform:scaleX(1.0);transform-origin:0 50%;">0.3</div>
<div class="t" style="right:447.5px;top:150.3px;font-size:5.5px;font-weight:bold;color:#0000ff;transform:scaleX(1.0);transform-origin:100% 50%;">0.2</div>
<div class="t" style="left:922px;top:150.3px;font-size:5.5px;font-weight:bold;color:#ff0000;transform:scaleX(1.0);transform-origin:0 50%;">0.2</div>
<div class="t" style="right:447.5px;top:159.5px;font-size:5.5px;font-weight:bold;color:#0000ff;transform:scaleX(1.0);transform-origin:100% 50%;">0.1</div>
<div class="t" style="left:922px;top:159.5px;font-size:5.5px;font-weight:bold;color:#ff0000;transform:scaleX(1.0);transform-origin:0 50%;">0.1</div>
<div class="t" style="right:447.5px;top:168.7px;font-size:5.5px;font-weight:bold;color:#0000ff;transform:scaleX(1.0);transform-origin:100% 50%;">0</div>
<div class="t" style="left:922px;top:168.7px;font-size:5.5px;font-weight:bold;color:#ff0000;transform:scaleX(1.0);transform-origin:0 50%;">0</div>
<div class="t" style="left:503.8px;top:174.0px;font-size:5.5px;font-weight:bold;color:#000;transform:translateX(-50%) scaleX(1.0);">0</div>
<div class="t" style="left:545.42px;top:174.0px;font-size:5.5px;font-weight:bold;color:#000;transform:translateX(-50%) scaleX(1.0);">1</div>
<div class="t" style="left:587.04px;top:174.0px;font-size:5.5px;font-weight:bold;color:#000;transform:translateX(-50%) scaleX(1.0);">2</div>
<div class="t" style="left:628.66px;top:174.0px;font-size:5.5px;font-weight:bold;color:#000;transform:translateX(-50%) scaleX(1.0);">3</div>
<div class="t" style="left:670.28px;top:174.0px;font-size:5.5px;font-weight:bold;color:#000;transform:translateX(-50%) scaleX(1.0);">4</div>
<div class="t" style="left:711.9px;top:174.0px;font-size:5.5px;font-weight:bold;color:#000;transform:translateX(-50%) scaleX(1.0);">5</div>
<div class="t" style="left:753.52px;top:174.0px;font-size:5.5px;font-weight:bold;color:#000;transform:translateX(-50%) scaleX(1.0);">6</div>
<div class="t" style="left:795.14px;top:174.0px;font-size:5.5px;font-weight:bold;color:#000;transform:translateX(-50%) scaleX(1.0);">7</div>
<div class="t" style="left:836.76px;top:174.0px;font-size:5.5px;font-weight:bold;color:#000;transform:translateX(-50%) scaleX(1.0);">8</div>
<div class="t" style="left:878.38px;top:174.0px;font-size:5.5px;font-weight:bold;color:#000;transform:translateX(-50%) scaleX(1.0);">9</div>
<div class="t" style="left:920.0px;top:174.0px;font-size:5.5px;font-weight:bold;color:#000;transform:translateX(-50%) scaleX(1.0);">10</div>
<div class="t" style="left:482px;top:179.1px;font-size:5.5px;font-weight:bold;color:#000;transform:scaleX(1.0);transform-origin:0 50%;">FFT Segments:430&nbsp;&nbsp; Resolution: 43.0664Hz</div>
<div class="t" style="left:662px;top:179.1px;font-size:5.5px;font-weight:bold;color:#000;transform:scaleX(1.0);transform-origin:0 50%;">NORMALIZED AMPLITUDE SPECTRUM</div>
<div class="t" style="left:921px;top:179.1px;font-size:5.5px;font-weight:bold;color:#000;transform:scaleX(1.0);transform-origin:0 50%;">kHz</div>
<div class="t" style="left:910px;top:81.6px;font-size:6.5px;font-weight:bold;color:#ff00ff;transform:scaleX(1.3);transform-origin:0 50%;">MI</div>
<div class="t" style="left:668.7px;top:61.5px;font-size:5.5px;font-weight:bold;color:#0000ff;transform:scaleX(1.0);transform-origin:0 50%;">A:</div>
<div class="t" style="left:676.6px;top:61.5px;font-size:5.5px;font-weight:bold;color:#0000ff;transform:scaleX(1.0);transform-origin:0 50%;">Peak Frequency=</div>
<div class="t" style="left:728.2px;top:61.5px;font-size:5.5px;font-weight:bold;color:#0000ff;transform:scaleX(1.0);transform-origin:0 50%;">389.0</div>
<div class="t" style="left:749px;top:61.5px;font-size:5.5px;font-weight:bold;color:#0000ff;transform:scaleX(1.0);transform-origin:0 50%;">Hz</div>
<div class="t" style="left:668.7px;top:67.7px;font-size:5.5px;font-weight:bold;color:#ff0000;transform:scaleX(1.0);transform-origin:0 50%;">B:</div>
<div class="t" style="left:676.6px;top:67.7px;font-size:5.5px;font-weight:bold;color:#ff0000;transform:scaleX(1.0);transform-origin:0 50%;">Peak Frequency=</div>
<div class="t" style="left:728.2px;top:67.7px;font-size:5.5px;font-weight:bold;color:#ff0000;transform:scaleX(1.0);transform-origin:0 50%;">255.9</div>
<div class="t" style="left:749px;top:67.7px;font-size:5.5px;font-weight:bold;color:#ff0000;transform:scaleX(1.0);transform-origin:0 50%;">Hz</div>
<div class="t" style="left:13px;top:207.6px;font-size:5.6px;font-weight:bold;color:#0000ff;transform:scaleX(1.0);transform-origin:0 50%;">A(mg)</div>
<div class="t" style="left:33px;top:208.2px;font-size:5.5px;font-weight:bold;color:#222;transform:scaleX(1.0);transform-origin:0 50%;">T=13:36:05:769</div>
<div class="t" style="right:13px;top:207.5px;font-size:5.8px;font-weight:normal;color:#ff0000;transform:scaleX(1.0);transform-origin:100% 50%;">B-(mV)</div>
<div class="a" style="left:23px;top:222px;width:5px;height:183px;background:linear-gradient(180deg,#ff0000 0%,#ff8000 12%,#ffff00 22%,#a0ff00 30%,#00ff00 40%,#00ff80 52%,#00ffff 60%,#0080ff 70%,#0000ff 80%,#000080 90%,#000000 100%)"></div>
<div class="a" style="left:922px;top:222px;width:5px;height:183px;background:linear-gradient(180deg,#ff0000 0%,#ff8000 12%,#ffff00 22%,#a0ff00 30%,#00ff00 40%,#00ff80 52%,#00ffff 60%,#0080ff 70%,#0000ff 80%,#000080 90%,#000000 100%)"></div>
<svg width="950" height="514" style="overflow:visible"><rect x="29" y="222" width="428" height="183" fill="#000"/><path fill="#00001f" d="M53 320h1v2h-1zM53 348h1v2h-1zM53 382h1v2h-1zM53 402h1v2h-1zM58 240h1v2h-1zM58 256h1v2h-1zM58 266h1v2h-1zM58 280h1v2h-1zM58 310h1v2h-1zM59 232h1v2h-1zM59 256h1v2h-1zM59 274h1v4h-1zM59 292h1v2h-1zM59 302h1v2h-1zM59 354h1v4h-1zM60 254h1v2h-1zM60 290h1v2h-1zM60 328h1v2h-1zM60 352h1v2h-1zM60 370h1v2h-1zM61 258h1v2h-1zM61 266h1v4h-1zM61 292h1v2h-1zM61 298h1v2h-1zM61 302h1v2h-1zM61 334h1v2h-1zM61 366h1v2h-1zM61 404h1v1h-1zM62 248h1v2h-1zM62 252h1v2h-1zM62 282h1v2h-1zM62 352h1v2h-1zM62 398h1v2h-1zM63 232h1v2h-1zM64 356h1v2h-1zM65 358h1v2h-1zM66 244h1v2h-1zM66 314h1v4h-1zM66 340h1v4h-1zM66 378h1v2h-1zM70 362h1v2h-1zM71 312h1v2h-1zM71 384h1v2h-1zM72 334h1v2h-1zM72 350h1v2h-1zM73 284h1v2h-1zM73 290h1v2h-1zM73 324h1v2h-1zM73 398h1v2h-1zM74 326h1v2h-1zM74 350h1v2h-1zM75 264h1v2h-1zM75 268h1v4h-1zM75 296h1v2h-1zM75 368h1v2h-1zM75 386h1v2h-1zM80 266h1v2h-1zM80 306h1v2h-1zM80 394h1v4h-1zM81 282h1v2h-1zM81 364h1v2h-1zM82 240h1v2h-1zM82 250h1v2h-1zM83 356h1v2h-1zM83 368h1v2h-1zM83 380h1v2h-1zM85 362h1v2h-1zM91 280h1v2h-1zM91 384h1v2h-1zM91 388h1v2h-1zM91 392h1v2h-1zM92 268h1v2h-1zM92 284h1v2h-1zM92 288h1v2h-1zM92 340h1v2h-1zM93 240h1v2h-1zM93 268h1v2h-1zM93 340h1v2h-1zM93 402h1v3h-1zM94 344h1v2h-1zM94 382h1v4h-1zM94 388h1v2h-1zM100 340h1v2h-1zM105 256h1v2h-1zM105 334h1v2h-1zM105 340h1v2h-1zM105 362h1v2h-1zM106 244h1v2h-1zM106 282h1v2h-1zM106 296h1v2h-1zM106 348h1v2h-1zM107 246h1v2h-1zM107 250h1v2h-1zM107 302h1v2h-1zM107 348h1v2h-1zM107 368h1v2h-1zM107 374h1v2h-1zM108 310h1v2h-1zM108 338h1v2h-1zM108 362h1v2h-1zM109 360h1v2h-1zM117 232h1v4h-1zM117 240h1v2h-1zM117 280h1v2h-1zM117 310h1v2h-1zM117 386h1v2h-1zM118 266h1v2h-1zM118 372h1v2h-1zM118 380h1v2h-1zM121 344h1v2h-1zM133 256h1v2h-1zM133 300h1v2h-1zM133 374h1v2h-1zM133 378h1v2h-1zM133 382h1v2h-1zM134 258h1v2h-1zM134 322h1v2h-1zM134 380h1v2h-1zM135 376h1v2h-1z"/><path fill="#00003e" d="M40 312h1v2h-1zM41 222h1v2h-1zM41 248h1v2h-1zM41 288h1v2h-1zM41 302h1v2h-1zM41 380h1v2h-1zM41 390h1v2h-1zM42 228h1v2h-1zM42 256h1v2h-1zM42 284h1v2h-1zM42 356h1v2h-1zM42 376h1v2h-1zM42 396h1v4h-1zM42 404h1v1h-1zM43 252h1v2h-1zM43 272h1v2h-1zM43 296h1v2h-1zM49 284h1v2h-1zM49 290h1v2h-1zM49 300h1v6h-1zM49 356h1v4h-1zM50 262h1v2h-1zM50 272h1v2h-1zM50 310h1v14h-1zM50 326h1v2h-1zM50 332h1v10h-1zM50 344h1v2h-1zM50 348h1v6h-1zM50 356h1v6h-1zM50 382h1v4h-1zM50 390h1v2h-1zM51 272h1v2h-1zM51 316h1v6h-1zM51 324h1v4h-1zM51 334h1v2h-1zM51 348h1v14h-1zM52 262h1v4h-1zM52 268h1v6h-1zM52 310h1v14h-1zM52 326h1v16h-1zM52 344h1v10h-1zM52 356h1v6h-1zM52 384h1v2h-1zM52 388h1v4h-1zM53 222h1v32h-1zM53 256h1v6h-1zM53 264h1v6h-1zM53 272h1v20h-1zM53 294h1v18h-1zM53 314h1v6h-1zM53 322h1v26h-1zM53 350h1v2h-1zM53 354h1v4h-1zM53 360h1v2h-1zM53 368h1v14h-1zM53 384h1v8h-1zM53 394h1v8h-1zM53 404h1v1h-1zM54 222h1v16h-1zM54 248h1v2h-1zM54 252h1v4h-1zM54 260h1v32h-1zM54 296h1v2h-1zM54 304h1v6h-1zM54 312h1v10h-1zM54 324h1v2h-1zM54 348h1v14h-1zM55 234h1v2h-1zM55 264h1v2h-1zM55 268h1v2h-1zM55 272h1v2h-1zM55 282h1v8h-1zM56 224h1v2h-1zM56 228h1v4h-1zM56 252h1v4h-1zM56 260h1v2h-1zM56 264h1v2h-1zM56 272h1v2h-1zM56 282h1v4h-1zM56 288h1v2h-1zM56 360h1v2h-1zM57 222h1v20h-1zM57 248h1v2h-1zM57 252h1v4h-1zM57 258h1v14h-1zM57 274h1v2h-1zM57 278h1v14h-1zM57 294h1v4h-1zM57 304h1v6h-1zM57 314h1v2h-1zM57 318h1v4h-1zM57 324h1v2h-1zM57 348h1v10h-1zM57 360h1v2h-1zM58 224h1v2h-1zM58 230h1v2h-1zM58 234h1v2h-1zM58 238h1v2h-1zM58 242h1v2h-1zM58 250h1v2h-1zM58 260h1v4h-1zM58 268h1v6h-1zM58 278h1v2h-1zM58 286h1v2h-1zM58 290h1v6h-1zM58 300h1v6h-1zM58 312h1v2h-1zM58 316h1v2h-1zM58 320h1v4h-1zM58 326h1v52h-1zM58 380h1v10h-1zM58 394h1v11h-1zM59 224h1v2h-1zM59 230h1v2h-1zM59 238h1v2h-1zM59 246h1v6h-1zM59 262h1v2h-1zM59 270h1v4h-1zM59 278h1v8h-1zM59 290h1v2h-1zM59 294h1v4h-1zM59 300h1v2h-1zM59 304h1v4h-1zM59 318h1v2h-1zM59 322h1v4h-1zM59 328h1v6h-1zM59 336h1v6h-1zM59 344h1v4h-1zM59 350h1v2h-1zM59 360h1v8h-1zM59 374h1v6h-1zM59 382h1v2h-1zM59 390h1v2h-1zM59 404h1v1h-1zM60 226h1v2h-1zM60 234h1v2h-1zM60 248h1v2h-1zM60 252h1v2h-1zM60 256h1v2h-1zM60 260h1v2h-1zM60 266h1v4h-1zM60 276h1v4h-1zM60 292h1v2h-1zM60 318h1v2h-1zM60 322h1v4h-1zM60 332h1v4h-1zM60 346h1v2h-1zM60 350h1v2h-1zM60 354h1v2h-1zM60 360h1v2h-1zM60 366h1v2h-1zM60 376h1v2h-1zM60 380h1v2h-1zM60 386h1v6h-1zM60 394h1v2h-1zM60 398h1v2h-1zM60 404h1v1h-1zM61 232h1v2h-1zM61 236h1v2h-1zM61 242h1v2h-1zM61 262h1v2h-1zM61 278h1v2h-1zM61 288h1v2h-1zM61 294h1v4h-1zM61 306h1v6h-1zM61 316h1v4h-1zM61 322h1v2h-1zM61 336h1v2h-1zM61 348h1v4h-1zM61 362h1v2h-1zM61 380h1v2h-1zM61 388h1v4h-1zM61 398h1v2h-1zM62 230h1v8h-1zM62 258h1v14h-1zM62 274h1v2h-1zM62 280h1v2h-1zM62 284h1v4h-1zM62 290h1v2h-1zM62 294h1v26h-1zM62 322h1v2h-1zM62 326h1v14h-1zM62 344h1v2h-1zM62 348h1v2h-1zM62 354h1v2h-1zM62 358h1v2h-1zM62 364h1v18h-1zM62 388h1v2h-1zM62 392h1v4h-1zM62 400h1v4h-1zM63 222h1v4h-1zM63 230h1v2h-1zM63 238h1v16h-1zM63 288h1v2h-1zM63 306h1v2h-1zM63 316h1v6h-1zM63 324h1v4h-1zM63 334h1v2h-1zM63 346h1v10h-1zM63 358h1v4h-1zM63 382h1v2h-1zM63 388h1v4h-1zM63 394h1v11h-1zM64 222h1v8h-1zM64 232h1v20h-1zM64 254h1v2h-1zM64 324h1v2h-1zM64 348h1v8h-1zM64 358h1v4h-1zM64 384h1v2h-1zM64 390h1v2h-1zM64 396h1v4h-1zM64 404h1v1h-1zM65 224h1v4h-1zM65 230h1v6h-1zM65 238h1v10h-1zM65 250h1v2h-1zM65 284h1v2h-1zM65 320h1v2h-1zM65 324h1v2h-1zM65 340h1v4h-1zM65 346h1v4h-1zM65 360h1v2h-1zM65 378h1v2h-1zM65 382h1v4h-1zM65 388h1v2h-1zM65 394h1v11h-1zM66 258h1v16h-1zM66 280h1v4h-1zM66 286h1v6h-1zM66 294h1v10h-1zM66 308h1v6h-1zM66 322h1v2h-1zM66 326h1v2h-1zM66 330h1v4h-1zM66 336h1v4h-1zM66 344h1v2h-1zM66 360h1v6h-1zM66 368h1v10h-1zM66 380h1v2h-1zM66 386h1v2h-1zM66 392h1v4h-1zM67 340h1v2h-1zM67 360h1v4h-1zM68 340h1v2h-1zM68 360h1v4h-1zM69 340h1v2h-1zM69 360h1v4h-1zM70 340h1v2h-1zM71 222h1v2h-1zM71 238h1v8h-1zM71 248h1v6h-1zM71 260h1v14h-1zM71 292h1v12h-1zM71 310h1v2h-1zM71 340h1v2h-1zM71 344h1v2h-1zM71 360h1v20h-1zM71 382h1v2h-1zM71 386h1v6h-1zM72 224h1v6h-1zM72 234h1v4h-1zM72 252h1v2h-1zM72 274h1v6h-1zM72 304h1v6h-1zM72 312h1v12h-1zM72 328h1v6h-1zM72 336h1v2h-1zM72 346h1v4h-1zM72 352h1v2h-1zM72 358h1v2h-1zM72 390h1v6h-1zM72 400h1v2h-1zM73 226h1v2h-1zM73 234h1v2h-1zM73 252h1v4h-1zM73 274h1v8h-1zM73 286h1v2h-1zM73 304h1v2h-1zM73 312h1v10h-1zM73 326h1v14h-1zM73 344h1v16h-1zM73 392h1v6h-1zM73 404h1v1h-1zM74 222h1v20h-1zM74 252h1v4h-1zM74 260h1v2h-1zM74 268h1v2h-1zM74 272h1v2h-1zM74 278h1v2h-1zM74 300h1v2h-1zM74 306h1v4h-1zM74 312h1v12h-1zM74 328h1v8h-1zM74 338h1v2h-1zM74 344h1v6h-1zM74 352h1v2h-1zM74 372h1v2h-1zM74 390h1v6h-1zM75 238h1v8h-1zM75 250h1v2h-1zM75 256h1v8h-1zM75 266h1v2h-1zM75 292h1v4h-1zM75 298h1v2h-1zM75 302h1v2h-1zM75 340h1v2h-1zM75 360h1v8h-1zM75 372h1v6h-1zM75 380h1v4h-1zM76 362h1v2h-1zM77 362h1v2h-1zM78 360h1v4h-1zM79 340h1v2h-1zM79 360h1v2h-1zM80 256h1v4h-1zM80 262h1v2h-1zM80 270h1v2h-1zM80 278h1v2h-1zM80 294h1v12h-1zM80 308h1v2h-1zM80 312h1v8h-1zM80 322h1v2h-1zM80 328h1v6h-1zM80 340h1v14h-1zM80 358h1v2h-1zM80 362h1v2h-1zM80 392h1v2h-1zM80 400h1v2h-1zM81 244h1v2h-1zM81 260h1v6h-1zM81 268h1v2h-1zM81 272h1v10h-1zM81 286h1v2h-1zM81 290h1v2h-1zM81 294h1v2h-1zM81 304h1v6h-1zM81 320h1v2h-1zM81 324h1v4h-1zM81 330h1v2h-1zM81 334h1v6h-1zM81 350h1v14h-1zM81 366h1v12h-1zM81 396h1v4h-1zM81 402h1v3h-1zM82 244h1v2h-1zM82 262h1v4h-1zM82 272h1v12h-1zM82 286h1v2h-1zM82 290h1v2h-1zM82 306h1v4h-1zM82 324h1v4h-1zM82 334h1v6h-1zM82 354h1v4h-1zM82 364h1v2h-1zM82 368h1v10h-1zM82 380h1v2h-1zM82 398h1v2h-1zM82 402h1v3h-1zM83 256h1v2h-1zM83 260h1v20h-1zM83 286h1v2h-1zM83 290h1v2h-1zM83 294h1v4h-1zM83 302h1v8h-1zM83 312h1v2h-1zM83 316h1v2h-1zM83 320h1v6h-1zM83 330h1v10h-1zM83 348h1v8h-1zM83 358h1v6h-1zM83 366h1v2h-1zM83 370h1v4h-1zM83 394h1v11h-1zM84 256h1v2h-1zM84 292h1v2h-1zM84 298h1v2h-1zM84 310h1v2h-1zM84 316h1v2h-1zM84 322h1v2h-1zM84 340h1v8h-1zM84 360h1v4h-1zM85 340h1v2h-1zM87 362h1v2h-1zM88 340h1v2h-1zM88 360h1v2h-1zM89 340h1v2h-1zM90 362h1v2h-1zM91 256h1v2h-1zM91 274h1v6h-1zM91 326h1v8h-1zM91 336h1v4h-1zM91 364h1v20h-1zM91 386h1v2h-1zM92 242h1v2h-1zM92 256h1v4h-1zM92 264h1v4h-1zM92 270h1v2h-1zM92 274h1v2h-1zM92 278h1v6h-1zM92 286h1v2h-1zM92 290h1v4h-1zM92 334h1v6h-1zM92 342h1v8h-1zM92 360h1v2h-1zM92 364h1v2h-1zM92 378h1v2h-1zM92 382h1v4h-1zM92 388h1v4h-1zM92 394h1v2h-1zM92 400h1v5h-1zM93 242h1v2h-1zM93 256h1v4h-1zM93 262h1v2h-1zM93 266h1v2h-1zM93 270h1v2h-1zM93 274h1v2h-1zM93 278h1v6h-1zM93 286h1v2h-1zM93 290h1v4h-1zM93 310h1v2h-1zM93 332h1v4h-1zM93 342h1v4h-1zM93 348h1v2h-1zM93 360h1v2h-1zM93 364h1v2h-1zM93 370h1v4h-1zM93 378h1v2h-1zM93 382h1v10h-1zM93 394h1v4h-1zM93 400h1v2h-1zM94 258h1v2h-1zM94 274h1v8h-1zM94 290h1v2h-1zM94 326h1v2h-1zM94 330h1v4h-1zM94 336h1v4h-1zM94 342h1v2h-1zM94 362h1v16h-1zM94 380h1v2h-1zM94 386h1v2h-1zM95 340h1v2h-1zM95 360h1v4h-1zM97 360h1v4h-1zM98 360h1v2h-1zM99 362h1v2h-1zM100 362h1v2h-1zM102 362h1v2h-1zM103 340h1v2h-1zM104 340h1v2h-1zM105 258h1v2h-1zM105 292h1v2h-1zM105 310h1v2h-1zM105 328h1v6h-1zM105 336h1v4h-1zM105 376h1v2h-1zM105 380h1v2h-1zM106 238h1v2h-1zM106 242h1v2h-1zM106 256h1v8h-1zM106 266h1v2h-1zM106 274h1v8h-1zM106 290h1v6h-1zM106 298h1v4h-1zM106 312h1v2h-1zM106 316h1v2h-1zM106 322h1v2h-1zM106 326h1v2h-1zM106 330h1v2h-1zM106 334h1v6h-1zM106 342h1v6h-1zM106 360h1v4h-1zM106 366h1v4h-1zM106 376h1v12h-1zM106 392h1v2h-1zM107 240h1v6h-1zM107 256h1v12h-1zM107 270h1v2h-1zM107 274h1v6h-1zM107 282h1v2h-1zM107 294h1v2h-1zM107 298h1v4h-1zM107 310h1v4h-1zM107 318h1v2h-1zM107 322h1v2h-1zM107 326h1v2h-1zM107 330h1v10h-1zM107 344h1v2h-1zM107 362h1v2h-1zM107 376h1v6h-1zM107 384h1v10h-1zM108 292h1v2h-1zM108 328h1v6h-1zM108 336h1v2h-1zM108 344h1v2h-1zM108 376h1v2h-1zM109 344h1v2h-1zM110 344h1v2h-1zM111 362h1v2h-1zM117 222h1v4h-1zM117 238h1v2h-1zM117 242h1v10h-1zM117 258h1v2h-1zM117 274h1v6h-1zM117 328h1v6h-1zM117 362h1v2h-1zM117 374h1v4h-1zM117 380h1v2h-1zM118 228h1v2h-1zM118 232h1v2h-1zM118 240h1v8h-1zM118 250h1v2h-1zM118 256h1v4h-1zM118 274h1v6h-1zM118 310h1v2h-1zM118 328h1v6h-1zM118 338h1v2h-1zM118 366h1v2h-1zM118 376h1v2h-1zM119 242h1v4h-1zM120 344h1v2h-1zM121 366h1v2h-1zM133 258h1v2h-1zM133 292h1v2h-1zM133 298h1v2h-1zM133 310h1v2h-1zM133 362h1v2h-1zM133 376h1v2h-1zM133 380h1v2h-1zM133 388h1v2h-1zM134 256h1v2h-1zM134 292h1v2h-1zM134 298h1v2h-1zM134 302h1v2h-1zM134 310h1v2h-1zM134 366h1v4h-1zM134 376h1v2h-1zM134 386h1v2h-1zM165 364h1v2h-1zM166 364h1v2h-1zM167 364h1v2h-1zM168 364h1v2h-1zM188 364h1v2h-1zM189 364h1v2h-1zM190 364h1v2h-1zM191 364h1v2h-1zM235 364h1v2h-1zM236 364h1v2h-1zM237 364h1v2h-1zM238 364h1v2h-1z"/><path fill="#00005f" d="M29 234h1v2h-1zM29 248h1v2h-1zM29 350h1v2h-1zM29 354h1v8h-1zM33 352h1v4h-1zM34 222h1v2h-1zM34 232h1v2h-1zM34 236h1v8h-1zM34 246h1v2h-1zM34 252h1v2h-1zM34 272h1v2h-1zM34 286h1v2h-1zM34 290h1v2h-1zM34 296h1v2h-1zM34 300h1v2h-1zM34 308h1v2h-1zM34 314h1v8h-1zM34 324h1v2h-1zM34 352h1v2h-1zM34 398h1v2h-1zM34 404h1v1h-1zM39 320h1v2h-1zM40 222h1v2h-1zM40 226h1v2h-1zM40 230h1v2h-1zM40 234h1v2h-1zM40 248h1v8h-1zM40 272h1v2h-1zM40 282h1v10h-1zM40 296h1v2h-1zM40 306h1v2h-1zM40 310h1v2h-1zM40 316h1v2h-1zM40 356h1v2h-1zM40 364h1v2h-1zM40 374h1v2h-1zM41 234h1v4h-1zM41 240h1v2h-1zM41 250h1v8h-1zM41 264h1v2h-1zM41 272h1v2h-1zM41 276h1v4h-1zM41 286h1v2h-1zM41 290h1v6h-1zM41 306h1v2h-1zM41 310h1v8h-1zM41 322h1v2h-1zM41 330h1v4h-1zM41 350h1v6h-1zM41 360h1v2h-1zM41 366h1v2h-1zM41 370h1v2h-1zM41 374h1v6h-1zM41 386h1v4h-1zM41 396h1v4h-1zM41 402h1v2h-1zM42 222h1v6h-1zM42 230h1v4h-1zM42 236h1v4h-1zM42 242h1v6h-1zM42 254h1v2h-1zM42 258h1v2h-1zM42 262h1v10h-1zM42 280h1v2h-1zM42 288h1v2h-1zM42 292h1v8h-1zM42 304h1v8h-1zM42 316h1v12h-1zM42 332h1v4h-1zM42 344h1v2h-1zM42 348h1v6h-1zM42 358h1v6h-1zM42 368h1v6h-1zM42 378h1v8h-1zM42 390h1v2h-1zM42 394h1v2h-1zM42 400h1v2h-1zM43 222h1v2h-1zM43 226h1v2h-1zM43 230h1v4h-1zM43 238h1v2h-1zM43 242h1v2h-1zM43 246h1v2h-1zM43 256h1v8h-1zM43 266h1v6h-1zM43 274h1v4h-1zM43 280h1v2h-1zM43 290h1v4h-1zM43 300h1v2h-1zM43 304h1v2h-1zM43 314h1v2h-1zM43 318h1v2h-1zM43 322h1v4h-1zM43 338h1v4h-1zM43 346h1v2h-1zM43 350h1v4h-1zM43 364h1v2h-1zM43 372h1v4h-1zM43 378h1v2h-1zM43 396h1v2h-1zM43 400h1v2h-1zM44 284h1v2h-1zM44 288h1v2h-1zM44 306h1v4h-1zM49 226h1v6h-1zM49 234h1v2h-1zM49 238h1v4h-1zM49 246h1v4h-1zM49 252h1v4h-1zM49 260h1v6h-1zM49 278h1v2h-1zM49 296h1v2h-1zM49 306h1v2h-1zM49 312h1v4h-1zM49 320h1v6h-1zM49 330h1v4h-1zM49 338h1v4h-1zM49 352h1v2h-1zM49 368h1v2h-1zM49 372h1v2h-1zM49 378h1v2h-1zM49 388h1v4h-1zM49 396h1v2h-1zM49 402h1v2h-1zM50 222h1v10h-1zM50 234h1v4h-1zM50 240h1v2h-1zM50 246h1v4h-1zM50 252h1v4h-1zM50 260h1v2h-1zM50 264h1v8h-1zM50 284h1v8h-1zM50 300h1v2h-1zM50 304h1v6h-1zM50 324h1v2h-1zM50 328h1v4h-1zM50 342h1v2h-1zM50 346h1v2h-1zM50 354h1v2h-1zM50 376h1v4h-1zM50 386h1v4h-1zM50 396h1v9h-1zM51 222h1v2h-1zM51 226h1v4h-1zM51 252h1v2h-1zM51 260h1v6h-1zM51 268h1v4h-1zM51 308h1v8h-1zM51 322h1v2h-1zM51 330h1v4h-1zM51 336h1v8h-1zM51 346h1v2h-1zM51 382h1v10h-1zM51 398h1v2h-1zM52 222h1v10h-1zM52 234h1v4h-1zM52 248h1v2h-1zM52 252h1v6h-1zM52 260h1v2h-1zM52 266h1v2h-1zM52 280h1v6h-1zM52 288h1v2h-1zM52 296h1v2h-1zM52 304h1v6h-1zM52 342h1v2h-1zM52 376h1v8h-1zM52 386h1v2h-1zM52 396h1v4h-1zM52 402h1v2h-1zM53 292h1v2h-1zM53 392h1v2h-1zM54 238h1v10h-1zM54 250h1v2h-1zM54 256h1v4h-1zM54 292h1v4h-1zM54 298h1v6h-1zM54 322h1v2h-1zM54 326h1v2h-1zM54 334h1v4h-1zM54 340h1v2h-1zM54 344h1v4h-1zM54 366h1v4h-1zM54 372h1v2h-1zM54 378h1v8h-1zM54 388h1v4h-1zM54 398h1v2h-1zM55 222h1v12h-1zM55 236h1v4h-1zM55 246h1v4h-1zM55 252h1v4h-1zM55 260h1v4h-1zM55 266h1v2h-1zM55 270h1v2h-1zM55 276h1v2h-1zM55 280h1v2h-1zM55 290h1v2h-1zM55 294h1v2h-1zM55 304h1v6h-1zM55 316h1v6h-1zM55 324h1v2h-1zM55 352h1v6h-1zM55 360h1v2h-1zM55 382h1v2h-1zM56 222h1v2h-1zM56 226h1v2h-1zM56 232h1v8h-1zM56 246h1v4h-1zM56 262h1v2h-1zM56 266h1v6h-1zM56 274h1v2h-1zM56 280h1v2h-1zM56 286h1v2h-1zM56 290h1v2h-1zM56 302h1v8h-1zM56 316h1v4h-1zM56 324h1v2h-1zM56 350h1v2h-1zM56 354h1v6h-1zM57 242h1v6h-1zM57 250h1v2h-1zM57 256h1v2h-1zM57 276h1v2h-1zM57 298h1v6h-1zM57 312h1v2h-1zM57 316h1v2h-1zM57 322h1v2h-1zM57 326h1v2h-1zM57 334h1v14h-1zM57 358h1v2h-1zM57 364h1v2h-1zM57 378h1v2h-1zM57 382h1v10h-1zM57 396h1v4h-1zM57 402h1v2h-1zM58 392h1v2h-1zM61 344h1v2h-1zM62 256h1v2h-1zM62 276h1v4h-1zM62 292h1v2h-1zM62 362h1v2h-1zM63 260h1v6h-1zM63 268h1v6h-1zM63 280h1v8h-1zM63 290h1v2h-1zM63 294h1v4h-1zM63 302h1v4h-1zM63 308h1v8h-1zM63 322h1v2h-1zM63 330h1v4h-1zM63 336h1v4h-1zM63 344h1v2h-1zM63 364h1v2h-1zM63 368h1v4h-1zM63 374h1v8h-1zM63 384h1v4h-1zM63 392h1v2h-1zM64 260h1v6h-1zM64 268h1v2h-1zM64 272h1v2h-1zM64 284h1v6h-1zM64 296h1v2h-1zM64 304h1v6h-1zM64 312h1v12h-1zM64 334h1v4h-1zM64 344h1v4h-1zM64 378h1v2h-1zM64 382h1v2h-1zM64 388h1v2h-1zM64 394h1v2h-1zM64 400h1v4h-1zM65 260h1v10h-1zM65 272h1v2h-1zM65 280h1v4h-1zM65 288h1v4h-1zM65 296h1v4h-1zM65 304h1v6h-1zM65 312h1v8h-1zM65 322h1v2h-1zM65 326h1v2h-1zM65 332h1v8h-1zM65 344h1v2h-1zM65 364h1v6h-1zM65 372h1v4h-1zM65 380h1v2h-1zM65 386h1v2h-1zM65 390h1v4h-1zM66 256h1v2h-1zM66 274h1v6h-1zM66 292h1v2h-1zM66 328h1v2h-1zM66 366h1v2h-1zM71 256h1v4h-1zM71 380h1v2h-1zM72 222h1v2h-1zM72 230h1v4h-1zM72 238h1v6h-1zM72 246h1v6h-1zM72 254h1v2h-1zM72 260h1v6h-1zM72 268h1v2h-1zM72 272h1v2h-1zM72 294h1v10h-1zM72 310h1v2h-1zM72 344h1v2h-1zM72 364h1v16h-1zM72 382h1v8h-1zM73 222h1v4h-1zM73 228h1v6h-1zM73 236h1v2h-1zM73 240h1v2h-1zM73 248h1v4h-1zM73 260h1v2h-1zM73 268h1v2h-1zM73 272h1v2h-1zM73 296h1v4h-1zM73 306h1v4h-1zM73 322h1v2h-1zM73 364h1v2h-1zM73 368h1v2h-1zM73 374h1v2h-1zM73 382h1v10h-1zM74 242h1v10h-1zM74 256h1v2h-1zM74 262h1v6h-1zM74 294h1v6h-1zM74 302h1v4h-1zM74 310h1v2h-1zM74 364h1v8h-1zM74 374h1v2h-1zM74 378h1v12h-1zM80 292h1v2h-1zM80 310h1v2h-1zM81 256h1v4h-1zM81 266h1v2h-1zM81 270h1v2h-1zM81 296h1v2h-1zM81 300h1v4h-1zM81 312h1v8h-1zM81 322h1v2h-1zM81 328h1v2h-1zM81 332h1v2h-1zM81 340h1v2h-1zM81 344h1v6h-1zM81 394h1v2h-1zM81 400h1v2h-1zM82 256h1v6h-1zM82 266h1v6h-1zM82 294h1v4h-1zM82 300h1v6h-1zM82 312h1v12h-1zM82 328h1v6h-1zM82 340h1v2h-1zM82 348h1v6h-1zM82 358h1v6h-1zM82 366h1v2h-1zM82 394h1v4h-1zM82 400h1v2h-1zM83 258h1v2h-1zM83 292h1v2h-1zM83 298h1v4h-1zM83 314h1v2h-1zM83 318h1v2h-1zM83 328h1v2h-1zM83 340h1v8h-1zM83 392h1v2h-1zM91 362h1v2h-1zM92 276h1v2h-1zM92 326h1v8h-1zM92 366h1v10h-1zM92 380h1v2h-1zM92 386h1v2h-1zM92 392h1v2h-1zM93 276h1v2h-1zM93 326h1v6h-1zM93 336h1v4h-1zM93 362h1v2h-1zM93 366h1v4h-1zM93 374h1v4h-1zM93 380h1v2h-1zM93 392h1v2h-1zM94 328h1v2h-1zM106 310h1v2h-1zM106 328h1v2h-1zM106 332h1v2h-1zM107 292h1v2h-1zM107 328h1v2h-1zM118 342h1v2h-1zM118 364h1v2h-1zM119 342h1v2h-1zM119 364h1v2h-1zM120 342h1v2h-1zM121 342h1v2h-1zM121 364h1v2h-1zM235 362h1v2h-1zM238 362h1v2h-1z"/><path fill="#00058a" d="M29 222h1v2h-1zM29 232h1v2h-1zM29 236h1v4h-1zM29 252h1v4h-1zM29 272h1v2h-1zM29 280h1v4h-1zM29 288h1v4h-1zM29 304h1v2h-1zM29 308h1v2h-1zM29 324h1v4h-1zM29 334h1v6h-1zM29 346h1v4h-1zM29 352h1v2h-1zM29 384h1v2h-1zM29 388h1v2h-1zM29 398h1v2h-1zM30 358h1v4h-1zM31 356h1v2h-1zM32 350h1v6h-1zM32 360h1v2h-1zM33 222h1v2h-1zM33 234h1v6h-1zM33 246h1v4h-1zM33 252h1v4h-1zM33 284h1v8h-1zM33 326h1v2h-1zM33 332h1v4h-1zM33 344h1v2h-1zM33 348h1v4h-1zM33 356h1v6h-1zM33 384h1v8h-1zM33 396h1v2h-1zM33 402h1v2h-1zM34 224h1v8h-1zM34 234h1v2h-1zM34 244h1v2h-1zM34 248h1v4h-1zM34 254h1v2h-1zM34 260h1v2h-1zM34 264h1v8h-1zM34 274h1v6h-1zM34 282h1v4h-1zM34 288h1v2h-1zM34 294h1v2h-1zM34 304h1v4h-1zM34 322h1v2h-1zM34 326h1v2h-1zM34 330h1v2h-1zM34 334h1v2h-1zM34 338h1v4h-1zM34 350h1v2h-1zM34 354h1v8h-1zM34 364h1v2h-1zM34 368h1v8h-1zM34 378h1v2h-1zM34 382h1v10h-1zM34 396h1v2h-1zM34 402h1v2h-1zM35 224h1v2h-1zM35 228h1v4h-1zM35 234h1v2h-1zM35 248h1v2h-1zM35 252h1v2h-1zM35 312h1v10h-1zM35 324h1v2h-1zM37 324h1v2h-1zM39 222h1v4h-1zM39 228h1v10h-1zM39 284h1v2h-1zM39 312h1v2h-1zM39 316h1v4h-1zM39 322h1v4h-1zM40 224h1v2h-1zM40 228h1v2h-1zM40 232h1v2h-1zM40 236h1v6h-1zM40 244h1v4h-1zM40 260h1v6h-1zM40 268h1v2h-1zM40 274h1v8h-1zM40 298h1v8h-1zM40 308h1v2h-1zM40 314h1v2h-1zM40 318h1v2h-1zM40 322h1v2h-1zM40 326h1v2h-1zM40 330h1v10h-1zM40 348h1v8h-1zM40 358h1v4h-1zM40 366h1v8h-1zM40 378h1v2h-1zM40 382h1v10h-1zM40 394h1v6h-1zM40 402h1v3h-1zM41 226h1v8h-1zM41 238h1v2h-1zM41 242h1v6h-1zM41 258h1v2h-1zM41 262h1v2h-1zM41 266h1v6h-1zM41 274h1v2h-1zM41 280h1v6h-1zM41 296h1v2h-1zM41 304h1v2h-1zM41 318h1v4h-1zM41 324h1v6h-1zM41 334h1v6h-1zM41 346h1v4h-1zM41 356h1v4h-1zM41 362h1v4h-1zM41 368h1v2h-1zM41 372h1v2h-1zM41 382h1v4h-1zM41 392h1v4h-1zM41 400h1v2h-1zM41 404h1v1h-1zM42 234h1v2h-1zM42 240h1v2h-1zM42 248h1v6h-1zM42 260h1v2h-1zM42 272h1v8h-1zM42 282h1v2h-1zM42 286h1v2h-1zM42 290h1v2h-1zM42 300h1v2h-1zM42 312h1v4h-1zM42 328h1v4h-1zM42 336h1v8h-1zM42 346h1v2h-1zM42 354h1v2h-1zM42 364h1v4h-1zM42 374h1v2h-1zM42 386h1v4h-1zM42 392h1v2h-1zM42 402h1v2h-1zM43 224h1v2h-1zM43 228h1v2h-1zM43 234h1v4h-1zM43 240h1v2h-1zM43 244h1v2h-1zM43 250h1v2h-1zM43 264h1v2h-1zM43 278h1v2h-1zM43 282h1v8h-1zM43 298h1v2h-1zM43 302h1v2h-1zM43 308h1v2h-1zM43 312h1v2h-1zM43 316h1v2h-1zM43 320h1v2h-1zM43 326h1v6h-1zM43 334h1v4h-1zM43 344h1v2h-1zM43 348h1v2h-1zM43 354h1v10h-1zM43 366h1v6h-1zM43 376h1v2h-1zM43 380h1v6h-1zM43 388h1v8h-1zM43 398h1v2h-1zM43 402h1v3h-1zM44 236h1v2h-1zM44 268h1v2h-1zM44 282h1v2h-1zM44 286h1v2h-1zM44 294h1v4h-1zM44 302h1v4h-1zM44 324h1v2h-1zM44 350h1v2h-1zM44 354h1v4h-1zM44 360h1v2h-1zM47 306h1v2h-1zM48 226h1v2h-1zM48 230h1v2h-1zM48 252h1v4h-1zM48 268h1v2h-1zM48 282h1v10h-1zM48 294h1v4h-1zM48 300h1v10h-1zM48 324h1v2h-1zM48 356h1v2h-1zM49 222h1v4h-1zM49 232h1v2h-1zM49 236h1v2h-1zM49 242h1v4h-1zM49 250h1v2h-1zM49 258h1v2h-1zM49 266h1v12h-1zM49 280h1v4h-1zM49 286h1v4h-1zM49 292h1v4h-1zM49 298h1v2h-1zM49 308h1v4h-1zM49 316h1v4h-1zM49 326h1v4h-1zM49 336h1v2h-1zM49 342h1v10h-1zM49 354h1v2h-1zM49 366h1v2h-1zM49 370h1v2h-1zM49 374h1v4h-1zM49 380h1v8h-1zM49 392h1v4h-1zM49 398h1v4h-1zM49 404h1v1h-1zM50 232h1v2h-1zM50 238h1v2h-1zM50 250h1v2h-1zM50 256h1v4h-1zM50 274h1v10h-1zM50 294h1v6h-1zM50 302h1v2h-1zM50 372h1v2h-1zM50 380h1v2h-1zM50 394h1v2h-1zM51 224h1v2h-1zM51 230h1v2h-1zM51 234h1v4h-1zM51 246h1v6h-1zM51 254h1v4h-1zM51 266h1v2h-1zM51 280h1v4h-1zM51 288h1v4h-1zM51 304h1v4h-1zM51 328h1v2h-1zM51 344h1v2h-1zM51 378h1v4h-1zM51 400h1v5h-1zM52 232h1v2h-1zM52 238h1v10h-1zM52 250h1v2h-1zM52 258h1v2h-1zM52 286h1v2h-1zM52 290h1v2h-1zM52 294h1v2h-1zM52 300h1v2h-1zM52 372h1v4h-1zM52 394h1v2h-1zM52 400h1v2h-1zM52 404h1v1h-1zM54 310h1v2h-1zM54 328h1v6h-1zM54 338h1v2h-1zM54 342h1v2h-1zM54 370h1v2h-1zM54 374h1v4h-1zM54 386h1v2h-1zM54 394h1v4h-1zM54 400h1v5h-1zM55 240h1v6h-1zM55 250h1v2h-1zM55 256h1v4h-1zM55 274h1v2h-1zM55 278h1v2h-1zM55 296h1v2h-1zM55 300h1v4h-1zM55 312h1v4h-1zM55 322h1v2h-1zM55 326h1v2h-1zM55 334h1v2h-1zM55 340h1v2h-1zM55 346h1v6h-1zM55 358h1v2h-1zM55 364h1v2h-1zM55 378h1v2h-1zM55 384h1v8h-1zM55 402h1v3h-1zM56 240h1v4h-1zM56 250h1v2h-1zM56 256h1v4h-1zM56 276h1v4h-1zM56 294h1v8h-1zM56 312h1v4h-1zM56 320h1v4h-1zM56 334h1v4h-1zM56 344h1v2h-1zM56 348h1v2h-1zM56 352h1v2h-1zM56 364h1v2h-1zM56 372h1v4h-1zM56 382h1v4h-1zM56 390h1v2h-1zM56 398h1v2h-1zM56 402h1v3h-1zM57 292h1v2h-1zM57 310h1v2h-1zM57 330h1v4h-1zM57 368h1v10h-1zM57 380h1v2h-1zM57 400h1v2h-1zM57 404h1v1h-1zM62 342h1v2h-1zM63 256h1v2h-1zM63 266h1v2h-1zM63 274h1v2h-1zM63 298h1v4h-1zM63 328h1v2h-1zM63 342h1v2h-1zM63 362h1v2h-1zM63 366h1v2h-1zM63 372h1v2h-1zM64 256h1v2h-1zM64 270h1v2h-1zM64 282h1v2h-1zM64 294h1v2h-1zM64 300h1v4h-1zM64 326h1v2h-1zM64 332h1v2h-1zM64 338h1v2h-1zM64 342h1v2h-1zM64 364h1v2h-1zM64 368h1v8h-1zM64 380h1v2h-1zM64 386h1v2h-1zM64 392h1v2h-1zM65 256h1v4h-1zM65 270h1v2h-1zM65 276h1v4h-1zM65 286h1v2h-1zM65 294h1v2h-1zM65 300h1v4h-1zM65 310h1v2h-1zM65 328h1v4h-1zM65 362h1v2h-1zM65 370h1v2h-1zM65 376h1v2h-1zM72 244h1v2h-1zM72 256h1v2h-1zM72 266h1v2h-1zM72 270h1v2h-1zM72 292h1v2h-1zM72 380h1v2h-1zM73 238h1v2h-1zM73 242h1v6h-1zM73 262h1v4h-1zM73 270h1v2h-1zM73 294h1v2h-1zM73 300h1v4h-1zM73 310h1v2h-1zM73 342h1v2h-1zM73 366h1v2h-1zM73 370h1v4h-1zM73 376h1v6h-1zM74 270h1v2h-1zM74 292h1v2h-1zM74 342h1v2h-1zM74 376h1v2h-1zM81 292h1v2h-1zM81 298h1v2h-1zM81 310h1v2h-1zM81 342h1v2h-1zM81 392h1v2h-1zM82 298h1v2h-1zM82 310h1v2h-1zM82 342h1v6h-1zM82 392h1v2h-1zM83 310h1v2h-1zM92 362h1v2h-1zM92 376h1v2h-1zM107 342h1v2h-1zM109 342h1v2h-1zM120 364h1v2h-1zM165 362h1v2h-1zM166 362h1v2h-1zM189 362h1v2h-1zM190 362h1v2h-1zM191 362h1v2h-1zM236 362h1v2h-1zM237 362h1v2h-1z"/><path fill="#000bb5" d="M29 230h1v2h-1zM29 240h1v8h-1zM29 250h1v2h-1zM29 262h1v4h-1zM29 284h1v2h-1zM29 300h1v2h-1zM29 306h1v2h-1zM29 328h1v4h-1zM29 340h1v4h-1zM29 378h1v2h-1zM29 382h1v2h-1zM29 386h1v2h-1zM29 390h1v2h-1zM29 400h1v4h-1zM30 234h1v2h-1zM30 248h1v2h-1zM30 284h1v2h-1zM30 326h1v2h-1zM30 348h1v10h-1zM30 382h1v2h-1zM31 252h1v2h-1zM31 352h1v2h-1zM31 358h1v4h-1zM32 222h1v2h-1zM32 234h1v2h-1zM32 252h1v4h-1zM32 284h1v2h-1zM32 356h1v2h-1zM33 230h1v4h-1zM33 240h1v2h-1zM33 260h1v6h-1zM33 272h1v2h-1zM33 280h1v4h-1zM33 300h1v2h-1zM33 304h1v6h-1zM33 318h1v4h-1zM33 324h1v2h-1zM33 336h1v6h-1zM33 346h1v2h-1zM33 378h1v2h-1zM33 382h1v2h-1zM33 398h1v4h-1zM33 404h1v1h-1zM34 262h1v2h-1zM34 280h1v2h-1zM34 298h1v2h-1zM34 302h1v2h-1zM34 332h1v2h-1zM34 336h1v2h-1zM34 344h1v6h-1zM34 366h1v2h-1zM34 380h1v2h-1zM34 394h1v2h-1zM34 400h1v2h-1zM35 226h1v2h-1zM35 232h1v2h-1zM35 236h1v6h-1zM35 246h1v2h-1zM35 254h1v2h-1zM35 272h1v2h-1zM35 280h1v2h-1zM35 284h1v2h-1zM35 288h1v2h-1zM35 306h1v4h-1zM35 322h1v2h-1zM35 372h1v4h-1zM35 382h1v4h-1zM35 390h1v2h-1zM35 398h1v2h-1zM36 226h1v2h-1zM36 234h1v2h-1zM36 312h1v4h-1zM36 318h1v2h-1zM36 324h1v2h-1zM37 312h1v2h-1zM38 284h1v2h-1zM38 288h1v2h-1zM38 312h1v14h-1zM39 226h1v2h-1zM39 238h1v2h-1zM39 248h1v8h-1zM39 272h1v2h-1zM39 280h1v4h-1zM39 288h1v2h-1zM39 306h1v4h-1zM39 314h1v2h-1zM39 334h1v2h-1zM39 356h1v2h-1zM39 388h1v4h-1zM39 398h1v2h-1zM40 242h1v2h-1zM40 256h1v4h-1zM40 266h1v2h-1zM40 270h1v2h-1zM40 292h1v4h-1zM40 320h1v2h-1zM40 324h1v2h-1zM40 346h1v2h-1zM40 376h1v2h-1zM40 380h1v2h-1zM40 400h1v2h-1zM41 224h1v2h-1zM41 260h1v2h-1zM41 298h1v4h-1zM41 308h1v2h-1zM42 302h1v2h-1zM43 248h1v2h-1zM43 254h1v2h-1zM43 294h1v2h-1zM43 306h1v2h-1zM43 310h1v2h-1zM43 332h1v2h-1zM43 342h1v2h-1zM43 386h1v2h-1zM44 222h1v14h-1zM44 248h1v8h-1zM44 260h1v6h-1zM44 272h1v2h-1zM44 278h1v4h-1zM44 290h1v2h-1zM44 300h1v2h-1zM44 326h1v2h-1zM44 334h1v6h-1zM44 348h1v2h-1zM44 352h1v2h-1zM44 358h1v2h-1zM44 364h1v2h-1zM44 378h1v2h-1zM44 382h1v10h-1zM44 398h1v2h-1zM45 288h1v2h-1zM45 294h1v2h-1zM45 304h1v6h-1zM46 308h1v2h-1zM47 272h1v2h-1zM47 304h1v2h-1zM47 308h1v2h-1zM47 356h1v2h-1zM48 222h1v4h-1zM48 228h1v2h-1zM48 232h1v10h-1zM48 246h1v2h-1zM48 250h1v2h-1zM48 260h1v6h-1zM48 272h1v4h-1zM48 280h1v2h-1zM48 298h1v2h-1zM48 312h1v4h-1zM48 318h1v2h-1zM48 326h1v2h-1zM48 334h1v2h-1zM48 338h1v2h-1zM48 348h1v8h-1zM48 360h1v2h-1zM48 382h1v2h-1zM48 388h1v4h-1zM49 256h1v2h-1zM49 334h1v2h-1zM49 360h1v2h-1zM50 242h1v4h-1zM50 368h1v4h-1zM50 374h1v2h-1zM50 392h1v2h-1zM51 232h1v2h-1zM51 238h1v2h-1zM51 258h1v2h-1zM51 278h1v2h-1zM51 284h1v4h-1zM51 294h1v4h-1zM51 302h1v2h-1zM51 370h1v2h-1zM51 374h1v4h-1zM51 396h1v2h-1zM52 274h1v6h-1zM52 298h1v2h-1zM52 302h1v2h-1zM52 368h1v4h-1zM52 392h1v2h-1zM54 392h1v2h-1zM55 292h1v2h-1zM55 298h1v2h-1zM55 310h1v2h-1zM55 344h1v2h-1zM55 366h1v10h-1zM55 380h1v2h-1zM55 394h1v2h-1zM55 398h1v4h-1zM56 244h1v2h-1zM56 310h1v2h-1zM56 326h1v2h-1zM56 338h1v6h-1zM56 346h1v2h-1zM56 366h1v6h-1zM56 376h1v6h-1zM56 386h1v4h-1zM56 396h1v2h-1zM56 400h1v2h-1zM57 328h1v2h-1zM57 362h1v2h-1zM57 366h1v2h-1zM57 392h1v4h-1zM61 342h1v2h-1zM63 258h1v2h-1zM63 276h1v4h-1zM63 292h1v2h-1zM64 266h1v2h-1zM64 276h1v2h-1zM64 280h1v2h-1zM64 290h1v2h-1zM64 298h1v2h-1zM64 310h1v2h-1zM64 328h1v4h-1zM64 366h1v2h-1zM64 376h1v2h-1zM65 274h1v2h-1zM65 292h1v2h-1zM72 258h1v2h-1zM72 342h1v2h-1zM73 256h1v4h-1zM73 266h1v2h-1zM73 292h1v2h-1zM74 258h1v2h-1zM82 292h1v2h-1zM108 342h1v2h-1zM110 342h1v2h-1zM119 362h1v2h-1zM168 362h1v2h-1zM188 362h1v2h-1zM235 360h1v2h-1zM236 360h1v2h-1zM238 360h1v2h-1z"/><path fill="#0010e0" d="M29 228h1v2h-1zM29 260h1v2h-1zM29 268h1v4h-1zM29 274h1v2h-1zM29 286h1v2h-1zM29 296h1v4h-1zM29 318h1v4h-1zM29 332h1v2h-1zM29 344h1v2h-1zM29 370h1v2h-1zM29 380h1v2h-1zM29 394h1v4h-1zM29 404h1v1h-1zM30 236h1v2h-1zM30 252h1v4h-1zM30 282h1v2h-1zM30 288h1v2h-1zM30 306h1v4h-1zM30 324h1v2h-1zM30 336h1v2h-1zM30 346h1v2h-1zM30 378h1v2h-1zM30 388h1v2h-1zM31 222h1v2h-1zM31 234h1v4h-1zM31 272h1v2h-1zM31 324h1v4h-1zM31 334h1v2h-1zM31 350h1v2h-1zM31 354h1v2h-1zM31 384h1v2h-1zM31 388h1v2h-1zM31 398h1v2h-1zM32 236h1v2h-1zM32 282h1v2h-1zM32 288h1v2h-1zM32 306h1v4h-1zM32 324h1v4h-1zM32 334h1v2h-1zM32 340h1v2h-1zM32 346h1v2h-1zM32 358h1v2h-1zM32 384h1v4h-1zM32 390h1v2h-1zM32 398h1v2h-1zM33 228h1v2h-1zM33 242h1v4h-1zM33 250h1v2h-1zM33 266h1v4h-1zM33 276h1v2h-1zM33 294h1v4h-1zM33 302h1v2h-1zM33 314h1v4h-1zM33 328h1v4h-1zM33 342h1v2h-1zM33 364h1v2h-1zM33 380h1v2h-1zM33 392h1v4h-1zM34 256h1v4h-1zM34 292h1v2h-1zM34 328h1v2h-1zM34 362h1v2h-1zM34 376h1v2h-1zM34 392h1v2h-1zM35 222h1v2h-1zM35 260h1v2h-1zM35 278h1v2h-1zM35 282h1v2h-1zM35 286h1v2h-1zM35 290h1v2h-1zM35 294h1v4h-1zM35 302h1v4h-1zM35 310h1v2h-1zM35 334h1v2h-1zM35 350h1v4h-1zM35 356h1v2h-1zM35 360h1v2h-1zM35 364h1v2h-1zM35 402h1v2h-1zM36 224h1v2h-1zM36 232h1v2h-1zM36 252h1v2h-1zM36 284h1v6h-1zM36 308h1v2h-1zM36 316h1v2h-1zM36 320h1v2h-1zM36 364h1v2h-1zM37 228h1v2h-1zM37 234h1v2h-1zM37 248h1v2h-1zM37 252h1v2h-1zM37 306h1v2h-1zM37 314h1v10h-1zM38 222h1v4h-1zM38 228h1v2h-1zM38 248h1v2h-1zM38 254h1v2h-1zM38 306h1v2h-1zM39 240h1v2h-1zM39 246h1v2h-1zM39 262h1v4h-1zM39 286h1v2h-1zM39 290h1v2h-1zM39 304h1v2h-1zM39 326h1v2h-1zM39 350h1v6h-1zM39 358h1v2h-1zM39 364h1v2h-1zM39 370h1v2h-1zM39 382h1v2h-1zM39 396h1v2h-1zM40 328h1v2h-1zM40 362h1v2h-1zM40 392h1v2h-1zM41 344h1v2h-1zM44 238h1v2h-1zM44 246h1v2h-1zM44 266h1v2h-1zM44 270h1v2h-1zM44 274h1v2h-1zM44 292h1v2h-1zM44 298h1v2h-1zM44 316h1v6h-1zM44 328h1v2h-1zM44 344h1v2h-1zM44 396h1v2h-1zM44 402h1v3h-1zM45 224h1v2h-1zM45 236h1v2h-1zM45 254h1v2h-1zM45 264h1v2h-1zM45 272h1v2h-1zM45 282h1v4h-1zM45 290h1v2h-1zM45 296h1v2h-1zM45 334h1v2h-1zM46 284h1v2h-1zM46 288h1v2h-1zM46 306h1v2h-1zM47 248h1v2h-1zM47 254h1v2h-1zM47 264h1v2h-1zM47 280h1v2h-1zM47 284h1v2h-1zM47 288h1v2h-1zM47 296h1v2h-1zM47 300h1v4h-1zM47 324h1v2h-1zM48 244h1v2h-1zM48 248h1v2h-1zM48 258h1v2h-1zM48 266h1v2h-1zM48 270h1v2h-1zM48 292h1v2h-1zM48 316h1v2h-1zM48 320h1v4h-1zM48 330h1v2h-1zM48 336h1v2h-1zM48 340h1v2h-1zM48 344h1v4h-1zM48 358h1v2h-1zM48 364h1v2h-1zM48 372h1v4h-1zM48 378h1v2h-1zM48 384h1v4h-1zM48 396h1v2h-1zM48 402h1v2h-1zM50 292h1v2h-1zM50 366h1v2h-1zM51 240h1v6h-1zM51 276h1v2h-1zM51 298h1v4h-1zM51 368h1v2h-1zM51 372h1v2h-1zM51 392h1v4h-1zM52 292h1v2h-1zM53 366h1v2h-1zM55 330h1v4h-1zM55 336h1v4h-1zM55 342h1v2h-1zM55 376h1v2h-1zM55 396h1v2h-1zM56 292h1v2h-1zM56 330h1v4h-1zM64 258h1v2h-1zM64 274h1v2h-1zM64 278h1v2h-1zM64 292h1v2h-1zM64 362h1v2h-1zM72 362h1v2h-1zM73 362h1v2h-1zM118 340h1v2h-1zM118 362h1v2h-1zM119 340h1v2h-1zM120 340h1v2h-1zM121 340h1v2h-1zM167 362h1v2h-1zM168 360h1v2h-1zM188 360h1v2h-1zM189 360h1v2h-1zM191 360h1v2h-1zM237 360h1v2h-1z"/><path fill="#0022ff" d="M29 224h1v4h-1zM29 256h1v4h-1zM29 266h1v2h-1zM29 276h1v4h-1zM29 294h1v2h-1zM29 302h1v2h-1zM29 310h1v8h-1zM29 322h1v2h-1zM29 364h1v2h-1zM29 368h1v2h-1zM29 372h1v6h-1zM29 392h1v2h-1zM30 222h1v2h-1zM30 232h1v2h-1zM30 238h1v6h-1zM30 246h1v2h-1zM30 250h1v2h-1zM30 262h1v4h-1zM30 268h1v2h-1zM30 272h1v2h-1zM30 290h1v2h-1zM30 318h1v4h-1zM30 330h1v2h-1zM30 334h1v2h-1zM30 338h1v4h-1zM30 380h1v2h-1zM30 384h1v4h-1zM30 390h1v2h-1zM30 396h1v9h-1zM31 238h1v2h-1zM31 246h1v2h-1zM31 250h1v2h-1zM31 254h1v2h-1zM31 280h1v2h-1zM31 288h1v4h-1zM31 306h1v4h-1zM31 340h1v2h-1zM31 348h1v2h-1zM31 382h1v2h-1zM31 390h1v2h-1zM32 232h1v2h-1zM32 240h1v2h-1zM32 246h1v6h-1zM32 260h1v4h-1zM32 268h1v2h-1zM32 272h1v2h-1zM32 280h1v2h-1zM32 304h1v2h-1zM32 338h1v2h-1zM32 344h1v2h-1zM32 348h1v2h-1zM32 378h1v6h-1zM32 388h1v2h-1zM32 402h1v2h-1zM33 224h1v4h-1zM33 270h1v2h-1zM33 274h1v2h-1zM33 278h1v2h-1zM33 298h1v2h-1zM33 322h1v2h-1zM33 374h1v4h-1zM34 342h1v2h-1zM35 242h1v4h-1zM35 250h1v2h-1zM35 264h1v6h-1zM35 326h1v2h-1zM35 354h1v2h-1zM35 358h1v2h-1zM35 366h1v6h-1zM35 378h1v2h-1zM35 388h1v2h-1zM35 394h1v4h-1zM36 222h1v2h-1zM36 228h1v4h-1zM36 236h1v6h-1zM36 248h1v2h-1zM36 254h1v2h-1zM36 282h1v2h-1zM36 306h1v2h-1zM36 322h1v2h-1zM36 356h1v2h-1zM37 226h1v2h-1zM37 236h1v2h-1zM37 254h1v2h-1zM37 272h1v2h-1zM37 304h1v2h-1zM37 356h1v2h-1zM38 226h1v2h-1zM38 230h1v8h-1zM38 252h1v2h-1zM38 282h1v2h-1zM38 286h1v2h-1zM38 290h1v2h-1zM38 356h1v2h-1zM38 364h1v2h-1zM39 266h1v2h-1zM39 278h1v2h-1zM39 296h1v2h-1zM39 300h1v4h-1zM39 310h1v2h-1zM39 336h1v4h-1zM39 346h1v2h-1zM39 360h1v2h-1zM39 366h1v4h-1zM39 372h1v4h-1zM39 378h1v2h-1zM39 402h1v3h-1zM44 240h1v2h-1zM44 244h1v2h-1zM44 276h1v2h-1zM44 312h1v4h-1zM44 322h1v2h-1zM44 330h1v4h-1zM44 340h1v4h-1zM44 346h1v2h-1zM44 366h1v8h-1zM44 376h1v2h-1zM44 380h1v2h-1zM44 394h1v2h-1zM44 400h1v2h-1zM45 222h1v2h-1zM45 226h1v2h-1zM45 232h1v4h-1zM45 246h1v4h-1zM45 268h1v2h-1zM45 280h1v2h-1zM45 300h1v2h-1zM45 324h1v2h-1zM45 348h1v4h-1zM45 354h1v6h-1zM46 226h1v2h-1zM46 230h1v2h-1zM46 290h1v2h-1zM46 294h1v4h-1zM46 304h1v2h-1zM46 352h1v2h-1zM46 356h1v2h-1zM47 230h1v8h-1zM47 260h1v2h-1zM47 282h1v2h-1zM47 286h1v2h-1zM47 294h1v2h-1zM47 350h1v4h-1zM47 358h1v2h-1zM47 378h1v2h-1zM47 382h1v4h-1zM47 390h1v2h-1zM47 402h1v2h-1zM48 242h1v2h-1zM48 256h1v2h-1zM48 276h1v4h-1zM48 328h1v2h-1zM48 332h1v2h-1zM48 342h1v2h-1zM48 366h1v4h-1zM48 376h1v2h-1zM48 380h1v2h-1zM48 394h1v2h-1zM48 398h1v4h-1zM51 274h1v2h-1zM51 292h1v2h-1zM55 328h1v2h-1zM55 362h1v2h-1zM56 328h1v2h-1zM56 394h1v2h-1zM74 362h1v2h-1zM120 362h1v2h-1zM121 362h1v2h-1zM165 360h1v2h-1zM167 360h1v2h-1zM190 360h1v2h-1z"/><path fill="#0058ff" d="M30 260h1v2h-1zM30 274h1v2h-1zM30 280h1v2h-1zM30 286h1v2h-1zM30 294h1v4h-1zM30 304h1v2h-1zM30 312h1v2h-1zM30 332h1v2h-1zM30 342h1v4h-1zM31 240h1v2h-1zM31 248h1v2h-1zM31 262h1v4h-1zM31 282h1v4h-1zM31 296h1v2h-1zM31 330h1v4h-1zM31 336h1v4h-1zM31 378h1v2h-1zM31 396h1v2h-1zM31 404h1v1h-1zM32 238h1v2h-1zM32 264h1v2h-1zM32 286h1v2h-1zM32 290h1v2h-1zM32 316h1v4h-1zM32 328h1v4h-1zM32 336h1v2h-1zM32 342h1v2h-1zM32 364h1v2h-1zM32 396h1v2h-1zM32 400h1v2h-1zM32 404h1v1h-1zM33 258h1v2h-1zM33 366h1v2h-1zM34 310h1v4h-1zM35 262h1v2h-1zM35 274h1v4h-1zM35 298h1v4h-1zM35 328h1v6h-1zM35 336h1v4h-1zM35 346h1v2h-1zM35 362h1v2h-1zM35 386h1v2h-1zM35 404h1v1h-1zM36 246h1v2h-1zM36 280h1v2h-1zM36 290h1v2h-1zM36 350h1v6h-1zM36 372h1v4h-1zM36 382h1v2h-1zM36 398h1v2h-1zM36 402h1v3h-1zM37 222h1v4h-1zM37 230h1v4h-1zM37 238h1v2h-1zM37 246h1v2h-1zM37 282h1v8h-1zM37 308h1v2h-1zM37 364h1v2h-1zM37 390h1v2h-1zM38 238h1v4h-1zM38 246h1v2h-1zM38 264h1v2h-1zM38 272h1v2h-1zM38 308h1v4h-1zM38 326h1v2h-1zM38 334h1v2h-1zM38 350h1v2h-1zM38 360h1v2h-1zM38 368h1v2h-1zM38 378h1v2h-1zM38 382h1v2h-1zM38 398h1v2h-1zM39 244h1v2h-1zM39 260h1v2h-1zM39 268h1v2h-1zM39 274h1v2h-1zM39 298h1v2h-1zM39 330h1v2h-1zM39 348h1v2h-1zM39 376h1v2h-1zM39 380h1v2h-1zM39 386h1v2h-1zM39 394h1v2h-1zM44 242h1v2h-1zM44 256h1v4h-1zM44 374h1v2h-1zM45 228h1v4h-1zM45 238h1v2h-1zM45 252h1v2h-1zM45 260h1v4h-1zM45 270h1v2h-1zM45 274h1v4h-1zM45 286h1v2h-1zM45 298h1v2h-1zM45 302h1v2h-1zM45 318h1v2h-1zM45 326h1v2h-1zM45 346h1v2h-1zM45 360h1v2h-1zM45 364h1v2h-1zM45 378h1v2h-1zM45 390h1v2h-1zM46 224h1v2h-1zM46 228h1v2h-1zM46 236h1v2h-1zM46 252h1v4h-1zM46 272h1v2h-1zM46 280h1v2h-1zM46 286h1v2h-1zM46 298h1v2h-1zM46 334h1v2h-1zM46 350h1v2h-1zM46 388h1v4h-1zM47 224h1v6h-1zM47 252h1v2h-1zM47 262h1v2h-1zM47 266h1v4h-1zM47 276h1v2h-1zM47 298h1v2h-1zM47 314h1v2h-1zM47 318h1v2h-1zM47 326h1v2h-1zM47 334h1v2h-1zM47 354h1v2h-1zM47 360h1v2h-1zM47 364h1v2h-1zM47 386h1v4h-1zM48 310h1v2h-1zM48 370h1v2h-1zM48 404h1v1h-1zM51 366h1v2h-1zM52 366h1v2h-1zM55 392h1v2h-1zM56 362h1v2h-1zM62 340h1v2h-1zM72 360h1v2h-1zM74 360h1v2h-1zM107 340h1v2h-1zM110 340h1v2h-1zM118 360h1v2h-1zM120 360h1v2h-1zM121 360h1v2h-1zM166 360h1v2h-1z"/><path fill="#008eff" d="M30 244h1v2h-1zM30 270h1v2h-1zM30 276h1v2h-1zM30 300h1v2h-1zM30 316h1v2h-1zM30 394h1v2h-1zM31 232h1v2h-1zM31 244h1v2h-1zM31 260h1v2h-1zM31 268h1v2h-1zM31 286h1v2h-1zM31 294h1v2h-1zM31 304h1v2h-1zM31 318h1v4h-1zM31 328h1v2h-1zM31 342h1v2h-1zM31 346h1v2h-1zM31 380h1v2h-1zM31 386h1v2h-1zM31 402h1v2h-1zM32 270h1v2h-1zM32 278h1v2h-1zM32 294h1v6h-1zM32 314h1v2h-1zM32 320h1v2h-1zM32 332h1v2h-1zM32 394h1v2h-1zM33 256h1v2h-1zM33 292h1v2h-1zM33 362h1v2h-1zM33 372h1v2h-1zM35 258h1v2h-1zM35 270h1v2h-1zM35 348h1v2h-1zM35 380h1v2h-1zM35 400h1v2h-1zM36 268h1v2h-1zM36 272h1v4h-1zM36 296h1v2h-1zM36 304h1v2h-1zM36 310h1v2h-1zM36 334h1v2h-1zM36 348h1v2h-1zM36 360h1v2h-1zM36 368h1v2h-1zM36 378h1v2h-1zM36 390h1v2h-1zM37 240h1v2h-1zM37 280h1v2h-1zM37 290h1v2h-1zM37 326h1v2h-1zM37 334h1v2h-1zM37 352h1v2h-1zM37 360h1v2h-1zM37 370h1v2h-1zM37 398h1v2h-1zM38 250h1v2h-1zM38 274h1v2h-1zM38 280h1v2h-1zM38 304h1v2h-1zM38 338h1v2h-1zM38 358h1v2h-1zM38 372h1v4h-1zM38 390h1v2h-1zM38 402h1v3h-1zM39 270h1v2h-1zM39 328h1v2h-1zM39 332h1v2h-1zM39 392h1v2h-1zM39 400h1v2h-1zM44 362h1v2h-1zM44 392h1v2h-1zM45 240h1v2h-1zM45 266h1v2h-1zM45 278h1v2h-1zM45 320h1v2h-1zM45 332h1v2h-1zM45 340h1v2h-1zM45 352h1v2h-1zM45 374h1v2h-1zM45 382h1v6h-1zM45 396h1v4h-1zM45 402h1v3h-1zM46 222h1v2h-1zM46 246h1v2h-1zM46 264h1v2h-1zM46 274h1v2h-1zM46 282h1v2h-1zM46 300h1v4h-1zM46 314h1v4h-1zM46 338h1v2h-1zM46 354h1v2h-1zM46 360h1v2h-1zM46 364h1v2h-1zM46 398h1v2h-1zM47 222h1v2h-1zM47 238h1v4h-1zM47 250h1v2h-1zM47 270h1v2h-1zM47 278h1v2h-1zM47 290h1v4h-1zM47 316h1v2h-1zM47 336h1v6h-1zM48 362h1v2h-1zM48 392h1v2h-1zM49 364h1v2h-1zM54 364h1v2h-1zM56 392h1v2h-1zM63 340h1v2h-1zM64 340h1v2h-1zM72 340h1v2h-1zM73 340h1v2h-1zM73 360h1v2h-1zM108 340h1v2h-1zM119 360h1v2h-1z"/><path fill="#00c3ff" d="M29 292h1v2h-1zM29 362h1v2h-1zM29 366h1v2h-1zM30 230h1v2h-1zM30 266h1v2h-1zM30 298h1v2h-1zM30 302h1v2h-1zM30 314h1v2h-1zM30 322h1v2h-1zM30 328h1v2h-1zM30 364h1v2h-1zM30 392h1v2h-1zM31 274h1v2h-1zM31 302h1v2h-1zM31 312h1v4h-1zM31 344h1v2h-1zM31 364h1v2h-1zM31 400h1v2h-1zM32 230h1v2h-1zM32 242h1v4h-1zM32 274h1v2h-1zM32 300h1v2h-1zM32 376h1v2h-1zM32 392h1v2h-1zM33 368h1v4h-1zM35 256h1v2h-1zM35 292h1v2h-1zM35 340h1v2h-1zM36 250h1v2h-1zM36 260h1v2h-1zM36 264h1v4h-1zM36 270h1v2h-1zM36 276h1v4h-1zM36 300h1v2h-1zM36 326h1v2h-1zM36 336h1v2h-1zM36 388h1v2h-1zM36 396h1v2h-1zM37 264h1v2h-1zM37 268h1v2h-1zM37 298h1v4h-1zM37 310h1v2h-1zM37 338h1v2h-1zM37 348h1v2h-1zM37 354h1v2h-1zM37 374h1v2h-1zM37 396h1v2h-1zM37 402h1v2h-1zM38 302h1v2h-1zM38 332h1v2h-1zM38 336h1v2h-1zM38 346h1v2h-1zM38 354h1v2h-1zM38 370h1v2h-1zM38 388h1v2h-1zM38 396h1v2h-1zM38 400h1v2h-1zM39 276h1v2h-1zM39 294h1v2h-1zM39 362h1v2h-1zM44 310h1v2h-1zM45 314h1v4h-1zM45 328h1v4h-1zM45 336h1v4h-1zM45 368h1v2h-1zM45 388h1v2h-1zM45 394h1v2h-1zM46 232h1v4h-1zM46 238h1v2h-1zM46 250h1v2h-1zM46 260h1v4h-1zM46 268h1v4h-1zM46 276h1v4h-1zM46 292h1v2h-1zM46 318h1v2h-1zM46 324h1v2h-1zM46 346h1v2h-1zM46 358h1v2h-1zM46 372h1v4h-1zM46 378h1v2h-1zM46 382h1v6h-1zM47 246h1v2h-1zM47 320h1v2h-1zM47 328h1v6h-1zM47 342h1v4h-1zM47 348h1v2h-1zM47 370h1v8h-1zM47 398h1v4h-1zM47 404h1v1h-1zM61 340h1v2h-1zM74 340h1v2h-1zM109 340h1v2h-1z"/><path fill="#00ddde" d="M30 278h1v2h-1zM30 376h1v2h-1zM31 242h1v2h-1zM31 278h1v2h-1zM31 316h1v2h-1zM31 322h1v2h-1zM31 374h1v2h-1zM31 392h1v4h-1zM32 256h1v2h-1zM32 266h1v2h-1zM32 276h1v2h-1zM32 302h1v2h-1zM32 322h1v2h-1zM32 366h1v2h-1zM32 374h1v2h-1zM35 342h1v4h-1zM35 376h1v2h-1zM36 244h1v2h-1zM36 262h1v2h-1zM36 294h1v2h-1zM36 298h1v2h-1zM36 302h1v2h-1zM36 328h1v4h-1zM36 338h1v2h-1zM36 358h1v2h-1zM36 362h1v2h-1zM36 366h1v2h-1zM36 370h1v2h-1zM36 384h1v4h-1zM36 400h1v2h-1zM37 250h1v2h-1zM37 262h1v2h-1zM37 266h1v2h-1zM37 270h1v2h-1zM37 296h1v2h-1zM37 302h1v2h-1zM37 330h1v2h-1zM37 350h1v2h-1zM37 358h1v2h-1zM37 368h1v2h-1zM37 372h1v2h-1zM37 378h1v2h-1zM37 382h1v2h-1zM37 388h1v2h-1zM37 404h1v1h-1zM38 262h1v2h-1zM38 268h1v4h-1zM38 296h1v6h-1zM38 330h1v2h-1zM38 348h1v2h-1zM38 352h1v2h-1zM38 366h1v2h-1zM39 256h1v2h-1zM39 292h1v2h-1zM39 384h1v2h-1zM40 344h1v2h-1zM41 340h1v4h-1zM45 250h1v2h-1zM45 292h1v2h-1zM45 310h1v4h-1zM45 366h1v2h-1zM45 380h1v2h-1zM46 242h1v2h-1zM46 248h1v2h-1zM46 320h1v4h-1zM46 326h1v2h-1zM46 330h1v4h-1zM46 336h1v2h-1zM46 396h1v2h-1zM47 244h1v2h-1zM47 256h1v4h-1zM47 274h1v2h-1zM47 312h1v2h-1zM47 346h1v2h-1zM47 368h1v2h-1zM47 396h1v2h-1z"/><path fill="#00f4bb" d="M30 228h1v2h-1zM30 256h1v4h-1zM30 370h1v6h-1zM31 230h1v2h-1zM31 256h1v2h-1zM31 266h1v2h-1zM31 270h1v2h-1zM31 276h1v2h-1zM31 298h1v4h-1zM31 376h1v2h-1zM32 228h1v2h-1zM32 258h1v2h-1zM35 392h1v2h-1zM36 380h1v2h-1zM36 394h1v2h-1zM37 332h1v2h-1zM37 366h1v2h-1zM37 380h1v2h-1zM37 386h1v2h-1zM38 256h1v2h-1zM38 278h1v2h-1zM38 292h1v2h-1zM38 376h1v2h-1zM38 386h1v2h-1zM39 258h1v2h-1zM45 242h1v2h-1zM45 256h1v4h-1zM45 322h1v2h-1zM45 342h1v2h-1zM45 370h1v4h-1zM45 376h1v2h-1zM46 240h1v2h-1zM46 244h1v2h-1zM46 256h1v2h-1zM46 266h1v2h-1zM46 312h1v2h-1zM46 348h1v2h-1zM46 368h1v2h-1zM46 376h1v2h-1zM46 402h1v2h-1zM47 322h1v2h-1zM49 362h1v2h-1zM54 362h1v2h-1z"/><path fill="#07ff8b" d="M30 224h1v4h-1zM30 292h1v2h-1zM30 368h1v2h-1zM31 292h1v2h-1zM31 310h1v2h-1zM32 224h1v4h-1zM32 292h1v2h-1zM36 242h1v2h-1zM36 332h1v2h-1zM36 392h1v2h-1zM37 260h1v2h-1zM37 274h1v2h-1zM37 278h1v2h-1zM37 336h1v2h-1zM37 362h1v2h-1zM37 394h1v2h-1zM37 400h1v2h-1zM38 260h1v2h-1zM38 266h1v2h-1zM38 328h1v2h-1zM38 380h1v2h-1zM38 394h1v2h-1zM39 242h1v2h-1zM45 244h1v2h-1zM45 344h1v2h-1zM45 362h1v2h-1zM45 400h1v2h-1zM46 340h1v2h-1zM46 380h1v2h-1zM46 400h1v2h-1zM46 404h1v1h-1zM47 242h1v2h-1zM47 362h1v2h-1zM47 380h1v2h-1z"/><path fill="#15ff50" d="M30 310h1v2h-1zM30 366h1v2h-1zM31 228h1v2h-1zM32 312h1v2h-1zM32 362h1v2h-1zM33 310h1v4h-1zM36 258h1v2h-1zM36 340h1v2h-1zM36 346h1v2h-1zM36 376h1v2h-1zM37 244h1v2h-1zM37 344h1v4h-1zM38 244h1v2h-1zM38 362h1v2h-1zM45 392h1v2h-1zM46 310h1v2h-1zM46 328h1v2h-1zM46 370h1v2h-1zM47 310h1v2h-1zM47 366h1v2h-1zM47 394h1v2h-1z"/><path fill="#22ff15" d="M31 258h1v2h-1zM31 362h1v2h-1zM31 372h1v2h-1zM32 310h1v2h-1zM32 372h1v2h-1zM36 292h1v2h-1zM37 256h1v2h-1zM37 328h1v2h-1zM38 344h1v2h-1zM38 392h1v2h-1zM39 344h1v2h-1zM46 258h1v2h-1zM46 344h1v2h-1zM46 366h1v2h-1z"/><path fill="#4bff00" d="M30 362h1v2h-1zM31 224h1v4h-1zM31 366h1v6h-1zM32 368h1v4h-1zM36 256h1v2h-1zM36 342h1v4h-1zM46 342h1v2h-1zM46 362h1v2h-1zM46 392h1v4h-1zM50 364h1v2h-1zM53 364h1v2h-1z"/><path fill="#83ff00" d="M37 276h1v2h-1zM37 292h1v4h-1zM38 276h1v2h-1zM38 294h1v2h-1zM47 392h1v2h-1z"/><path fill="#bbff00" d="M37 376h1v2h-1zM37 384h1v2h-1zM37 392h1v2h-1zM38 384h1v2h-1z"/><path fill="#ffd800" d="M37 258h1v2h-1zM38 258h1v2h-1z"/><path fill="#ffa800" d="M37 242h1v2h-1zM37 340h1v4h-1zM38 242h1v2h-1zM40 340h1v4h-1z"/><path fill="#ff7400" d="M51 364h1v2h-1zM52 364h1v2h-1z"/><path fill="#ff3a00" d="M50 362h1v2h-1zM53 362h1v2h-1z"/><path fill="#ff0000" d="M38 340h1v4h-1zM39 340h1v4h-1zM51 362h1v2h-1zM52 362h1v2h-1z"/></svg>
<svg width="950" height="514" style="overflow:visible"><rect x="493" y="222" width="427" height="183" fill="#000"/><path fill="#00001f" d="M512 248h1v2h-1zM512 296h1v2h-1zM512 330h1v2h-1zM512 350h1v2h-1zM513 228h1v2h-1zM513 322h1v2h-1zM516 224h1v2h-1zM516 256h1v2h-1zM516 264h1v2h-1zM517 224h1v2h-1zM517 266h1v4h-1zM517 294h1v2h-1zM517 328h1v4h-1zM517 380h1v2h-1zM518 322h1v2h-1zM518 402h1v2h-1zM519 290h1v2h-1zM519 368h1v2h-1zM520 368h1v2h-1zM521 234h1v2h-1zM521 260h1v4h-1zM521 288h1v2h-1zM521 380h1v2h-1zM522 308h1v2h-1zM522 312h1v2h-1zM522 344h1v2h-1zM522 378h1v2h-1zM522 400h1v4h-1zM523 310h1v2h-1zM523 328h1v2h-1zM523 394h1v4h-1zM524 224h1v2h-1zM524 240h1v2h-1zM524 276h1v2h-1zM524 286h1v2h-1zM524 306h1v2h-1zM524 316h1v2h-1zM524 326h1v2h-1zM524 344h1v2h-1zM524 354h1v2h-1zM525 236h1v2h-1zM525 286h1v2h-1zM525 306h1v2h-1zM525 314h1v2h-1zM525 368h1v2h-1zM525 388h1v2h-1zM526 262h1v2h-1zM526 280h1v2h-1zM526 316h1v2h-1zM527 226h1v2h-1zM527 246h1v2h-1zM527 262h1v4h-1zM527 268h1v4h-1zM527 322h1v2h-1zM528 238h1v2h-1zM528 244h1v4h-1zM528 280h1v2h-1zM528 286h1v2h-1zM528 316h1v2h-1zM528 380h1v2h-1zM529 286h1v2h-1zM529 306h1v2h-1zM535 226h1v2h-1zM535 238h1v2h-1zM535 254h1v2h-1zM535 280h1v2h-1zM535 318h1v2h-1zM535 350h1v2h-1zM536 380h1v2h-1zM537 264h1v2h-1zM537 366h1v2h-1zM538 230h1v2h-1zM538 362h1v2h-1zM538 376h1v2h-1zM538 404h1v1h-1zM543 360h1v2h-1zM545 290h1v2h-1zM545 384h1v2h-1zM545 402h1v2h-1zM546 234h1v2h-1zM546 238h1v2h-1zM546 248h1v2h-1zM546 316h1v2h-1zM546 370h1v2h-1zM546 386h1v2h-1zM547 226h1v2h-1zM547 280h1v2h-1zM547 294h1v2h-1zM547 326h1v2h-1zM547 390h1v2h-1zM550 362h1v2h-1zM552 362h1v2h-1zM554 282h1v2h-1zM554 286h1v2h-1zM554 354h1v2h-1zM555 286h1v2h-1zM555 336h1v2h-1zM556 264h1v2h-1zM556 366h1v2h-1zM559 286h1v2h-1zM559 316h1v2h-1zM559 332h1v2h-1zM559 360h1v2h-1zM559 370h1v2h-1zM560 270h1v2h-1zM560 352h1v2h-1zM561 310h1v2h-1zM561 334h1v2h-1zM562 362h1v2h-1zM570 334h1v2h-1zM570 370h1v2h-1zM570 384h1v2h-1zM570 388h1v2h-1zM571 252h1v2h-1zM571 282h1v4h-1zM571 336h1v2h-1zM572 292h1v2h-1zM581 296h1v2h-1zM581 306h1v2h-1zM581 320h1v2h-1zM581 340h1v2h-1zM596 344h1v2h-1zM616 360h1v2h-1zM617 360h1v4h-1zM630 340h1v2h-1zM633 360h1v2h-1zM634 340h1v2h-1zM636 362h1v2h-1zM638 340h1v2h-1zM680 340h1v2h-1zM684 340h1v2h-1zM705 360h1v2h-1zM706 362h1v2h-1zM710 340h1v2h-1zM712 360h1v2h-1zM718 362h1v2h-1zM723 360h1v2h-1zM734 362h1v2h-1zM736 360h1v2h-1zM744 362h1v2h-1zM751 360h1v2h-1zM767 340h1v2h-1zM767 362h1v2h-1zM772 340h1v2h-1zM774 360h1v2h-1zM778 360h1v2h-1zM783 362h1v2h-1zM792 340h1v2h-1zM795 362h1v2h-1zM803 362h1v2h-1zM804 340h1v2h-1zM807 366h1v2h-1zM811 360h1v2h-1zM813 362h1v2h-1zM823 360h1v2h-1zM829 340h1v2h-1zM838 360h1v2h-1zM843 340h1v2h-1zM848 362h1v2h-1zM849 360h1v2h-1zM850 340h1v2h-1zM856 360h1v2h-1zM857 360h1v2h-1zM859 362h1v2h-1zM866 362h1v2h-1zM871 360h1v2h-1zM872 340h1v2h-1zM876 362h1v2h-1zM877 340h1v2h-1zM883 362h1v2h-1zM885 360h1v2h-1zM886 362h1v2h-1zM893 362h1v2h-1zM901 362h1v2h-1zM905 360h1v2h-1zM911 362h1v2h-1zM912 362h1v2h-1z"/><path fill="#00003e" d="M498 348h1v2h-1zM501 236h1v2h-1zM501 350h1v2h-1zM501 360h1v2h-1zM501 374h1v2h-1zM506 236h1v4h-1zM506 252h1v4h-1zM506 266h1v6h-1zM506 306h1v2h-1zM506 320h1v6h-1zM506 346h1v4h-1zM506 358h1v2h-1zM506 380h1v2h-1zM507 294h1v2h-1zM507 306h1v2h-1zM507 358h1v2h-1zM508 386h1v2h-1zM511 298h1v4h-1zM511 334h1v4h-1zM511 382h1v2h-1zM511 386h1v2h-1zM512 222h1v26h-1zM512 250h1v10h-1zM512 264h1v2h-1zM512 268h1v2h-1zM512 272h1v6h-1zM512 280h1v16h-1zM512 298h1v26h-1zM512 326h1v4h-1zM512 332h1v8h-1zM512 344h1v6h-1zM512 352h1v4h-1zM512 358h1v4h-1zM512 368h1v2h-1zM512 372h1v24h-1zM512 398h1v4h-1zM512 404h1v1h-1zM513 222h1v6h-1zM513 230h1v42h-1zM513 280h1v12h-1zM513 296h1v2h-1zM513 302h1v2h-1zM513 308h1v6h-1zM513 318h1v4h-1zM513 324h1v2h-1zM513 328h1v10h-1zM513 340h1v22h-1zM513 368h1v8h-1zM513 386h1v6h-1zM513 402h1v3h-1zM514 222h1v12h-1zM514 236h1v4h-1zM514 248h1v26h-1zM514 310h1v16h-1zM514 346h1v6h-1zM514 354h1v6h-1zM514 372h1v4h-1zM515 222h1v18h-1zM515 246h1v20h-1zM515 268h1v6h-1zM515 310h1v16h-1zM515 342h1v2h-1zM515 348h1v14h-1zM515 368h1v2h-1zM515 372h1v4h-1zM516 222h1v2h-1zM516 226h1v2h-1zM516 232h1v4h-1zM516 240h1v12h-1zM516 254h1v2h-1zM516 258h1v6h-1zM516 266h1v4h-1zM516 274h1v4h-1zM516 280h1v12h-1zM516 296h1v2h-1zM516 302h1v2h-1zM516 308h1v10h-1zM516 320h1v2h-1zM516 324h1v2h-1zM516 328h1v6h-1zM516 336h1v4h-1zM516 342h1v16h-1zM516 360h1v2h-1zM516 368h1v8h-1zM516 380h1v2h-1zM516 390h1v2h-1zM516 400h1v5h-1zM517 222h1v2h-1zM517 226h1v16h-1zM517 246h1v6h-1zM517 254h1v2h-1zM517 258h1v8h-1zM517 272h1v10h-1zM517 284h1v2h-1zM517 288h1v2h-1zM517 292h1v2h-1zM517 296h1v10h-1zM517 312h1v4h-1zM517 322h1v2h-1zM517 326h1v2h-1zM517 332h1v14h-1zM517 348h1v4h-1zM517 354h1v2h-1zM517 358h1v4h-1zM517 368h1v6h-1zM517 376h1v4h-1zM517 382h1v18h-1zM517 402h1v3h-1zM518 222h1v20h-1zM518 246h1v4h-1zM518 252h1v6h-1zM518 260h1v2h-1zM518 264h1v2h-1zM518 272h1v10h-1zM518 286h1v6h-1zM518 312h1v10h-1zM518 324h1v2h-1zM518 328h1v4h-1zM518 334h1v4h-1zM518 342h1v2h-1zM518 346h1v6h-1zM518 354h1v8h-1zM518 366h1v2h-1zM518 370h1v2h-1zM518 374h1v2h-1zM518 380h1v2h-1zM518 386h1v2h-1zM518 390h1v2h-1zM518 394h1v8h-1zM518 404h1v1h-1zM519 224h1v2h-1zM519 228h1v2h-1zM519 236h1v4h-1zM519 248h1v2h-1zM519 252h1v2h-1zM519 274h1v16h-1zM519 312h1v14h-1zM519 356h1v2h-1zM519 362h1v6h-1zM519 370h1v6h-1zM519 396h1v2h-1zM519 402h1v2h-1zM520 222h1v18h-1zM520 246h1v4h-1zM520 252h1v6h-1zM520 264h1v2h-1zM520 268h1v16h-1zM520 288h1v4h-1zM520 310h1v4h-1zM520 318h1v4h-1zM520 328h1v4h-1zM520 336h1v2h-1zM520 350h1v10h-1zM520 362h1v6h-1zM520 374h1v2h-1zM520 380h1v2h-1zM520 386h1v2h-1zM520 390h1v15h-1zM521 222h1v4h-1zM521 232h1v2h-1zM521 242h1v6h-1zM521 250h1v2h-1zM521 256h1v2h-1zM521 264h1v4h-1zM521 272h1v4h-1zM521 278h1v4h-1zM521 284h1v4h-1zM521 292h1v16h-1zM521 312h1v4h-1zM521 326h1v2h-1zM521 338h1v4h-1zM521 344h1v2h-1zM521 350h1v2h-1zM521 356h1v2h-1zM521 360h1v8h-1zM521 372h1v2h-1zM521 376h1v2h-1zM521 382h1v6h-1zM521 392h1v2h-1zM521 398h1v2h-1zM522 222h1v2h-1zM522 226h1v4h-1zM522 242h1v2h-1zM522 248h1v2h-1zM522 252h1v2h-1zM522 258h1v4h-1zM522 264h1v4h-1zM522 272h1v6h-1zM522 280h1v4h-1zM522 288h1v2h-1zM522 294h1v2h-1zM522 300h1v2h-1zM522 304h1v4h-1zM522 316h1v2h-1zM522 324h1v2h-1zM522 334h1v2h-1zM522 340h1v2h-1zM522 350h1v2h-1zM522 356h1v2h-1zM522 360h1v4h-1zM522 376h1v2h-1zM522 386h1v2h-1zM522 390h1v10h-1zM522 404h1v1h-1zM523 224h1v2h-1zM523 228h1v4h-1zM523 234h1v2h-1zM523 246h1v2h-1zM523 250h1v2h-1zM523 268h1v2h-1zM523 278h1v2h-1zM523 284h1v2h-1zM523 288h1v2h-1zM523 306h1v2h-1zM523 322h1v2h-1zM523 332h1v4h-1zM523 338h1v8h-1zM523 348h1v2h-1zM523 352h1v2h-1zM523 356h1v2h-1zM523 360h1v4h-1zM523 366h1v4h-1zM523 378h1v6h-1zM523 386h1v2h-1zM523 392h1v2h-1zM523 402h1v2h-1zM524 246h1v2h-1zM524 284h1v2h-1zM524 290h1v4h-1zM524 296h1v2h-1zM524 304h1v2h-1zM524 332h1v2h-1zM524 336h1v2h-1zM524 340h1v4h-1zM524 348h1v2h-1zM524 358h1v6h-1zM524 366h1v4h-1zM524 374h1v6h-1zM524 384h1v2h-1zM524 392h1v2h-1zM524 398h1v2h-1zM525 224h1v2h-1zM525 228h1v2h-1zM525 240h1v2h-1zM525 254h1v2h-1zM525 260h1v4h-1zM525 268h1v2h-1zM525 292h1v10h-1zM525 304h1v2h-1zM525 308h1v2h-1zM525 322h1v2h-1zM525 326h1v2h-1zM525 332h1v4h-1zM525 340h1v2h-1zM525 344h1v4h-1zM525 352h1v2h-1zM525 360h1v8h-1zM525 370h1v2h-1zM525 374h1v2h-1zM525 378h1v2h-1zM525 382h1v2h-1zM525 392h1v4h-1zM525 398h1v2h-1zM526 224h1v2h-1zM526 244h1v2h-1zM526 270h1v2h-1zM526 274h1v6h-1zM526 282h1v8h-1zM526 308h1v8h-1zM526 318h1v2h-1zM526 322h1v2h-1zM526 328h1v10h-1zM526 342h1v2h-1zM526 346h1v16h-1zM526 368h1v2h-1zM526 372h1v14h-1zM526 388h1v2h-1zM526 392h1v13h-1zM527 232h1v2h-1zM527 240h1v6h-1zM527 250h1v2h-1zM527 256h1v4h-1zM527 266h1v2h-1zM527 276h1v16h-1zM527 310h1v12h-1zM527 324h1v2h-1zM527 332h1v2h-1zM527 348h1v4h-1zM527 356h1v4h-1zM527 376h1v14h-1zM527 392h1v2h-1zM527 396h1v2h-1zM527 402h1v3h-1zM528 274h1v6h-1zM528 284h1v2h-1zM528 302h1v4h-1zM528 308h1v8h-1zM528 322h1v2h-1zM528 328h1v2h-1zM528 332h1v2h-1zM528 336h1v4h-1zM528 346h1v14h-1zM528 368h1v2h-1zM528 372h1v8h-1zM528 382h1v2h-1zM528 388h1v2h-1zM528 392h1v13h-1zM529 294h1v12h-1zM529 308h1v2h-1zM529 326h1v2h-1zM529 334h1v2h-1zM529 342h1v6h-1zM529 366h1v2h-1zM529 370h1v2h-1zM529 374h1v2h-1zM530 340h1v2h-1zM531 340h1v2h-1zM531 364h1v2h-1zM532 360h1v4h-1zM533 340h1v2h-1zM533 360h1v4h-1zM534 340h1v2h-1zM534 360h1v4h-1zM535 222h1v4h-1zM535 228h1v10h-1zM535 240h1v14h-1zM535 276h1v2h-1zM535 282h1v30h-1zM535 314h1v4h-1zM535 320h1v6h-1zM535 344h1v4h-1zM535 352h1v2h-1zM535 356h1v2h-1zM535 360h1v2h-1zM535 376h1v4h-1zM535 382h1v2h-1zM535 392h1v12h-1zM536 222h1v4h-1zM536 228h1v2h-1zM536 234h1v6h-1zM536 248h1v2h-1zM536 254h1v2h-1zM536 258h1v2h-1zM536 262h1v2h-1zM536 266h1v2h-1zM536 286h1v2h-1zM536 306h1v4h-1zM536 326h1v2h-1zM536 348h1v2h-1zM536 354h1v12h-1zM536 376h1v4h-1zM536 382h1v4h-1zM536 388h1v2h-1zM536 402h1v3h-1zM537 222h1v4h-1zM537 232h1v8h-1zM537 248h1v2h-1zM537 254h1v6h-1zM537 280h1v4h-1zM537 302h1v4h-1zM537 308h1v2h-1zM537 318h1v2h-1zM537 322h1v6h-1zM537 346h1v6h-1zM537 354h1v6h-1zM537 362h1v4h-1zM537 370h1v2h-1zM537 376h1v8h-1zM537 388h1v2h-1zM537 394h1v2h-1zM537 402h1v3h-1zM538 222h1v8h-1zM538 232h1v4h-1zM538 238h1v10h-1zM538 250h1v6h-1zM538 274h1v18h-1zM538 294h1v18h-1zM538 314h1v12h-1zM538 344h1v6h-1zM538 352h1v2h-1zM538 356h1v6h-1zM538 382h1v2h-1zM538 392h1v12h-1zM539 360h1v4h-1zM540 360h1v4h-1zM541 340h1v2h-1zM541 360h1v4h-1zM542 340h1v2h-1zM542 360h1v2h-1zM543 340h1v2h-1zM544 340h1v2h-1zM544 362h1v2h-1zM545 256h1v4h-1zM545 262h1v2h-1zM545 266h1v6h-1zM545 274h1v4h-1zM545 282h1v2h-1zM545 340h1v2h-1zM545 378h1v2h-1zM545 382h1v2h-1zM545 392h1v10h-1zM545 404h1v1h-1zM546 226h1v4h-1zM546 232h1v2h-1zM546 240h1v8h-1zM546 250h1v4h-1zM546 256h1v2h-1zM546 260h1v10h-1zM546 272h1v2h-1zM546 278h1v18h-1zM546 298h1v4h-1zM546 304h1v4h-1zM546 310h1v6h-1zM546 320h1v2h-1zM546 326h1v2h-1zM546 340h1v2h-1zM546 360h1v4h-1zM546 376h1v10h-1zM546 388h1v2h-1zM546 402h1v2h-1zM547 228h1v2h-1zM547 240h1v8h-1zM547 250h1v2h-1zM547 254h1v2h-1zM547 268h1v2h-1zM547 272h1v6h-1zM547 282h1v12h-1zM547 298h1v6h-1zM547 308h1v6h-1zM547 340h1v2h-1zM547 362h1v2h-1zM547 376h1v10h-1zM547 388h1v2h-1zM547 402h1v3h-1zM548 256h1v8h-1zM548 266h1v2h-1zM548 270h1v2h-1zM548 274h1v2h-1zM548 282h1v2h-1zM548 340h1v2h-1zM548 360h1v2h-1zM548 382h1v2h-1zM548 394h1v8h-1zM548 404h1v1h-1zM549 360h1v4h-1zM550 360h1v2h-1zM551 340h1v2h-1zM551 362h1v2h-1zM552 340h1v2h-1zM552 360h1v2h-1zM553 344h1v2h-1zM553 360h1v2h-1zM554 256h1v16h-1zM554 274h1v6h-1zM554 288h1v2h-1zM554 292h1v4h-1zM554 298h1v2h-1zM554 326h1v2h-1zM554 344h1v4h-1zM554 360h1v2h-1zM554 364h1v2h-1zM554 382h1v2h-1zM555 256h1v2h-1zM555 260h1v8h-1zM555 270h1v6h-1zM555 278h1v8h-1zM555 288h1v8h-1zM555 298h1v4h-1zM555 326h1v2h-1zM555 330h1v6h-1zM555 338h1v2h-1zM555 344h1v12h-1zM555 360h1v8h-1zM555 370h1v2h-1zM555 376h1v8h-1zM556 256h1v8h-1zM556 266h1v12h-1zM556 282h1v4h-1zM556 326h1v2h-1zM556 344h1v4h-1zM556 360h1v4h-1zM556 370h1v2h-1zM557 340h1v2h-1zM557 360h1v4h-1zM558 340h1v2h-1zM559 274h1v6h-1zM559 282h1v4h-1zM559 290h1v2h-1zM559 312h1v2h-1zM559 326h1v2h-1zM559 330h1v2h-1zM559 334h1v2h-1zM559 338h1v4h-1zM559 344h1v2h-1zM559 362h1v6h-1zM559 392h1v2h-1zM559 398h1v2h-1zM560 258h1v2h-1zM560 262h1v2h-1zM560 276h1v2h-1zM560 280h1v12h-1zM560 310h1v16h-1zM560 328h1v8h-1zM560 338h1v4h-1zM560 344h1v2h-1zM560 360h1v12h-1zM560 392h1v4h-1zM560 400h1v2h-1zM561 274h1v6h-1zM561 282h1v10h-1zM561 312h1v6h-1zM561 326h1v8h-1zM561 340h1v2h-1zM561 360h1v8h-1zM561 370h1v2h-1zM562 340h1v2h-1zM563 340h1v2h-1zM563 360h1v4h-1zM564 362h1v2h-1zM565 340h1v2h-1zM565 362h1v2h-1zM566 340h1v2h-1zM566 360h1v4h-1zM567 340h1v2h-1zM567 360h1v4h-1zM568 340h1v2h-1zM568 360h1v2h-1zM569 292h1v4h-1zM569 326h1v2h-1zM569 360h1v4h-1zM570 226h1v8h-1zM570 240h1v8h-1zM570 250h1v2h-1zM570 274h1v4h-1zM570 294h1v2h-1zM570 298h1v4h-1zM570 304h1v20h-1zM570 328h1v6h-1zM570 336h1v4h-1zM570 360h1v4h-1zM570 376h1v2h-1zM570 382h1v2h-1zM570 392h1v2h-1zM570 398h1v2h-1zM571 228h1v2h-1zM571 234h1v2h-1zM571 238h1v14h-1zM571 274h1v4h-1zM571 294h1v12h-1zM571 308h1v10h-1zM571 320h1v4h-1zM571 326h1v4h-1zM571 332h1v4h-1zM571 338h1v2h-1zM571 344h1v2h-1zM571 360h1v6h-1zM571 376h1v4h-1zM571 382h1v2h-1zM571 392h1v2h-1zM571 398h1v2h-1zM572 244h1v2h-1zM572 344h1v2h-1zM572 360h1v4h-1zM573 344h1v2h-1zM573 360h1v4h-1zM574 340h1v2h-1zM574 360h1v2h-1zM575 362h1v2h-1zM576 340h1v2h-1zM576 360h1v4h-1zM577 340h1v2h-1zM578 340h1v2h-1zM578 362h1v2h-1zM579 362h1v2h-1zM580 340h1v2h-1zM580 362h1v2h-1zM581 292h1v4h-1zM581 298h1v4h-1zM581 304h1v2h-1zM581 312h1v6h-1zM581 322h1v2h-1zM581 326h1v2h-1zM581 360h1v2h-1zM582 292h1v4h-1zM582 298h1v6h-1zM582 310h1v8h-1zM582 366h1v2h-1zM583 366h1v2h-1zM584 366h1v2h-1zM585 366h1v2h-1zM586 360h1v4h-1zM587 340h1v2h-1zM587 360h1v4h-1zM588 340h1v2h-1zM588 360h1v2h-1zM589 340h1v2h-1zM589 360h1v4h-1zM591 360h1v2h-1zM592 340h1v2h-1zM592 362h1v2h-1zM594 344h1v2h-1zM594 362h1v2h-1zM595 360h1v4h-1zM596 360h1v4h-1zM597 360h1v4h-1zM598 340h1v2h-1zM598 362h1v2h-1zM599 360h1v2h-1zM600 340h1v2h-1zM600 360h1v4h-1zM601 340h1v2h-1zM601 360h1v2h-1zM602 360h1v4h-1zM603 340h1v2h-1zM603 360h1v4h-1zM604 360h1v4h-1zM605 340h1v2h-1zM605 362h1v2h-1zM606 360h1v2h-1zM607 360h1v2h-1zM608 362h1v2h-1zM609 340h1v2h-1zM609 360h1v4h-1zM610 340h1v2h-1zM610 362h1v2h-1zM611 360h1v4h-1zM612 340h1v2h-1zM612 360h1v4h-1zM613 360h1v4h-1zM614 360h1v2h-1zM615 340h1v2h-1zM615 360h1v2h-1zM616 340h1v2h-1zM616 362h1v2h-1zM618 360h1v4h-1zM619 340h1v2h-1zM619 360h1v2h-1zM620 340h1v2h-1zM620 362h1v2h-1zM621 360h1v4h-1zM622 340h1v2h-1zM622 360h1v2h-1zM623 360h1v4h-1zM625 360h1v4h-1zM626 340h1v2h-1zM626 360h1v4h-1zM627 360h1v4h-1zM628 340h1v2h-1zM628 362h1v2h-1zM629 366h1v2h-1zM630 366h1v2h-1zM631 366h1v2h-1zM632 340h1v2h-1zM632 362h1v2h-1zM633 362h1v2h-1zM635 340h1v2h-1zM635 360h1v4h-1zM636 340h1v2h-1zM636 360h1v2h-1zM637 362h1v2h-1zM638 360h1v2h-1zM641 362h1v2h-1zM642 362h1v2h-1zM643 340h1v2h-1zM643 362h1v2h-1zM645 362h1v2h-1zM646 340h1v2h-1zM646 360h1v4h-1zM647 340h1v2h-1zM648 340h1v2h-1zM648 360h1v2h-1zM649 362h1v2h-1zM650 340h1v2h-1zM650 360h1v2h-1zM651 340h1v2h-1zM651 360h1v2h-1zM652 340h1v2h-1zM653 340h1v2h-1zM653 360h1v4h-1zM654 340h1v2h-1zM654 360h1v2h-1zM655 360h1v2h-1zM657 360h1v4h-1zM658 360h1v2h-1zM659 360h1v2h-1zM660 362h1v2h-1zM661 340h1v2h-1zM661 360h1v4h-1zM662 362h1v2h-1zM663 340h1v2h-1zM663 362h1v2h-1zM664 340h1v2h-1zM665 362h1v2h-1zM666 340h1v2h-1zM666 362h1v2h-1zM667 360h1v4h-1zM668 360h1v2h-1zM669 340h1v2h-1zM669 360h1v2h-1zM670 360h1v2h-1zM671 340h1v2h-1zM671 360h1v2h-1zM672 340h1v2h-1zM672 360h1v2h-1zM673 362h1v2h-1zM674 340h1v2h-1zM674 360h1v2h-1zM675 362h1v2h-1zM676 360h1v4h-1zM677 360h1v4h-1zM679 340h1v2h-1zM679 360h1v4h-1zM681 340h1v2h-1zM681 360h1v2h-1zM682 360h1v4h-1zM683 360h1v4h-1zM684 360h1v4h-1zM685 340h1v2h-1zM685 360h1v4h-1zM686 340h1v2h-1zM686 360h1v4h-1zM687 360h1v2h-1zM688 360h1v4h-1zM689 360h1v4h-1zM690 340h1v2h-1zM690 362h1v2h-1zM691 340h1v2h-1zM692 360h1v2h-1zM693 360h1v2h-1zM694 340h1v2h-1zM695 360h1v4h-1zM696 360h1v2h-1zM697 340h1v2h-1zM698 340h1v2h-1zM698 360h1v2h-1zM700 340h1v2h-1zM701 340h1v2h-1zM701 362h1v2h-1zM702 362h1v2h-1zM703 340h1v2h-1zM703 362h1v2h-1zM705 362h1v2h-1zM706 360h1v2h-1zM707 360h1v4h-1zM709 340h1v2h-1zM709 362h1v2h-1zM711 362h1v2h-1zM713 360h1v2h-1zM714 340h1v2h-1zM714 360h1v4h-1zM715 360h1v2h-1zM716 360h1v2h-1zM717 360h1v2h-1zM718 360h1v2h-1zM720 340h1v2h-1zM720 362h1v2h-1zM722 362h1v2h-1zM723 340h1v2h-1zM725 360h1v4h-1zM726 366h1v2h-1zM727 340h1v2h-1zM727 366h1v2h-1zM728 366h1v2h-1zM729 366h1v2h-1zM731 340h1v2h-1zM731 362h1v2h-1zM732 360h1v2h-1zM734 360h1v2h-1zM737 360h1v2h-1zM739 340h1v2h-1zM739 362h1v2h-1zM740 340h1v2h-1zM741 360h1v4h-1zM742 360h1v2h-1zM743 340h1v2h-1zM743 360h1v4h-1zM744 360h1v2h-1zM745 340h1v2h-1zM745 362h1v2h-1zM746 340h1v2h-1zM747 340h1v2h-1zM748 342h1v2h-1zM748 360h1v4h-1zM749 342h1v2h-1zM749 360h1v4h-1zM750 342h1v2h-1zM751 342h1v2h-1zM753 360h1v2h-1zM754 360h1v2h-1zM757 360h1v2h-1zM759 362h1v2h-1zM760 362h1v2h-1zM761 362h1v2h-1zM762 362h1v2h-1zM763 362h1v2h-1zM764 362h1v2h-1zM765 360h1v2h-1zM770 362h1v2h-1zM771 360h1v2h-1zM772 360h1v2h-1zM773 362h1v2h-1zM774 362h1v2h-1zM775 362h1v2h-1zM776 362h1v2h-1zM777 360h1v2h-1zM780 362h1v2h-1zM782 360h1v2h-1zM787 362h1v2h-1zM788 360h1v2h-1zM790 340h1v2h-1zM790 362h1v2h-1zM791 360h1v4h-1zM792 360h1v2h-1zM793 362h1v2h-1zM794 340h1v2h-1zM798 360h1v4h-1zM801 362h1v2h-1zM802 340h1v2h-1zM802 362h1v2h-1zM803 340h1v2h-1zM803 360h1v2h-1zM808 340h1v2h-1zM809 360h1v2h-1zM814 360h1v2h-1zM815 362h1v2h-1zM818 362h1v2h-1zM819 362h1v2h-1zM826 362h1v2h-1zM830 340h1v2h-1zM831 360h1v2h-1zM832 362h1v2h-1zM834 366h1v2h-1zM836 366h1v2h-1zM839 362h1v2h-1zM841 360h1v2h-1zM848 360h1v2h-1zM856 342h1v2h-1zM858 342h1v2h-1zM859 342h1v2h-1zM859 360h1v2h-1zM861 362h1v2h-1zM862 366h1v2h-1zM863 366h1v2h-1zM864 366h1v2h-1zM865 366h1v2h-1zM867 362h1v2h-1zM868 360h1v2h-1zM870 362h1v2h-1zM873 360h1v2h-1zM877 360h1v2h-1zM878 360h1v4h-1zM881 362h1v2h-1zM884 360h1v2h-1zM888 362h1v2h-1zM889 360h1v2h-1zM894 362h1v2h-1zM895 360h1v2h-1zM899 360h1v4h-1zM900 362h1v2h-1zM902 360h1v2h-1zM915 362h1v2h-1z"/><path fill="#00005f" d="M493 342h1v2h-1zM493 348h1v4h-1zM493 354h1v6h-1zM494 358h1v2h-1zM496 358h1v2h-1zM497 342h1v2h-1zM497 348h1v4h-1zM498 222h1v4h-1zM498 228h1v8h-1zM498 238h1v4h-1zM498 250h1v6h-1zM498 260h1v2h-1zM498 280h1v2h-1zM498 288h1v2h-1zM498 296h1v2h-1zM498 302h1v2h-1zM498 320h1v6h-1zM498 330h1v2h-1zM498 336h1v4h-1zM498 350h1v4h-1zM498 356h1v4h-1zM498 362h1v2h-1zM498 366h1v2h-1zM498 372h1v4h-1zM498 386h1v2h-1zM499 224h1v2h-1zM499 228h1v2h-1zM499 236h1v4h-1zM499 252h1v2h-1zM499 328h1v6h-1zM499 336h1v4h-1zM499 352h1v6h-1zM500 230h1v4h-1zM500 236h1v4h-1zM500 248h1v2h-1zM500 252h1v2h-1zM500 328h1v2h-1zM500 332h1v2h-1zM500 336h1v2h-1zM500 350h1v8h-1zM501 222h1v2h-1zM501 226h1v4h-1zM501 234h1v2h-1zM501 244h1v4h-1zM501 250h1v4h-1zM501 264h1v2h-1zM501 280h1v4h-1zM501 286h1v2h-1zM501 290h1v2h-1zM501 296h1v2h-1zM501 314h1v2h-1zM501 318h1v4h-1zM501 330h1v4h-1zM501 336h1v4h-1zM501 352h1v6h-1zM501 366h1v6h-1zM501 390h1v2h-1zM502 358h1v2h-1zM506 222h1v2h-1zM506 240h1v4h-1zM506 246h1v2h-1zM506 250h1v2h-1zM506 258h1v6h-1zM506 274h1v2h-1zM506 278h1v10h-1zM506 292h1v2h-1zM506 300h1v2h-1zM506 310h1v4h-1zM506 318h1v2h-1zM506 332h1v2h-1zM506 344h1v2h-1zM506 350h1v8h-1zM506 360h1v8h-1zM506 370h1v6h-1zM506 378h1v2h-1zM506 386h1v19h-1zM507 222h1v4h-1zM507 230h1v2h-1zM507 236h1v2h-1zM507 248h1v2h-1zM507 256h1v6h-1zM507 266h1v2h-1zM507 282h1v2h-1zM507 288h1v6h-1zM507 296h1v4h-1zM507 308h1v2h-1zM507 314h1v4h-1zM507 320h1v2h-1zM507 326h1v8h-1zM507 338h1v2h-1zM507 350h1v2h-1zM507 356h1v2h-1zM507 368h1v2h-1zM507 372h1v4h-1zM507 378h1v2h-1zM507 386h1v2h-1zM507 390h1v6h-1zM507 398h1v4h-1zM507 404h1v1h-1zM508 256h1v2h-1zM508 294h1v2h-1zM508 300h1v4h-1zM508 328h1v2h-1zM508 372h1v2h-1zM508 380h1v2h-1zM508 390h1v2h-1zM509 296h1v2h-1zM509 302h1v4h-1zM509 308h1v2h-1zM509 380h1v2h-1zM509 384h1v2h-1zM509 390h1v2h-1zM509 402h1v2h-1zM510 270h1v2h-1zM510 292h1v8h-1zM510 302h1v2h-1zM510 306h1v4h-1zM510 358h1v2h-1zM510 378h1v2h-1zM510 384h1v2h-1zM510 390h1v2h-1zM510 400h1v2h-1zM511 224h1v2h-1zM511 238h1v2h-1zM511 252h1v6h-1zM511 262h1v4h-1zM511 268h1v4h-1zM511 280h1v6h-1zM511 292h1v2h-1zM511 302h1v4h-1zM511 308h1v4h-1zM511 314h1v2h-1zM511 324h1v2h-1zM511 330h1v4h-1zM511 346h1v4h-1zM511 352h1v10h-1zM511 366h1v4h-1zM511 372h1v2h-1zM511 380h1v2h-1zM511 384h1v2h-1zM511 390h1v6h-1zM511 398h1v6h-1zM512 278h1v2h-1zM512 366h1v2h-1zM512 370h1v2h-1zM512 396h1v2h-1zM513 274h1v6h-1zM513 294h1v2h-1zM513 298h1v4h-1zM513 304h1v4h-1zM513 338h1v2h-1zM513 376h1v2h-1zM513 380h1v6h-1zM513 392h1v10h-1zM514 234h1v2h-1zM514 240h1v8h-1zM514 278h1v14h-1zM514 328h1v4h-1zM514 336h1v2h-1zM514 342h1v4h-1zM514 352h1v2h-1zM514 360h1v2h-1zM514 368h1v4h-1zM514 380h1v2h-1zM514 390h1v2h-1zM514 394h1v2h-1zM514 398h1v2h-1zM514 402h1v2h-1zM515 240h1v6h-1zM515 266h1v2h-1zM515 276h1v2h-1zM515 280h1v12h-1zM515 302h1v8h-1zM515 330h1v2h-1zM515 336h1v2h-1zM515 340h1v2h-1zM515 344h1v4h-1zM515 370h1v2h-1zM515 380h1v2h-1zM515 402h1v3h-1zM516 278h1v2h-1zM516 294h1v2h-1zM516 298h1v4h-1zM516 304h1v4h-1zM516 334h1v2h-1zM516 340h1v2h-1zM516 382h1v8h-1zM516 394h1v6h-1zM517 366h1v2h-1zM518 242h1v4h-1zM518 250h1v2h-1zM518 258h1v2h-1zM518 262h1v2h-1zM518 266h1v6h-1zM518 292h1v2h-1zM518 296h1v2h-1zM518 302h1v8h-1zM518 326h1v2h-1zM518 332h1v2h-1zM518 338h1v2h-1zM518 344h1v2h-1zM518 352h1v2h-1zM518 364h1v2h-1zM518 376h1v4h-1zM518 382h1v4h-1zM518 388h1v2h-1zM518 392h1v2h-1zM519 222h1v2h-1zM519 226h1v2h-1zM519 230h1v6h-1zM519 240h1v8h-1zM519 250h1v2h-1zM519 254h1v4h-1zM519 260h1v6h-1zM519 268h1v6h-1zM519 296h1v2h-1zM519 302h1v2h-1zM519 328h1v12h-1zM519 342h1v2h-1zM519 346h1v10h-1zM519 358h1v4h-1zM519 380h1v16h-1zM519 398h1v4h-1zM519 404h1v1h-1zM520 240h1v6h-1zM520 250h1v2h-1zM520 260h1v4h-1zM520 266h1v2h-1zM520 294h1v4h-1zM520 300h1v10h-1zM520 332h1v4h-1zM520 338h1v2h-1zM520 342h1v8h-1zM520 360h1v2h-1zM520 376h1v4h-1zM520 384h1v2h-1zM520 388h1v2h-1zM526 296h1v12h-1zM526 326h1v2h-1zM526 338h1v2h-1zM526 344h1v2h-1zM526 364h1v4h-1zM526 370h1v2h-1zM527 274h1v2h-1zM527 296h1v2h-1zM527 302h1v2h-1zM527 306h1v2h-1zM527 328h1v4h-1zM527 334h1v6h-1zM527 342h1v2h-1zM527 346h1v2h-1zM527 352h1v4h-1zM527 360h1v2h-1zM527 364h1v6h-1zM527 372h1v4h-1zM527 394h1v2h-1zM527 398h1v4h-1zM528 294h1v8h-1zM528 306h1v2h-1zM528 330h1v2h-1zM528 334h1v2h-1zM528 342h1v4h-1zM528 364h1v4h-1zM529 292h1v2h-1zM529 340h1v2h-1zM529 364h1v2h-1zM530 364h1v2h-1zM535 274h1v2h-1zM535 278h1v2h-1zM535 312h1v2h-1zM535 342h1v2h-1zM536 226h1v2h-1zM536 230h1v4h-1zM536 240h1v4h-1zM536 246h1v2h-1zM536 250h1v4h-1zM536 276h1v10h-1zM536 288h1v4h-1zM536 294h1v12h-1zM536 310h1v16h-1zM536 344h1v4h-1zM536 350h1v4h-1zM536 392h1v10h-1zM537 226h1v6h-1zM537 240h1v8h-1zM537 250h1v4h-1zM537 274h1v6h-1zM537 284h1v8h-1zM537 294h1v8h-1zM537 306h1v2h-1zM537 310h1v2h-1zM537 314h1v4h-1zM537 320h1v2h-1zM537 344h1v2h-1zM537 352h1v2h-1zM537 360h1v2h-1zM537 392h1v2h-1zM537 396h1v6h-1zM538 292h1v2h-1zM538 312h1v2h-1zM538 342h1v2h-1zM546 258h1v2h-1zM546 270h1v2h-1zM546 274h1v4h-1zM546 392h1v10h-1zM546 404h1v1h-1zM547 256h1v12h-1zM547 270h1v2h-1zM547 278h1v2h-1zM547 392h1v10h-1zM548 392h1v2h-1zM553 342h1v2h-1zM555 258h1v2h-1zM555 268h1v2h-1zM555 276h1v2h-1zM555 342h1v2h-1zM556 342h1v2h-1zM560 274h1v2h-1zM560 278h1v2h-1zM560 326h1v2h-1zM570 292h1v2h-1zM570 326h1v2h-1zM570 344h1v2h-1zM571 292h1v2h-1zM582 364h1v2h-1zM583 364h1v2h-1zM584 364h1v2h-1zM585 364h1v2h-1zM594 342h1v2h-1zM595 342h1v2h-1zM596 342h1v2h-1zM597 342h1v2h-1zM630 364h1v2h-1zM726 364h1v2h-1zM727 364h1v2h-1zM728 364h1v2h-1zM729 364h1v2h-1zM804 364h1v2h-1zM805 364h1v2h-1zM806 364h1v2h-1zM807 364h1v2h-1zM833 364h1v2h-1zM834 364h1v2h-1zM835 364h1v2h-1zM836 364h1v2h-1zM857 342h1v2h-1zM862 364h1v2h-1zM863 364h1v2h-1zM864 364h1v2h-1zM865 364h1v2h-1z"/><path fill="#00058a" d="M493 232h1v2h-1zM493 236h1v2h-1zM493 344h1v4h-1zM493 352h1v2h-1zM493 360h1v2h-1zM493 368h1v2h-1zM493 372h1v4h-1zM493 390h1v2h-1zM494 348h1v10h-1zM494 360h1v2h-1zM495 348h1v2h-1zM495 358h1v2h-1zM496 348h1v8h-1zM497 236h1v2h-1zM497 344h1v4h-1zM497 352h1v10h-1zM497 372h1v2h-1zM497 390h1v2h-1zM498 226h1v2h-1zM498 236h1v2h-1zM498 242h1v8h-1zM498 256h1v4h-1zM498 262h1v12h-1zM498 276h1v4h-1zM498 282h1v6h-1zM498 290h1v4h-1zM498 298h1v2h-1zM498 304h1v16h-1zM498 328h1v2h-1zM498 332h1v4h-1zM498 340h1v8h-1zM498 354h1v2h-1zM498 360h1v2h-1zM498 364h1v2h-1zM498 368h1v4h-1zM498 380h1v2h-1zM498 384h1v2h-1zM498 390h1v2h-1zM498 402h1v2h-1zM499 222h1v2h-1zM499 226h1v2h-1zM499 230h1v6h-1zM499 242h1v10h-1zM499 254h1v2h-1zM499 280h1v2h-1zM499 286h1v2h-1zM499 326h1v2h-1zM499 334h1v2h-1zM499 342h1v10h-1zM499 358h1v4h-1zM499 366h1v4h-1zM499 372h1v4h-1zM500 222h1v8h-1zM500 234h1v2h-1zM500 240h1v6h-1zM500 250h1v2h-1zM500 254h1v2h-1zM500 272h1v2h-1zM500 280h1v2h-1zM500 286h1v2h-1zM500 290h1v2h-1zM500 326h1v2h-1zM500 330h1v2h-1zM500 334h1v2h-1zM500 338h1v2h-1zM500 346h1v4h-1zM500 358h1v4h-1zM500 366h1v4h-1zM500 372h1v4h-1zM501 224h1v2h-1zM501 230h1v4h-1zM501 238h1v6h-1zM501 248h1v2h-1zM501 254h1v10h-1zM501 266h1v14h-1zM501 284h1v2h-1zM501 288h1v2h-1zM501 294h1v2h-1zM501 298h1v14h-1zM501 316h1v2h-1zM501 322h1v8h-1zM501 334h1v2h-1zM501 348h1v2h-1zM501 358h1v2h-1zM501 362h1v4h-1zM501 372h1v2h-1zM501 386h1v4h-1zM501 394h1v2h-1zM501 398h1v6h-1zM502 272h1v2h-1zM502 324h1v2h-1zM502 336h1v2h-1zM502 348h1v2h-1zM502 352h1v6h-1zM502 372h1v2h-1zM502 386h1v2h-1zM505 260h1v2h-1zM505 264h1v2h-1zM505 268h1v2h-1zM505 320h1v2h-1zM505 324h1v2h-1zM505 350h1v12h-1zM505 368h1v2h-1zM505 372h1v2h-1zM505 386h1v2h-1zM505 390h1v2h-1zM506 224h1v12h-1zM506 244h1v2h-1zM506 248h1v2h-1zM506 256h1v2h-1zM506 264h1v2h-1zM506 272h1v2h-1zM506 276h1v2h-1zM506 288h1v4h-1zM506 294h1v6h-1zM506 302h1v4h-1zM506 308h1v2h-1zM506 314h1v4h-1zM506 326h1v6h-1zM506 334h1v10h-1zM506 368h1v2h-1zM506 376h1v2h-1zM506 382h1v4h-1zM507 226h1v4h-1zM507 232h1v4h-1zM507 238h1v4h-1zM507 244h1v4h-1zM507 250h1v6h-1zM507 262h1v4h-1zM507 268h1v14h-1zM507 284h1v4h-1zM507 300h1v6h-1zM507 310h1v4h-1zM507 318h1v2h-1zM507 322h1v4h-1zM507 334h1v4h-1zM507 342h1v8h-1zM507 352h1v4h-1zM507 360h1v8h-1zM507 370h1v2h-1zM507 376h1v2h-1zM507 380h1v6h-1zM507 388h1v2h-1zM507 396h1v2h-1zM507 402h1v2h-1zM508 224h1v2h-1zM508 228h1v2h-1zM508 236h1v2h-1zM508 260h1v6h-1zM508 268h1v6h-1zM508 280h1v4h-1zM508 288h1v6h-1zM508 296h1v4h-1zM508 304h1v6h-1zM508 318h1v2h-1zM508 330h1v10h-1zM508 348h1v14h-1zM508 374h1v6h-1zM508 382h1v4h-1zM508 388h1v2h-1zM508 394h1v11h-1zM509 256h1v2h-1zM509 260h1v2h-1zM509 264h1v4h-1zM509 272h1v2h-1zM509 280h1v2h-1zM509 286h1v2h-1zM509 292h1v4h-1zM509 298h1v4h-1zM509 306h1v2h-1zM509 330h1v4h-1zM509 336h1v2h-1zM509 360h1v2h-1zM509 374h1v6h-1zM509 382h1v2h-1zM509 386h1v4h-1zM509 394h1v8h-1zM509 404h1v1h-1zM510 222h1v2h-1zM510 236h1v2h-1zM510 252h1v2h-1zM510 256h1v14h-1zM510 272h1v2h-1zM510 280h1v2h-1zM510 286h1v2h-1zM510 300h1v2h-1zM510 304h1v2h-1zM510 328h1v6h-1zM510 336h1v4h-1zM510 348h1v2h-1zM510 352h1v2h-1zM510 356h1v2h-1zM510 360h1v2h-1zM510 372h1v6h-1zM510 380h1v4h-1zM510 386h1v4h-1zM510 392h1v8h-1zM510 402h1v3h-1zM511 222h1v2h-1zM511 226h1v12h-1zM511 244h1v8h-1zM511 258h1v4h-1zM511 266h1v2h-1zM511 272h1v8h-1zM511 286h1v6h-1zM511 294h1v4h-1zM511 306h1v2h-1zM511 312h1v2h-1zM511 316h1v8h-1zM511 328h1v2h-1zM511 338h1v2h-1zM511 342h1v4h-1zM511 350h1v2h-1zM511 370h1v2h-1zM511 374h1v6h-1zM511 388h1v2h-1zM511 396h1v2h-1zM511 404h1v1h-1zM512 342h1v2h-1zM513 292h1v2h-1zM513 326h1v2h-1zM513 378h1v2h-1zM514 274h1v4h-1zM514 294h1v6h-1zM514 302h1v8h-1zM514 332h1v4h-1zM514 338h1v4h-1zM514 384h1v6h-1zM514 396h1v2h-1zM514 400h1v2h-1zM514 404h1v1h-1zM515 274h1v2h-1zM515 278h1v2h-1zM515 294h1v8h-1zM515 328h1v2h-1zM515 332h1v4h-1zM515 338h1v2h-1zM515 378h1v2h-1zM515 384h1v18h-1zM516 292h1v2h-1zM516 326h1v2h-1zM516 376h1v4h-1zM516 392h1v2h-1zM518 294h1v2h-1zM518 298h1v4h-1zM518 340h1v2h-1zM519 258h1v2h-1zM519 266h1v2h-1zM519 298h1v2h-1zM519 304h1v6h-1zM519 326h1v2h-1zM519 340h1v2h-1zM519 344h1v2h-1zM519 378h1v2h-1zM520 258h1v2h-1zM520 292h1v2h-1zM520 298h1v2h-1zM520 326h1v2h-1zM520 340h1v2h-1zM520 382h1v2h-1zM526 292h1v4h-1zM526 340h1v2h-1zM526 362h1v2h-1zM527 292h1v4h-1zM527 298h1v4h-1zM527 304h1v2h-1zM527 308h1v2h-1zM527 326h1v2h-1zM527 340h1v2h-1zM527 344h1v2h-1zM527 362h1v2h-1zM527 370h1v2h-1zM528 292h1v2h-1zM528 326h1v2h-1zM528 340h1v2h-1zM528 370h1v2h-1zM536 244h1v2h-1zM536 274h1v2h-1zM536 292h1v2h-1zM536 342h1v2h-1zM537 292h1v2h-1zM537 312h1v2h-1zM537 342h1v2h-1zM554 342h1v2h-1zM570 342h1v2h-1zM571 342h1v2h-1zM573 342h1v2h-1zM629 364h1v2h-1zM631 364h1v2h-1zM804 362h1v2h-1zM805 362h1v2h-1zM807 362h1v2h-1z"/><path fill="#000bb5" d="M493 248h1v2h-1zM493 252h1v4h-1zM493 272h1v2h-1zM493 324h1v2h-1zM493 336h1v2h-1zM493 340h1v2h-1zM493 380h1v2h-1zM494 342h1v2h-1zM495 354h1v2h-1zM496 342h1v2h-1zM496 346h1v2h-1zM496 356h1v2h-1zM496 360h1v2h-1zM496 372h1v2h-1zM497 238h1v2h-1zM497 248h1v2h-1zM497 252h1v4h-1zM497 268h1v2h-1zM497 272h1v2h-1zM497 302h1v2h-1zM497 318h1v2h-1zM497 340h1v2h-1zM497 368h1v2h-1zM497 374h1v2h-1zM497 386h1v2h-1zM498 274h1v2h-1zM498 294h1v2h-1zM498 300h1v2h-1zM498 326h1v2h-1zM498 376h1v2h-1zM498 388h1v2h-1zM498 394h1v8h-1zM498 404h1v1h-1zM499 240h1v2h-1zM499 256h1v2h-1zM499 260h1v6h-1zM499 268h1v2h-1zM499 272h1v2h-1zM499 276h1v4h-1zM499 284h1v2h-1zM499 288h1v4h-1zM499 296h1v2h-1zM499 308h1v2h-1zM499 320h1v2h-1zM499 362h1v4h-1zM499 370h1v2h-1zM499 390h1v2h-1zM500 246h1v2h-1zM500 260h1v2h-1zM500 264h1v8h-1zM500 274h1v4h-1zM500 284h1v2h-1zM500 288h1v2h-1zM500 302h1v4h-1zM500 308h1v2h-1zM500 364h1v2h-1zM500 370h1v2h-1zM500 386h1v2h-1zM500 390h1v2h-1zM501 292h1v2h-1zM501 312h1v2h-1zM501 346h1v2h-1zM501 376h1v2h-1zM501 380h1v2h-1zM501 384h1v2h-1zM501 396h1v2h-1zM501 404h1v1h-1zM502 236h1v4h-1zM502 248h1v2h-1zM502 252h1v4h-1zM502 264h1v2h-1zM502 268h1v4h-1zM502 280h1v2h-1zM502 302h1v6h-1zM502 318h1v6h-1zM502 328h1v2h-1zM502 334h1v2h-1zM502 350h1v2h-1zM502 360h1v2h-1zM502 366h1v4h-1zM502 374h1v2h-1zM502 390h1v2h-1zM503 358h1v2h-1zM505 222h1v2h-1zM505 232h1v2h-1zM505 236h1v2h-1zM505 248h1v2h-1zM505 254h1v4h-1zM505 262h1v2h-1zM505 266h1v2h-1zM505 272h1v2h-1zM505 280h1v2h-1zM505 302h1v4h-1zM505 312h1v2h-1zM505 318h1v2h-1zM505 322h1v2h-1zM505 336h1v2h-1zM505 346h1v4h-1zM505 374h1v2h-1zM505 380h1v2h-1zM505 384h1v2h-1zM505 402h1v2h-1zM507 242h1v2h-1zM507 340h1v2h-1zM508 222h1v2h-1zM508 232h1v4h-1zM508 240h1v4h-1zM508 248h1v2h-1zM508 252h1v2h-1zM508 258h1v2h-1zM508 266h1v2h-1zM508 276h1v4h-1zM508 284h1v4h-1zM508 314h1v2h-1zM508 320h1v8h-1zM508 342h1v2h-1zM508 346h1v2h-1zM508 368h1v4h-1zM508 392h1v2h-1zM509 224h1v8h-1zM509 236h1v2h-1zM509 248h1v2h-1zM509 258h1v2h-1zM509 262h1v2h-1zM509 268h1v4h-1zM509 282h1v2h-1zM509 288h1v2h-1zM509 318h1v4h-1zM509 324h1v2h-1zM509 328h1v2h-1zM509 334h1v2h-1zM509 342h1v2h-1zM509 350h1v2h-1zM509 354h1v6h-1zM509 372h1v2h-1zM510 224h1v4h-1zM510 230h1v2h-1zM510 238h1v2h-1zM510 248h1v2h-1zM510 282h1v4h-1zM510 288h1v4h-1zM510 334h1v2h-1zM510 342h1v2h-1zM510 346h1v2h-1zM510 350h1v2h-1zM510 354h1v2h-1zM510 362h1v2h-1zM510 368h1v2h-1zM511 240h1v4h-1zM511 326h1v2h-1zM511 362h1v4h-1zM514 292h1v2h-1zM514 300h1v2h-1zM514 326h1v2h-1zM514 378h1v2h-1zM514 382h1v2h-1zM514 392h1v2h-1zM515 292h1v2h-1zM515 376h1v2h-1zM515 382h1v2h-1zM518 362h1v2h-1zM519 292h1v4h-1zM519 300h1v2h-1zM519 376h1v2h-1zM528 362h1v2h-1zM529 362h1v2h-1zM530 362h1v2h-1zM531 362h1v2h-1zM572 342h1v2h-1zM596 340h1v2h-1zM748 340h1v2h-1zM749 340h1v2h-1zM750 340h1v2h-1zM751 340h1v2h-1zM806 362h1v2h-1zM833 362h1v2h-1zM835 362h1v2h-1zM856 340h1v2h-1zM857 340h1v2h-1zM858 340h1v2h-1zM859 340h1v2h-1z"/><path fill="#0010e0" d="M493 222h1v2h-1zM493 230h1v2h-1zM493 234h1v2h-1zM493 238h1v2h-1zM493 242h1v2h-1zM493 256h1v2h-1zM493 260h1v2h-1zM493 264h1v2h-1zM493 268h1v4h-1zM493 280h1v2h-1zM493 286h1v2h-1zM493 290h1v2h-1zM493 306h1v2h-1zM493 316h1v6h-1zM493 328h1v2h-1zM493 334h1v2h-1zM493 364h1v4h-1zM493 370h1v2h-1zM493 386h1v4h-1zM493 396h1v2h-1zM493 402h1v3h-1zM494 236h1v2h-1zM494 344h1v4h-1zM494 372h1v2h-1zM495 342h1v6h-1zM495 350h1v4h-1zM495 356h1v2h-1zM495 360h1v2h-1zM496 236h1v2h-1zM496 368h1v2h-1zM497 228h1v8h-1zM497 242h1v2h-1zM497 250h1v2h-1zM497 256h1v2h-1zM497 260h1v2h-1zM497 266h1v2h-1zM497 270h1v2h-1zM497 280h1v2h-1zM497 286h1v2h-1zM497 314h1v2h-1zM497 320h1v2h-1zM497 328h1v4h-1zM497 336h1v2h-1zM497 362h1v2h-1zM497 370h1v2h-1zM497 380h1v2h-1zM497 388h1v2h-1zM497 400h1v5h-1zM498 378h1v2h-1zM498 382h1v2h-1zM498 392h1v2h-1zM499 258h1v2h-1zM499 270h1v2h-1zM499 274h1v2h-1zM499 282h1v2h-1zM499 302h1v6h-1zM499 310h1v2h-1zM499 318h1v2h-1zM499 324h1v2h-1zM499 340h1v2h-1zM499 380h1v2h-1zM499 384h1v4h-1zM499 402h1v3h-1zM500 256h1v2h-1zM500 262h1v2h-1zM500 278h1v2h-1zM500 282h1v2h-1zM500 296h1v4h-1zM500 306h1v2h-1zM500 310h1v2h-1zM500 314h1v12h-1zM500 362h1v2h-1zM500 384h1v2h-1zM500 402h1v2h-1zM501 378h1v2h-1zM501 382h1v2h-1zM501 392h1v2h-1zM502 230h1v6h-1zM502 250h1v2h-1zM502 256h1v8h-1zM502 266h1v2h-1zM502 282h1v2h-1zM502 286h1v2h-1zM502 292h1v2h-1zM502 296h1v2h-1zM502 308h1v4h-1zM502 314h1v4h-1zM502 330h1v2h-1zM502 384h1v2h-1zM502 388h1v2h-1zM502 402h1v3h-1zM503 348h1v2h-1zM503 356h1v2h-1zM503 372h1v2h-1zM504 356h1v4h-1zM505 230h1v2h-1zM505 234h1v2h-1zM505 238h1v2h-1zM505 270h1v2h-1zM505 282h1v4h-1zM505 296h1v2h-1zM505 306h1v6h-1zM505 314h1v4h-1zM505 328h1v2h-1zM505 332h1v2h-1zM505 362h1v2h-1zM505 366h1v2h-1zM508 226h1v2h-1zM508 230h1v2h-1zM508 238h1v2h-1zM508 246h1v2h-1zM508 250h1v2h-1zM508 254h1v2h-1zM508 274h1v2h-1zM508 310h1v2h-1zM508 344h1v2h-1zM508 362h1v6h-1zM509 232h1v4h-1zM509 238h1v2h-1zM509 252h1v4h-1zM509 276h1v2h-1zM509 284h1v2h-1zM509 290h1v2h-1zM509 310h1v2h-1zM509 338h1v2h-1zM509 344h1v6h-1zM509 352h1v2h-1zM509 366h1v6h-1zM509 392h1v2h-1zM510 228h1v2h-1zM510 232h1v4h-1zM510 240h1v4h-1zM510 246h1v2h-1zM510 254h1v2h-1zM510 274h1v6h-1zM510 310h1v2h-1zM510 314h1v14h-1zM510 344h1v2h-1zM510 366h1v2h-1zM510 370h1v2h-1zM513 366h1v2h-1zM514 376h1v2h-1zM515 326h1v2h-1zM516 366h1v2h-1zM529 360h1v2h-1zM531 360h1v2h-1zM535 340h1v2h-1zM537 340h1v2h-1zM554 340h1v2h-1zM582 362h1v2h-1zM583 362h1v2h-1zM585 362h1v2h-1zM594 340h1v2h-1zM595 340h1v2h-1zM597 340h1v2h-1zM629 362h1v2h-1zM727 362h1v2h-1zM804 360h1v2h-1zM806 360h1v2h-1zM834 362h1v2h-1zM836 362h1v2h-1zM864 362h1v2h-1z"/><path fill="#0022ff" d="M493 224h1v6h-1zM493 240h1v2h-1zM493 244h1v2h-1zM493 250h1v2h-1zM493 278h1v2h-1zM493 282h1v4h-1zM493 288h1v2h-1zM493 296h1v2h-1zM493 302h1v4h-1zM493 308h1v4h-1zM493 322h1v2h-1zM493 330h1v2h-1zM493 362h1v2h-1zM493 382h1v4h-1zM493 392h1v2h-1zM493 400h1v2h-1zM494 238h1v2h-1zM494 248h1v2h-1zM494 272h1v2h-1zM494 318h1v2h-1zM494 324h1v2h-1zM494 340h1v2h-1zM494 368h1v2h-1zM494 374h1v2h-1zM494 390h1v2h-1zM494 402h1v2h-1zM495 236h1v2h-1zM495 372h1v4h-1zM495 386h1v2h-1zM496 222h1v2h-1zM496 252h1v4h-1zM496 264h1v2h-1zM496 318h1v4h-1zM496 340h1v2h-1zM496 344h1v2h-1zM496 374h1v2h-1zM496 386h1v2h-1zM496 390h1v2h-1zM496 402h1v2h-1zM497 222h1v6h-1zM497 244h1v4h-1zM497 264h1v2h-1zM497 282h1v4h-1zM497 290h1v2h-1zM497 296h1v2h-1zM497 306h1v2h-1zM497 310h1v2h-1zM497 316h1v2h-1zM497 322h1v4h-1zM497 332h1v2h-1zM497 364h1v4h-1zM497 378h1v2h-1zM497 384h1v2h-1zM497 394h1v2h-1zM499 266h1v2h-1zM499 292h1v4h-1zM499 298h1v4h-1zM499 314h1v4h-1zM499 322h1v2h-1zM500 292h1v2h-1zM500 300h1v2h-1zM500 344h1v2h-1zM500 380h1v2h-1zM500 394h1v2h-1zM500 404h1v1h-1zM502 222h1v8h-1zM502 240h1v2h-1zM502 246h1v2h-1zM502 276h1v4h-1zM502 284h1v2h-1zM502 288h1v4h-1zM502 294h1v2h-1zM502 298h1v4h-1zM502 332h1v2h-1zM502 338h1v2h-1zM502 346h1v2h-1zM502 362h1v4h-1zM502 370h1v2h-1zM502 376h1v2h-1zM502 380h1v2h-1zM503 268h1v2h-1zM503 296h1v2h-1zM503 306h1v4h-1zM503 324h1v2h-1zM503 346h1v2h-1zM503 352h1v4h-1zM503 368h1v2h-1zM503 374h1v2h-1zM503 390h1v2h-1zM504 272h1v2h-1zM504 348h1v2h-1zM504 354h1v2h-1zM504 360h1v2h-1zM504 372h1v2h-1zM504 386h1v2h-1zM505 224h1v6h-1zM505 240h1v4h-1zM505 250h1v4h-1zM505 258h1v2h-1zM505 286h1v6h-1zM505 294h1v2h-1zM505 298h1v4h-1zM505 330h1v2h-1zM505 334h1v2h-1zM505 338h1v2h-1zM505 344h1v2h-1zM505 364h1v2h-1zM505 370h1v2h-1zM505 376h1v4h-1zM505 388h1v2h-1zM505 394h1v2h-1zM505 404h1v1h-1zM508 244h1v2h-1zM508 316h1v2h-1zM508 340h1v2h-1zM509 222h1v2h-1zM509 242h1v2h-1zM509 246h1v2h-1zM509 250h1v2h-1zM509 278h1v2h-1zM509 312h1v6h-1zM509 322h1v2h-1zM509 326h1v2h-1zM509 364h1v2h-1zM510 250h1v2h-1zM510 364h1v2h-1zM512 340h1v2h-1zM530 360h1v2h-1zM536 340h1v2h-1zM538 340h1v2h-1zM553 340h1v2h-1zM555 340h1v2h-1zM556 340h1v2h-1zM583 360h1v2h-1zM584 362h1v2h-1zM630 362h1v2h-1zM631 362h1v2h-1zM726 362h1v2h-1zM728 362h1v2h-1zM729 362h1v2h-1zM805 360h1v2h-1zM836 360h1v2h-1zM862 362h1v2h-1zM863 362h1v2h-1zM865 362h1v2h-1z"/><path fill="#0058ff" d="M493 246h1v2h-1zM493 258h1v2h-1zM493 262h1v2h-1zM493 266h1v2h-1zM493 294h1v2h-1zM493 298h1v4h-1zM493 312h1v4h-1zM493 332h1v2h-1zM493 338h1v2h-1zM493 378h1v2h-1zM493 394h1v2h-1zM494 232h1v2h-1zM494 252h1v2h-1zM494 256h1v2h-1zM494 260h1v6h-1zM494 270h1v2h-1zM494 296h1v2h-1zM494 320h1v2h-1zM494 332h1v2h-1zM494 336h1v2h-1zM494 380h1v2h-1zM494 384h1v6h-1zM494 404h1v1h-1zM495 248h1v2h-1zM495 254h1v2h-1zM495 340h1v2h-1zM495 368h1v2h-1zM496 232h1v2h-1zM496 246h1v6h-1zM496 270h1v4h-1zM496 280h1v2h-1zM496 286h1v2h-1zM496 302h1v2h-1zM496 328h1v2h-1zM496 336h1v2h-1zM496 364h1v2h-1zM496 370h1v2h-1zM496 384h1v2h-1zM496 388h1v2h-1zM497 240h1v2h-1zM497 258h1v2h-1zM497 262h1v2h-1zM497 276h1v2h-1zM497 288h1v2h-1zM497 298h1v2h-1zM497 304h1v2h-1zM497 308h1v2h-1zM497 312h1v2h-1zM497 326h1v2h-1zM497 334h1v2h-1zM497 338h1v2h-1zM497 376h1v2h-1zM497 392h1v2h-1zM497 396h1v4h-1zM499 312h1v2h-1zM499 388h1v2h-1zM499 396h1v2h-1zM499 400h1v2h-1zM500 258h1v2h-1zM500 294h1v2h-1zM500 312h1v2h-1zM500 382h1v2h-1zM500 388h1v2h-1zM500 396h1v2h-1zM500 400h1v2h-1zM502 242h1v2h-1zM502 274h1v2h-1zM502 312h1v2h-1zM502 326h1v2h-1zM502 378h1v2h-1zM502 382h1v2h-1zM502 392h1v6h-1zM502 400h1v2h-1zM503 234h1v2h-1zM503 260h1v4h-1zM503 270h1v4h-1zM503 280h1v2h-1zM503 310h1v2h-1zM503 314h1v2h-1zM503 318h1v2h-1zM503 330h1v2h-1zM503 336h1v2h-1zM503 350h1v2h-1zM503 360h1v2h-1zM503 366h1v2h-1zM504 236h1v2h-1zM504 256h1v2h-1zM504 268h1v4h-1zM504 296h1v2h-1zM504 304h1v2h-1zM504 308h1v2h-1zM504 316h1v2h-1zM504 320h1v6h-1zM504 350h1v4h-1zM504 374h1v2h-1zM504 384h1v2h-1zM504 390h1v2h-1zM504 402h1v2h-1zM505 246h1v2h-1zM505 276h1v4h-1zM505 292h1v2h-1zM505 326h1v2h-1zM505 382h1v2h-1zM505 392h1v2h-1zM505 396h1v6h-1zM508 312h1v2h-1zM509 240h1v2h-1zM509 244h1v2h-1zM509 274h1v2h-1zM509 340h1v2h-1zM509 362h1v2h-1zM510 244h1v2h-1zM510 312h1v2h-1zM510 340h1v2h-1zM514 366h1v2h-1zM515 366h1v2h-1zM528 360h1v2h-1zM584 360h1v2h-1zM585 360h1v2h-1zM629 360h1v2h-1zM631 360h1v2h-1zM729 360h1v2h-1zM807 360h1v2h-1zM833 360h1v2h-1zM834 360h1v2h-1zM835 360h1v2h-1zM864 360h1v2h-1z"/><path fill="#008eff" d="M493 274h1v4h-1zM493 376h1v2h-1zM493 398h1v2h-1zM494 222h1v2h-1zM494 234h1v2h-1zM494 250h1v2h-1zM494 254h1v2h-1zM494 268h1v2h-1zM494 280h1v2h-1zM494 288h1v2h-1zM494 302h1v4h-1zM494 310h1v2h-1zM494 314h1v4h-1zM494 322h1v2h-1zM494 362h1v2h-1zM494 366h1v2h-1zM494 394h1v6h-1zM495 222h1v2h-1zM495 238h1v2h-1zM495 252h1v2h-1zM495 260h1v2h-1zM495 264h1v2h-1zM495 268h1v2h-1zM495 310h1v2h-1zM495 328h1v2h-1zM495 336h1v2h-1zM495 362h1v4h-1zM495 370h1v2h-1zM495 384h1v2h-1zM495 388h1v4h-1zM495 400h1v4h-1zM496 234h1v2h-1zM496 238h1v2h-1zM496 242h1v2h-1zM496 256h1v2h-1zM496 260h1v2h-1zM496 268h1v2h-1zM496 284h1v2h-1zM496 296h1v2h-1zM496 324h1v2h-1zM496 330h1v4h-1zM496 338h1v2h-1zM496 366h1v2h-1zM496 380h1v2h-1zM496 396h1v2h-1zM497 278h1v2h-1zM497 294h1v2h-1zM497 300h1v2h-1zM497 382h1v2h-1zM499 376h1v2h-1zM499 382h1v2h-1zM499 394h1v2h-1zM499 398h1v2h-1zM502 244h1v2h-1zM502 398h1v2h-1zM503 236h1v4h-1zM503 248h1v2h-1zM503 264h1v2h-1zM503 284h1v2h-1zM503 302h1v2h-1zM503 320h1v4h-1zM503 364h1v2h-1zM503 380h1v2h-1zM503 386h1v2h-1zM504 248h1v2h-1zM504 262h1v2h-1zM504 284h1v4h-1zM504 294h1v2h-1zM504 302h1v2h-1zM504 306h1v2h-1zM504 314h1v2h-1zM504 318h1v2h-1zM504 328h1v4h-1zM504 334h1v4h-1zM504 346h1v2h-1zM504 368h1v2h-1zM504 388h1v2h-1zM505 244h1v2h-1zM511 340h1v2h-1zM512 364h1v2h-1zM517 364h1v2h-1zM572 340h1v2h-1zM573 340h1v2h-1zM582 360h1v2h-1zM630 360h1v2h-1zM863 360h1v2h-1zM865 360h1v2h-1z"/><path fill="#00c3ff" d="M493 326h1v2h-1zM494 230h1v2h-1zM494 244h1v4h-1zM494 258h1v2h-1zM494 282h1v6h-1zM494 328h1v4h-1zM494 334h1v2h-1zM494 364h1v2h-1zM494 370h1v2h-1zM494 378h1v2h-1zM495 232h1v2h-1zM495 246h1v2h-1zM495 250h1v2h-1zM495 270h1v4h-1zM495 280h1v4h-1zM495 302h1v2h-1zM495 306h1v4h-1zM495 318h1v8h-1zM495 334h1v2h-1zM495 366h1v2h-1zM496 230h1v2h-1zM496 240h1v2h-1zM496 258h1v2h-1zM496 266h1v2h-1zM496 304h1v8h-1zM496 314h1v2h-1zM496 322h1v2h-1zM496 334h1v2h-1zM496 376h1v2h-1zM496 398h1v2h-1zM496 404h1v1h-1zM497 274h1v2h-1zM499 378h1v2h-1zM500 376h1v4h-1zM500 392h1v2h-1zM500 398h1v2h-1zM503 222h1v2h-1zM503 232h1v2h-1zM503 250h1v2h-1zM503 254h1v4h-1zM503 266h1v2h-1zM503 282h1v2h-1zM503 286h1v2h-1zM503 304h1v2h-1zM503 316h1v2h-1zM503 328h1v2h-1zM503 332h1v4h-1zM503 338h1v2h-1zM503 362h1v2h-1zM503 370h1v2h-1zM503 394h1v2h-1zM504 232h1v4h-1zM504 238h1v2h-1zM504 250h1v6h-1zM504 260h1v2h-1zM504 264h1v4h-1zM504 280h1v2h-1zM504 290h1v2h-1zM504 298h1v2h-1zM504 310h1v2h-1zM504 362h1v2h-1zM504 378h1v4h-1zM505 274h1v2h-1zM570 340h1v2h-1zM571 340h1v2h-1zM727 360h1v2h-1zM728 360h1v2h-1zM862 360h1v2h-1z"/><path fill="#00ddde" d="M493 292h1v2h-1zM494 242h1v2h-1zM494 266h1v2h-1zM494 276h1v4h-1zM494 290h1v2h-1zM494 306h1v4h-1zM494 312h1v2h-1zM494 338h1v2h-1zM494 400h1v2h-1zM495 234h1v2h-1zM495 284h1v4h-1zM495 296h1v2h-1zM495 300h1v2h-1zM495 338h1v2h-1zM495 398h1v2h-1zM495 404h1v1h-1zM496 244h1v2h-1zM496 282h1v2h-1zM496 290h1v2h-1zM496 298h1v2h-1zM496 316h1v2h-1zM496 362h1v2h-1zM496 394h1v2h-1zM496 400h1v2h-1zM497 292h1v2h-1zM499 392h1v2h-1zM500 340h1v4h-1zM503 230h1v2h-1zM503 240h1v6h-1zM503 252h1v2h-1zM503 290h1v4h-1zM503 384h1v2h-1zM503 388h1v2h-1zM503 396h1v2h-1zM503 400h1v4h-1zM504 230h1v2h-1zM504 240h1v2h-1zM504 282h1v2h-1zM504 288h1v2h-1zM504 292h1v2h-1zM504 300h1v2h-1zM504 332h1v2h-1zM504 366h1v2h-1zM504 404h1v1h-1zM505 340h1v4h-1zM726 360h1v2h-1z"/><path fill="#00f4bb" d="M494 228h1v2h-1zM494 240h1v2h-1zM494 298h1v4h-1zM494 326h1v2h-1zM495 242h1v2h-1zM495 256h1v2h-1zM495 262h1v2h-1zM495 266h1v2h-1zM495 276h1v2h-1zM495 304h1v2h-1zM495 330h1v4h-1zM495 378h1v6h-1zM495 396h1v2h-1zM496 228h1v2h-1zM496 262h1v2h-1zM496 278h1v2h-1zM496 288h1v2h-1zM496 292h1v2h-1zM496 300h1v2h-1zM496 392h1v2h-1zM503 258h1v2h-1zM503 278h1v2h-1zM503 288h1v2h-1zM503 294h1v2h-1zM503 298h1v4h-1zM503 398h1v2h-1zM503 404h1v1h-1zM504 222h1v2h-1zM504 242h1v2h-1zM504 258h1v2h-1zM504 276h1v4h-1zM504 312h1v2h-1zM504 338h1v2h-1zM504 364h1v2h-1zM504 370h1v2h-1zM504 376h1v2h-1zM504 382h1v2h-1zM504 398h1v2h-1zM512 362h1v2h-1zM517 362h1v2h-1z"/><path fill="#07ff8b" d="M494 224h1v4h-1zM494 376h1v2h-1zM494 382h1v2h-1zM495 230h1v2h-1zM495 240h1v2h-1zM495 258h1v2h-1zM495 290h1v2h-1zM495 314h1v4h-1zM495 326h1v2h-1zM495 394h1v2h-1zM496 224h1v4h-1zM496 274h1v2h-1zM496 312h1v2h-1zM496 378h1v2h-1zM496 382h1v2h-1zM501 344h1v2h-1zM503 224h1v6h-1zM503 246h1v2h-1zM503 312h1v2h-1zM503 378h1v2h-1zM503 392h1v2h-1zM504 224h1v6h-1zM504 244h1v4h-1zM504 344h1v2h-1zM504 394h1v4h-1zM504 400h1v2h-1z"/><path fill="#15ff50" d="M494 274h1v2h-1zM494 292h1v4h-1zM494 392h1v2h-1zM495 244h1v2h-1zM495 278h1v2h-1zM495 288h1v2h-1zM495 298h1v2h-1zM495 312h1v2h-1zM495 376h1v2h-1zM496 276h1v2h-1zM496 294h1v2h-1zM503 326h1v2h-1zM503 376h1v2h-1zM504 274h1v2h-1z"/><path fill="#22ff15" d="M495 228h1v2h-1zM495 294h1v2h-1zM495 392h1v2h-1zM503 276h1v2h-1zM503 382h1v2h-1z"/><path fill="#4bff00" d="M495 224h1v4h-1zM495 292h1v2h-1zM496 326h1v2h-1zM503 274h1v2h-1zM504 392h1v2h-1zM513 364h1v2h-1zM516 364h1v2h-1z"/><path fill="#83ff00" d="M495 274h1v2h-1zM504 326h1v2h-1z"/><path fill="#bbff00" d="M502 344h1v2h-1zM503 344h1v2h-1z"/><path fill="#ffa800" d="M501 340h1v4h-1zM504 340h1v4h-1z"/><path fill="#ff7400" d="M514 364h1v2h-1zM515 364h1v2h-1z"/><path fill="#ff3a00" d="M513 362h1v2h-1zM516 362h1v2h-1z"/><path fill="#ff0000" d="M502 340h1v4h-1zM503 340h1v4h-1zM514 362h1v2h-1zM515 362h1v2h-1z"/></svg>
<div class="a" style="left:29px;top:222px;width:428px;height:183px;background:repeating-linear-gradient(180deg,rgba(0,0,0,0) 0px,rgba(0,0,0,0) 1px,rgba(0,0,0,0.28) 1px,rgba(0,0,0,0.28) 2px);"></div>
<div class="a" style="left:493px;top:222px;width:427px;height:183px;background:repeating-linear-gradient(180deg,rgba(0,0,0,0) 0px,rgba(0,0,0,0) 1px,rgba(0,0,0,0.28) 1px,rgba(0,0,0,0.28) 2px);"></div>
<div class="t" style="left:29.0px;top:214.7px;font-size:5.5px;font-weight:bold;color:#000;transform:translateX(-50%) scaleX(1.0);">0</div>
<div class="t" style="left:493.0px;top:214.7px;font-size:5.5px;font-weight:bold;color:#000;transform:translateX(-50%) scaleX(1.0);">0</div>
<div class="t" style="left:114.6px;top:214.7px;font-size:5.5px;font-weight:bold;color:#000;transform:translateX(-50%) scaleX(1.0);">2</div>
<div class="t" style="left:578.4px;top:214.7px;font-size:5.5px;font-weight:bold;color:#000;transform:translateX(-50%) scaleX(1.0);">2</div>
<div class="t" style="left:200.2px;top:214.7px;font-size:5.5px;font-weight:bold;color:#000;transform:translateX(-50%) scaleX(1.0);">4</div>
<div class="t" style="left:663.8px;top:214.7px;font-size:5.5px;font-weight:bold;color:#000;transform:translateX(-50%) scaleX(1.0);">4</div>
<div class="t" style="left:285.79999999999995px;top:214.7px;font-size:5.5px;font-weight:bold;color:#000;transform:translateX(-50%) scaleX(1.0);">6</div>
<div class="t" style="left:749.2px;top:214.7px;font-size:5.5px;font-weight:bold;color:#000;transform:translateX(-50%) scaleX(1.0);">6</div>
<div class="t" style="left:371.4px;top:214.7px;font-size:5.5px;font-weight:bold;color:#000;transform:translateX(-50%) scaleX(1.0);">8</div>
<div class="t" style="left:834.6px;top:214.7px;font-size:5.5px;font-weight:bold;color:#000;transform:translateX(-50%) scaleX(1.0);">8</div>
<div class="t" style="left:457.0px;top:214.7px;font-size:5.5px;font-weight:bold;color:#000;transform:translateX(-50%) scaleX(1.0);">10</div>
<div class="t" style="left:920.0px;top:214.7px;font-size:5.5px;font-weight:bold;color:#000;transform:translateX(-50%) scaleX(1.0);">10</div>
<svg width="950" height="514" style="overflow:visible"><path d="M29.0 220V222M493.0 220V222M71.8 220V222M535.7 220V222M114.6 220V222M578.4 220V222M157.4 220V222M621.1 220V222M200.2 220V222M663.8 220V222M243.0 220V222M706.5 220V222M285.8 220V222M749.2 220V222M328.6 220V222M791.9 220V222M371.4 220V222M834.6 220V222M414.2 220V222M877.3 220V222M457.0 220V222M920.0 220V222M21 222.0H23M927 222.0H929M21 240.3H23M927 240.3H929M21 258.6H23M927 258.6H929M21 276.9H23M927 276.9H929M21 295.2H23M927 295.2H929M21 313.5H23M927 313.5H929M21 331.8H23M927 331.8H929M21 350.1H23M927 350.1H929M21 368.4H23M927 368.4H929M21 386.7H23M927 386.7H929M21 405.0H23M927 405.0H929M457 259.5H460.5M490 259.5H493M457 295.5H460.5M490 295.5H493M457 332.5H460.5M490 332.5H493M457 369.5H460.5M490 369.5H493" stroke="#33dd33" stroke-width="1" fill="none"/></svg>
<div class="t" style="left:468px;top:214.7px;font-size:5.5px;font-weight:bold;color:#000;transform:scaleX(1.0);transform-origin:0 50%;">(kHz)</div>
<div class="t" style="right:928.5px;top:218.7px;font-size:5.5px;font-weight:bold;color:#0000ff;transform:scaleX(1.0);transform-origin:100% 50%;">100</div>
<div class="t" style="left:929px;top:218.7px;font-size:5.5px;font-weight:bold;color:#ff0000;transform:scaleX(1.0);transform-origin:0 50%;">100</div>
<div class="t" style="right:928.5px;top:255.2px;font-size:5.5px;font-weight:bold;color:#0000ff;transform:scaleX(1.0);transform-origin:100% 50%;">80</div>
<div class="t" style="left:929px;top:255.2px;font-size:5.5px;font-weight:bold;color:#ff0000;transform:scaleX(1.0);transform-origin:0 50%;">80</div>
<div class="t" style="right:928.5px;top:291.7px;font-size:5.5px;font-weight:bold;color:#0000ff;transform:scaleX(1.0);transform-origin:100% 50%;">60</div>
<div class="t" style="left:929px;top:291.7px;font-size:5.5px;font-weight:bold;color:#ff0000;transform:scaleX(1.0);transform-origin:0 50%;">60</div>
<div class="t" style="right:928.5px;top:328.2px;font-size:5.5px;font-weight:bold;color:#0000ff;transform:scaleX(1.0);transform-origin:100% 50%;">40</div>
<div class="t" style="left:929px;top:328.2px;font-size:5.5px;font-weight:bold;color:#ff0000;transform:scaleX(1.0);transform-origin:0 50%;">40</div>
<div class="t" style="right:928.5px;top:364.7px;font-size:5.5px;font-weight:bold;color:#0000ff;transform:scaleX(1.0);transform-origin:100% 50%;">20</div>
<div class="t" style="left:929px;top:364.7px;font-size:5.5px;font-weight:bold;color:#ff0000;transform:scaleX(1.0);transform-origin:0 50%;">20</div>
<div class="t" style="right:928.5px;top:401.2px;font-size:5.5px;font-weight:bold;color:#0000ff;transform:scaleX(1.0);transform-origin:100% 50%;">0</div>
<div class="t" style="left:929px;top:401.2px;font-size:5.5px;font-weight:bold;color:#ff0000;transform:scaleX(1.0);transform-origin:0 50%;">0</div>
<div class="t" style="left:460.7px;top:223.0px;font-size:5.3px;font-weight:bold;color:#008080;transform:scaleX(1.0);transform-origin:0 50%;">0%</div>
<div class="t" style="left:460.7px;top:256.1px;font-size:5.3px;font-weight:bold;color:#008080;transform:scaleX(1.0);transform-origin:0 50%;">1.99%</div>
<div class="t" style="left:460.7px;top:292.7px;font-size:5.3px;font-weight:bold;color:#008080;transform:scaleX(1.0);transform-origin:0 50%;">3.99%</div>
<div class="t" style="left:460.7px;top:329.3px;font-size:5.3px;font-weight:bold;color:#008080;transform:scaleX(1.0);transform-origin:0 50%;">5.99%</div>
<div class="t" style="left:460.7px;top:365.9px;font-size:5.3px;font-weight:bold;color:#008080;transform:scaleX(1.0);transform-origin:0 50%;">7.99%</div>
<svg width="950" height="514" style="overflow:visible"><path d="M29.5 410.5V483.5H457.5V410.5M492.5 410.5V483.5H920.5V410.5M29.5 410.5h-1.5M920.5 410.5h1.5M457.5 410.5h1.5M492.5 410.5h-1.5M29.5 417.5h-1.5M920.5 417.5h1.5M457.5 417.5h1.5M492.5 417.5h-1.5M29.5 425.5h-1.5M920.5 425.5h1.5M457.5 425.5h1.5M492.5 425.5h-1.5M29.5 432.5h-1.5M920.5 432.5h1.5M457.5 432.5h1.5M492.5 432.5h-1.5M29.5 439.5h-1.5M920.5 439.5h1.5M457.5 439.5h1.5M492.5 439.5h-1.5M29.5 446.5h-1.5M920.5 446.5h1.5M457.5 446.5h1.5M492.5 446.5h-1.5M29.5 454.5h-1.5M920.5 454.5h1.5M457.5 454.5h1.5M492.5 454.5h-1.5M29.5 461.5h-1.5M920.5 461.5h1.5M457.5 461.5h1.5M492.5 461.5h-1.5M29.5 468.5h-1.5M920.5 468.5h1.5M457.5 468.5h1.5M492.5 468.5h-1.5M29.5 475.5h-1.5M920.5 475.5h1.5M457.5 475.5h1.5M492.5 475.5h-1.5M29.5 483.5h-1.5M920.5 483.5h1.5M457.5 483.5h1.5M492.5 483.5h-1.5M29.5 483.5v1.5M492.5 483.5v1.5M72.5 483.5v1.5M535.5 483.5v1.5M115.5 483.5v1.5M578.5 483.5v1.5M157.5 483.5v1.5M620.5 483.5v1.5M200.5 483.5v1.5M663.5 483.5v1.5M243.5 483.5v1.5M706.5 483.5v1.5M286.5 483.5v1.5M749.5 483.5v1.5M329.5 483.5v1.5M792.5 483.5v1.5M371.5 483.5v1.5M834.5 483.5v1.5M414.5 483.5v1.5M877.5 483.5v1.5M457.5 483.5v1.5M920.5 483.5v1.5" stroke="#44ee44" stroke-width="1" fill="none"/><polyline points="30,471.7 31,473.1 32,473.1 33,468.7 34,469.5 35,475.6 36,471.7 37,450.2 38,434.6 39,450.0 40,472.2 41,479.8 42,478.9 43,478.0 44,476.4 45,470.4 46,466.4 47,470.8 48,477.5 49,478.0 50,475.4 51,476.8 52,474.7 53,470.9 54,471.9 55,469.2 56,465.4 57,471.1 58,478.5 59,480.2 60,478.9 61,478.1 62,478.8 63,479.3 64,477.9 65,476.7 66,477.8 67,479.8 68,480.6 69,479.9 70,479.3 71,479.5 72,479.1 73,477.4 74,476.4 75,478.0 76,480.7 77,482.4 78,482.8 79,482.5 80,481.7 81,479.1 82,474.6 83,472.0 84,475.0 85,479.7 86,481.9 87,482.3 88,482.3 89,482.5 90,482.8 91,483.0 92,482.9 93,482.6 94,482.3 95,482.3 96,482.5 97,482.8 98,483.0 99,482.9" stroke="#3030ff" stroke-width="0.9" fill="none"/><path d="M100 482.5h5M108 482.5h6M117 482.5h8M134 482.5h8M151 482.5h5M159 482.5h8M170 482.5h8M187 482.5h10M200 482.5h12M221 482.5h6M232 482.5h10M245 482.5h6M254 482.5h4M261 482.5h12M276 482.5h8M289 482.5h8M300 482.5h10M315 482.5h8M332 482.5h10M347 482.5h6M358 482.5h12M375 482.5h8M390 482.5h4M403 482.5h10M416 482.5h5M428 482.5h4M439 482.5h12" stroke="#3030ff" stroke-width="1" fill="none"/><polyline points="493,477.6 494,475.7 495,476.1 496,476.1 497,474.7 498,475.5 499,478.8 500,480.6 501,479.3 502,475.4 503,470.9 504,469.1 505,471.4 506,475.7 507,478.7 508,479.2 509,479.2 510,480.2 511,481.7 512,482.7 513,482.9 514,482.6 515,482.3 516,482.3 517,482.5 518,482.8 519,483.0 520,482.9 521,482.6 522,482.3 523,482.3 524,482.5 525,482.8 526,483.0 527,482.9 528,482.6 529,482.3 530,482.3 531,482.5 532,482.8 533,483.0 534,482.9 535,482.6 536,482.3 537,482.3 538,482.5 539,482.8 540,483.0 541,482.8 542,482.2 543,481.5 544,480.9 545,480.6 546,480.7 547,481.1 548,481.5 549,481.8 550,482.0 551,482.2 552,482.5" stroke="#ff3030" stroke-width="0.9" fill="none"/><path d="M553 482.5h4M560 482.5h4M571 482.5h5M583 482.5h6M594 482.5h10M607 482.5h10M622 482.5h8M639 482.5h12M658 482.5h10M677 482.5h10M694 482.5h4M701 482.5h6M716 482.5h6M731 482.5h8M744 482.5h10M759 482.5h5M769 482.5h4M778 482.5h6M789 482.5h5M801 482.5h10M816 482.5h8M833 482.5h12M852 482.5h10M869 482.5h6M884 482.5h5M898 482.5h12" stroke="#ff3030" stroke-width="1" fill="none"/></svg>
<div class="t" style="right:921.8px;top:407.7px;font-size:5.5px;font-weight:bold;color:#0000ff;transform:scaleX(1.0);transform-origin:100% 50%;">100</div>
<div class="t" style="left:922.8px;top:407.7px;font-size:5.5px;font-weight:bold;color:#ff0000;transform:scaleX(1.0);transform-origin:0 50%;">100</div>
<div class="t" style="right:921.8px;top:422.2px;font-size:5.5px;font-weight:bold;color:#0000ff;transform:scaleX(1.0);transform-origin:100% 50%;">80</div>
<div class="t" style="left:922.8px;top:422.2px;font-size:5.5px;font-weight:bold;color:#ff0000;transform:scaleX(1.0);transform-origin:0 50%;">80</div>
<div class="t" style="right:921.8px;top:436.7px;font-size:5.5px;font-weight:bold;color:#0000ff;transform:scaleX(1.0);transform-origin:100% 50%;">60</div>
<div class="t" style="left:922.8px;top:436.7px;font-size:5.5px;font-weight:bold;color:#ff0000;transform:scaleX(1.0);transform-origin:0 50%;">60</div>
<div class="t" style="right:921.8px;top:451.2px;font-size:5.5px;font-weight:bold;color:#0000ff;transform:scaleX(1.0);transform-origin:100% 50%;">40</div>
<div class="t" style="left:922.8px;top:451.2px;font-size:5.5px;font-weight:bold;color:#ff0000;transform:scaleX(1.0);transform-origin:0 50%;">40</div>
<div class="t" style="right:921.8px;top:465.7px;font-size:5.5px;font-weight:bold;color:#0000ff;transform:scaleX(1.0);transform-origin:100% 50%;">20</div>
<div class="t" style="left:922.8px;top:465.7px;font-size:5.5px;font-weight:bold;color:#ff0000;transform:scaleX(1.0);transform-origin:0 50%;">20</div>
<div class="t" style="right:921.8px;top:480.2px;font-size:5.5px;font-weight:bold;color:#0000ff;transform:scaleX(1.0);transform-origin:100% 50%;">0</div>
<div class="t" style="left:922.8px;top:480.2px;font-size:5.5px;font-weight:bold;color:#ff0000;transform:scaleX(1.0);transform-origin:0 50%;">0</div>
<div class="t" style="left:30.0px;top:484.7px;font-size:5.5px;font-weight:bold;color:#000;transform:translateX(-50%) scaleX(1.0);">0</div>
<div class="t" style="left:493.0px;top:484.7px;font-size:5.5px;font-weight:bold;color:#000;transform:translateX(-50%) scaleX(1.0);">0</div>
<div class="t" style="left:115.4px;top:484.7px;font-size:5.5px;font-weight:bold;color:#000;transform:translateX(-50%) scaleX(1.0);">2</div>
<div class="t" style="left:578.4px;top:484.7px;font-size:5.5px;font-weight:bold;color:#000;transform:translateX(-50%) scaleX(1.0);">2</div>
<div class="t" style="left:200.8px;top:484.7px;font-size:5.5px;font-weight:bold;color:#000;transform:translateX(-50%) scaleX(1.0);">4</div>
<div class="t" style="left:663.8px;top:484.7px;font-size:5.5px;font-weight:bold;color:#000;transform:translateX(-50%) scaleX(1.0);">4</div>
<div class="t" style="left:286.20000000000005px;top:484.7px;font-size:5.5px;font-weight:bold;color:#000;transform:translateX(-50%) scaleX(1.0);">6</div>
<div class="t" style="left:749.2px;top:484.7px;font-size:5.5px;font-weight:bold;color:#000;transform:translateX(-50%) scaleX(1.0);">6</div>
<div class="t" style="left:371.6px;top:484.7px;font-size:5.5px;font-weight:bold;color:#000;transform:translateX(-50%) scaleX(1.0);">8</div>
<div class="t" style="left:834.6px;top:484.7px;font-size:5.5px;font-weight:bold;color:#000;transform:translateX(-50%) scaleX(1.0);">8</div>
<div class="t" style="left:457.0px;top:484.7px;font-size:5.5px;font-weight:bold;color:#000;transform:translateX(-50%) scaleX(1.0);">10</div>
<div class="t" style="left:920.0px;top:484.7px;font-size:5.5px;font-weight:bold;color:#000;transform:translateX(-50%) scaleX(1.0);">10</div>
<div class="t" style="left:33px;top:489.7px;font-size:5.5px;font-weight:bold;color:#222;transform:scaleX(1.0);transform-origin:0 50%;">T=13:36:15:730</div>
<div class="t" style="left:437.5px;top:489.0px;font-size:5.5px;font-weight:bold;color:#000;transform:scaleX(1.0);transform-origin:0 50%;">RMS AMPLITUDE SPECTRUM</div>
<div class="t" style="left:929px;top:488.7px;font-size:5.5px;font-weight:bold;color:#000;transform:scaleX(1.0);transform-origin:0 50%;">(kHz)</div>
<div class="t" style="left:446px;top:411.1px;font-size:6.5px;font-weight:bold;color:#ff00ff;transform:scaleX(1.3);transform-origin:0 50%;">MI</div>
<div class="t" style="left:910px;top:411.1px;font-size:6.5px;font-weight:bold;color:#ff00ff;transform:scaleX(1.3);transform-origin:0 50%;">MI</div>
</body></html>
